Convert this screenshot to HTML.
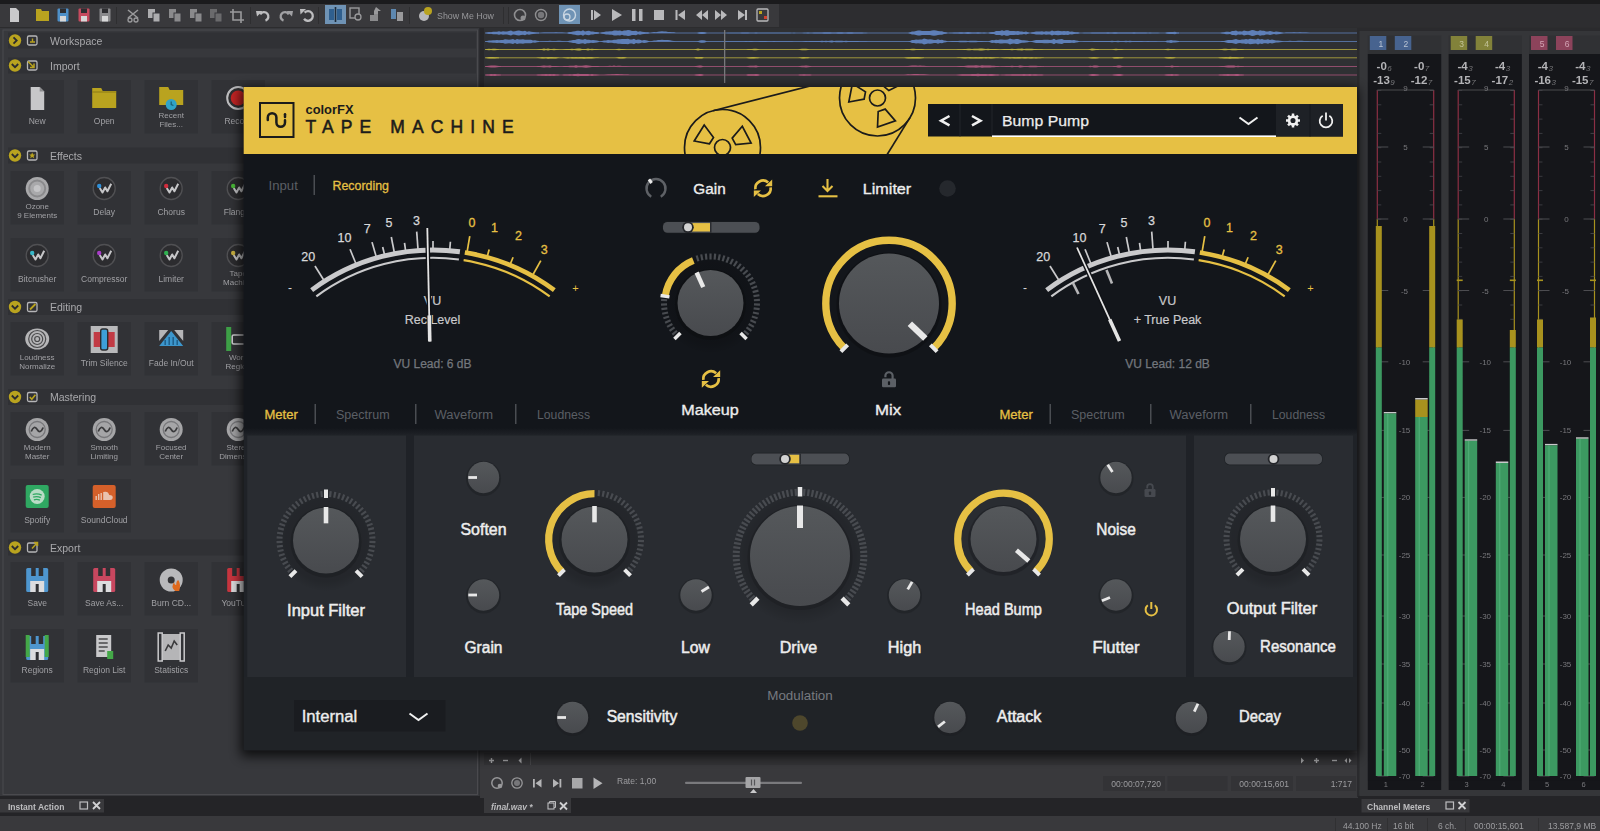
<!DOCTYPE html>
<html><head><meta charset="utf-8"><title>Tape Machine</title>
<style>
html,body{margin:0;padding:0;background:#2a2a2c;overflow:hidden}
svg{display:block;font-family:"Liberation Sans", sans-serif}
</style></head><body>
<svg width="1600" height="831" viewBox="0 0 1600 831">
<defs>
<linearGradient id="kg" x1="0" y1="0" x2="0" y2="1"><stop offset="0" stop-color="#55585B"/><stop offset="1" stop-color="#484A4E"/></linearGradient>
<linearGradient id="shL" x1="1" y1="0" x2="0" y2="0"><stop offset="0" stop-color="#000" stop-opacity="0.45"/><stop offset="1" stop-color="#000" stop-opacity="0"/></linearGradient>
<linearGradient id="shB" x1="0" y1="0" x2="0" y2="1"><stop offset="0" stop-color="#000" stop-opacity="0.5"/><stop offset="1" stop-color="#000" stop-opacity="0"/></linearGradient>
<linearGradient id="bodyfade" x1="0" y1="0" x2="0" y2="1"><stop offset="0" stop-color="#13161B"/><stop offset="1" stop-color="#1F2227"/></linearGradient>
<radialGradient id="ksh"><stop offset="0" stop-color="#000" stop-opacity="0.16"/><stop offset="0.8" stop-color="#000" stop-opacity="0.13"/><stop offset="1" stop-color="#000" stop-opacity="0"/></radialGradient>
<filter id="pshadow" color-interpolation-filters="sRGB" x="-5%" y="-5%" width="110%" height="110%"><feGaussianBlur stdDeviation="6"/></filter>
<filter id="soft" color-interpolation-filters="sRGB" x="-2%" y="-2%" width="104%" height="104%"><feGaussianBlur stdDeviation="0.6"/></filter>
<clipPath id="hdrclip"><rect x="243.7" y="87" width="1113.3" height="67"/></clipPath>
</defs>
<g id="hostapp" filter="url(#soft)">
<rect x="0" y="0" width="1600" height="831" fill="#2A2A2C"/>
<rect x="0" y="0" width="1600" height="4" fill="#1B1B1D"/>
<rect x="0" y="4" width="1600" height="24" fill="#39393C"/>
<rect x="779" y="4" width="821" height="24" fill="#2D2D30"/>
<rect x="0" y="27" width="1600" height="1.5" fill="#2C2C2E"/>
<path d="M10 8h6l3 3v11h-9z" fill="#C9C9CB"/>
<path d="M36 9h5l1 2h7v10h-13z" fill="#B9A31F"/>
<rect x="57.5" y="8.5" width="11" height="13" rx="1" fill="#4E90C8"/>
<rect x="60" y="8.5" width="6" height="4.5" fill="#2d2d30"/>
<rect x="60" y="16" width="6" height="5.5" fill="#d8d8d8"/>
<rect x="78.5" y="8.5" width="11" height="13" rx="1" fill="#C64A5E"/>
<rect x="81" y="8.5" width="6" height="4.5" fill="#2d2d30"/>
<rect x="81" y="16" width="6" height="5.5" fill="#d8d8d8"/>
<rect x="99.5" y="8.5" width="11" height="13" rx="1" fill="#8A8A8C"/>
<rect x="102" y="8.5" width="6" height="4.5" fill="#2d2d30"/>
<rect x="102" y="16" width="6" height="5.5" fill="#d8d8d8"/>
<rect x="116" y="7" width="1" height="17" fill="#2e2e30"/>
<path d="M128 10l10 8M138 10l-10 8" stroke="#9A9A9C" stroke-width="1.6" fill="none"/>
<circle cx="130" cy="20" r="2" fill="none" stroke="#9A9A9C" stroke-width="1.3"/><circle cx="136" cy="20" r="2" fill="none" stroke="#9A9A9C" stroke-width="1.3"/>
<rect x="148" y="9" width="7" height="9" fill="#ADADAF"/><rect x="153" y="13" width="7" height="9" fill="#ADADAF" stroke="#39393C" stroke-width="1"/>
<rect x="169" y="9" width="7" height="9" fill="#8A8A8C"/><rect x="174" y="13" width="7" height="9" fill="#8A8A8C" stroke="#39393C" stroke-width="1"/>
<rect x="190" y="9" width="7" height="9" fill="#8A8A8C"/><rect x="195" y="13" width="7" height="9" fill="#8A8A8C" stroke="#39393C" stroke-width="1"/>
<rect x="210" y="9" width="7" height="9" fill="#6A6A6C"/><rect x="215" y="13" width="7" height="9" fill="#6A6A6C" stroke="#39393C" stroke-width="1"/>
<path d="M233 9v11h11M230 12h11v11" stroke="#9A9A9C" stroke-width="1.6" fill="none"/>
<rect x="250" y="7" width="1" height="17" fill="#2e2e30"/>
<path d="M260.19 14.30A4.4 4.4 0 1 1 265.50 20.63" stroke="#BDBDBF" stroke-width="2.400" fill="none"/><path d="M256 11.0h6.500l-5.500 5.500z" fill="#BDBDBF"/>
<path d="M288.81 14.30A4.4 4.4 0 1 0 283.50 20.63" stroke="#A0A0A3" stroke-width="2.400" fill="none"/><path d="M293 11.0h-6.500l5.500 5.500z" fill="#A0A0A3"/>
<path d="M304.61 12.61A4.8 4.8 0 1 1 304.07 18.75" stroke="#BDBDBF" stroke-width="2.300" fill="none"/><path d="M300 9.0h6l-5.500 5.500z" fill="#BDBDBF"/>
<rect x="318" y="7" width="1" height="17" fill="#2e2e30"/>
<rect x="325" y="5" width="21" height="19" fill="#6F93B5"/>
<rect x="329" y="9" width="5" height="11" fill="#2F5F8E"/><rect x="337" y="9" width="5" height="11" fill="#2F5F8E"/><rect x="334.7" y="7" width="1.6" height="15" fill="#1d2b3a"/>
<rect x="350" y="8" width="9" height="10" fill="none" stroke="#9A9A9C" stroke-width="1.4"/><circle cx="358" cy="17" r="3" fill="#39393C" stroke="#9A9A9C" stroke-width="1.3"/>
<path d="M370 21v-6h4v-3h4v9z" fill="#8A8A8C"/><path d="M376 7l5 4h-3v3h-4v-3z" fill="#9A9A9C"/>
<rect x="391" y="9" width="5" height="10" fill="#5E88B0"/><rect x="397" y="12" width="6" height="9" fill="#9A9A9C"/>
<rect x="409" y="7" width="1" height="17" fill="#2e2e30"/>
<circle cx="424" cy="16" r="5" fill="#B8B8BA"/><circle cx="428" cy="11" r="4" fill="#B9A31F"/>
<text x="437" y="19" font-size="9" fill="#97979A" text-anchor="start" font-weight="normal"  textLength="57" lengthAdjust="spacingAndGlyphs">Show Me How</text>
<rect x="503" y="7" width="1" height="17" fill="#2e2e30"/><rect x="508" y="7" width="1" height="17" fill="#2e2e30"/>
<circle cx="520" cy="15" r="5.5" fill="none" stroke="#8E8E90" stroke-width="1.6"/><circle cx="523" cy="18" r="2.5" fill="#8E8E90"/>
<circle cx="541" cy="15" r="5.5" fill="none" stroke="#8E8E90" stroke-width="1.4"/><circle cx="541" cy="15" r="3.2" fill="#77777A"/>
<rect x="559" y="5" width="21" height="19" fill="#6F93B5"/>
<circle cx="569.5" cy="15" r="6" fill="none" stroke="#C9D6E2" stroke-width="1.4"/><circle cx="567" cy="17" r="3" fill="none" stroke="#C9D6E2" stroke-width="1.3"/>
<rect x="591" y="10" width="2" height="10" fill="#B9B9BB"/><path d="M594 10l7 5l-7 5z" fill="#B9B9BB"/>
<path d="M612 9l10 6l-10 6z" fill="#B9B9BB"/>
<rect x="632" y="9" width="3.5" height="12" fill="#B9B9BB"/><rect x="639" y="9" width="3.5" height="12" fill="#B9B9BB"/>
<rect x="654" y="10" width="10" height="10" fill="#B9B9BB"/>
<rect x="675.5" y="10" width="2" height="10" fill="#B9B9BB"/><path d="M685 10l-7 5l7 5z" fill="#B9B9BB"/>
<path d="M702 10l-6 5l6 5zM708 10l-6 5l6 5z" fill="#B9B9BB"/>
<path d="M715 10l6 5l-6 5zM721 10l6 5l-6 5z" fill="#B9B9BB"/>
<path d="M738 10l7 5l-7 5z" fill="#B9B9BB"/><rect x="745" y="10" width="2" height="10" fill="#B9B9BB"/>
<rect x="757" y="9" width="11" height="12" rx="1" fill="none" stroke="#B9B9BB" stroke-width="1.3"/><rect x="759" y="11" width="3" height="3" fill="#B9A31F"/><rect x="764" y="16" width="3" height="3" fill="#D0402E"/>
<rect x="0" y="28" width="479.500" height="768" fill="#37383C"/>
<rect x="3" y="30" width="474.500" height="764.500" fill="none" stroke="#4A4A4E" stroke-width="1"/>
<rect x="0" y="796" width="1600" height="20" fill="#242427"/>
<rect x="8" y="32.5" width="468" height="16" fill="#303135"/>
<circle cx="15" cy="40.5" r="6.2" fill="#B9A31F"/>
<path d="M13.5 37.3l3.2 3.2l-3.2 3.2" stroke="#2c2c2e" stroke-width="1.8" fill="none"/>
<rect x="27.5" y="36.0" width="9.5" height="9" rx="1.5" fill="none" stroke="#B5B5B7" stroke-width="1.3"/>
<path d="M30 42.0h5M32.5 38.5v3.5" stroke="#B9A31F" stroke-width="1.4"/>
<text x="50" y="44.5" font-size="10.5" fill="#A9A9AC" text-anchor="start" font-weight="normal" >Workspace</text>
<rect x="8" y="57.5" width="468" height="16" fill="#303135"/>
<circle cx="15" cy="65.5" r="6.2" fill="#B9A31F"/>
<path d="M11.8 64.0l3.2 3.2l3.2 -3.2" stroke="#2c2c2e" stroke-width="1.8" fill="none"/>
<rect x="27.5" y="61.0" width="9.5" height="9" rx="1.5" fill="none" stroke="#B5B5B7" stroke-width="1.3"/>
<path d="M28 61.5l5.5 5.5M30 67.5h4v-4" stroke="#B9A31F" stroke-width="1.5" fill="none"/>
<text x="50" y="69.5" font-size="10.5" fill="#A9A9AC" text-anchor="start" font-weight="normal" >Import</text>
<rect x="8" y="147.5" width="468" height="16" fill="#303135"/>
<circle cx="15" cy="155.5" r="6.2" fill="#B9A31F"/>
<path d="M11.8 154.0l3.2 3.2l3.2 -3.2" stroke="#2c2c2e" stroke-width="1.8" fill="none"/>
<rect x="27.5" y="151.0" width="9.5" height="9" rx="1.5" fill="none" stroke="#B5B5B7" stroke-width="1.3"/>
<path d="M32.2 152.5l1 2h2l-1.6 1.5l.6 2.2l-2-1.2l-2 1.2l.6-2.2l-1.6-1.5h2z" fill="#B9A31F"/>
<text x="50" y="159.5" font-size="10.5" fill="#A9A9AC" text-anchor="start" font-weight="normal" >Effects</text>
<rect x="8" y="299" width="468" height="16" fill="#303135"/>
<circle cx="15" cy="307" r="6.2" fill="#B9A31F"/>
<path d="M11.8 305.5l3.2 3.2l3.2 -3.2" stroke="#2c2c2e" stroke-width="1.8" fill="none"/>
<rect x="27.5" y="302.5" width="9.5" height="9" rx="1.5" fill="none" stroke="#B5B5B7" stroke-width="1.3"/>
<path d="M30 309.5l5.5 -5.5" stroke="#B9A31F" stroke-width="1.8"/>
<text x="50" y="311" font-size="10.5" fill="#A9A9AC" text-anchor="start" font-weight="normal" >Editing</text>
<rect x="8" y="389" width="468" height="16" fill="#303135"/>
<circle cx="15" cy="397" r="6.2" fill="#B9A31F"/>
<path d="M11.8 395.5l3.2 3.2l3.2 -3.2" stroke="#2c2c2e" stroke-width="1.8" fill="none"/>
<rect x="27.5" y="392.5" width="9.5" height="9" rx="1.5" fill="none" stroke="#B5B5B7" stroke-width="1.3"/>
<path d="M29.8 397l2 2.2l3.6 -4.4" stroke="#B9A31F" stroke-width="1.6" fill="none"/>
<text x="50" y="401" font-size="10.5" fill="#A9A9AC" text-anchor="start" font-weight="normal" >Mastering</text>
<rect x="8" y="539.5" width="468" height="16" fill="#303135"/>
<circle cx="15" cy="547.5" r="6.2" fill="#B9A31F"/>
<path d="M11.8 546.0l3.2 3.2l3.2 -3.2" stroke="#2c2c2e" stroke-width="1.8" fill="none"/>
<rect x="27.5" y="543.0" width="9.5" height="9" rx="1.5" fill="none" stroke="#B5B5B7" stroke-width="1.3"/>
<path d="M32 548.5l5 -5.5M34 542.5h3.5v3.5" stroke="#B9A31F" stroke-width="1.5" fill="none"/>
<text x="50" y="551.5" font-size="10.5" fill="#A9A9AC" text-anchor="start" font-weight="normal" >Export</text>
<rect x="10.5" y="80" width="53.5" height="53.5" fill="#313236"/>
<text x="37.2" y="123.5" font-size="8.5" fill="#A0A0A4" text-anchor="middle" font-weight="normal" >New</text>
<path d="M30.700000000000003 87h9l4.5 4.5v18.5h-13.5z" fill="#C7C7C9"/><path d="M39.7 87v4.5h4.5z" fill="#8d8d8f"/>
<rect x="77.5" y="80" width="53.5" height="53.5" fill="#313236"/>
<text x="104.2" y="123.5" font-size="8.5" fill="#A0A0A4" text-anchor="middle" font-weight="normal" >Open</text>
<path d="M92.2 88h9l1.5 3h13.5v17h-24z" fill="#B9A31F"/><rect x="92.2" y="91.5" width="24" height="1" fill="#8c7b17"/>
<rect x="144.5" y="80" width="53.5" height="53.5" fill="#313236"/>
<text x="171.2" y="118" font-size="8" fill="#A0A0A4" text-anchor="middle" font-weight="normal" >Recent</text>
<text x="171.2" y="127" font-size="8" fill="#A0A0A4" text-anchor="middle" font-weight="normal" >Files...</text>
<path d="M159.2 87h9l1.5 3h13.5v15h-24z" fill="#B9A31F"/><circle cx="171.2" cy="104.5" r="5.5" fill="#2FA3C8"/><path d="M171.2 101.5v3l2.2 1" stroke="#1b5d73" stroke-width="1.2" fill="none"/>
<rect x="211.5" y="80" width="53.5" height="53.5" fill="#313236"/>
<text x="238.2" y="123.5" font-size="8.5" fill="#A0A0A4" text-anchor="middle" font-weight="normal" >Record</text>
<circle cx="238.2" cy="98" r="11" fill="#2f2f31" stroke="#BDBDBF" stroke-width="2"/><circle cx="238.2" cy="98" r="7.5" fill="#C22424"/>
<rect x="10.5" y="171" width="53.5" height="53.5" fill="#313236"/>
<text x="37.2" y="209" font-size="8" fill="#A0A0A4" text-anchor="middle" font-weight="normal" >Ozone</text>
<text x="37.2" y="218" font-size="8" fill="#A0A0A4" text-anchor="middle" font-weight="normal" >9 Elements</text>
<circle cx="37.2" cy="188.5" r="11.5" fill="#A9A9AB"/><circle cx="37.2" cy="188.5" r="8" fill="none" stroke="#8a8a8c" stroke-width="2"/><circle cx="37.2" cy="188.5" r="3.5" fill="#c4c4c6"/>
<rect x="77.5" y="171" width="53.5" height="53.5" fill="#313236"/>
<text x="104.2" y="214.5" font-size="8.5" fill="#A0A0A4" text-anchor="middle" font-weight="normal" >Delay</text>
<circle cx="104.2" cy="188.5" r="11" fill="#2C2C2F" stroke="#505053" stroke-width="1.3"/>
<path d="M99.7 188.0l2.800 4.500l2.700-5l2.200 3.800l3.800-7.500" stroke="#C6C6C8" stroke-width="2" fill="none" stroke-linejoin="round"/>
<circle cx="99.2" cy="186.0" r="2.200" fill="#2F8FD8"/>
<rect x="144.5" y="171" width="53.5" height="53.5" fill="#313236"/>
<text x="171.2" y="214.5" font-size="8.5" fill="#A0A0A4" text-anchor="middle" font-weight="normal" >Chorus</text>
<circle cx="171.2" cy="188.5" r="11" fill="#2C2C2F" stroke="#505053" stroke-width="1.3"/>
<path d="M166.7 188.0l2.800 4.500l2.700-5l2.200 3.800l3.800-7.500" stroke="#C6C6C8" stroke-width="2" fill="none" stroke-linejoin="round"/>
<circle cx="166.2" cy="186.0" r="2.200" fill="#D02C3C"/>
<rect x="211.5" y="171" width="53.5" height="53.5" fill="#313236"/>
<text x="238.2" y="214.5" font-size="8.5" fill="#A0A0A4" text-anchor="middle" font-weight="normal" >Flanger</text>
<circle cx="238.2" cy="188.5" r="11" fill="#2C2C2F" stroke="#505053" stroke-width="1.3"/>
<path d="M233.7 188.0l2.800 4.500l2.700-5l2.200 3.800l3.800-7.500" stroke="#C6C6C8" stroke-width="2" fill="none" stroke-linejoin="round"/>
<circle cx="233.2" cy="186.0" r="2.200" fill="#49B838"/>
<rect x="10.5" y="238" width="53.5" height="53.5" fill="#313236"/>
<text x="37.2" y="281.5" font-size="8.5" fill="#A0A0A4" text-anchor="middle" font-weight="normal" >Bitcrusher</text>
<circle cx="37.2" cy="255.5" r="11" fill="#2C2C2F" stroke="#505053" stroke-width="1.3"/>
<path d="M32.7 255.0l2.800 4.500l2.700-5l2.200 3.800l3.800-7.500" stroke="#C6C6C8" stroke-width="2" fill="none" stroke-linejoin="round"/>
<circle cx="32.2" cy="253.0" r="2.200" fill="#38B8C8"/>
<rect x="77.5" y="238" width="53.5" height="53.5" fill="#313236"/>
<text x="104.2" y="281.5" font-size="8.5" fill="#A0A0A4" text-anchor="middle" font-weight="normal" >Compressor</text>
<circle cx="104.2" cy="255.5" r="11" fill="#2C2C2F" stroke="#505053" stroke-width="1.3"/>
<path d="M99.7 255.0l2.800 4.500l2.700-5l2.200 3.800l3.800-7.500" stroke="#C6C6C8" stroke-width="2" fill="none" stroke-linejoin="round"/>
<circle cx="99.2" cy="253.0" r="2.200" fill="#A83CC8"/>
<rect x="144.5" y="238" width="53.5" height="53.5" fill="#313236"/>
<text x="171.2" y="281.5" font-size="8.5" fill="#A0A0A4" text-anchor="middle" font-weight="normal" >Limiter</text>
<circle cx="171.2" cy="255.5" r="11" fill="#2C2C2F" stroke="#505053" stroke-width="1.3"/>
<path d="M166.7 255.0l2.800 4.500l2.700-5l2.200 3.800l3.800-7.500" stroke="#C6C6C8" stroke-width="2" fill="none" stroke-linejoin="round"/>
<circle cx="166.2" cy="253.0" r="2.200" fill="#30B050"/>
<rect x="211.5" y="238" width="53.5" height="53.5" fill="#313236"/>
<text x="238.2" y="276" font-size="8" fill="#A0A0A4" text-anchor="middle" font-weight="normal" >Tape</text>
<text x="238.2" y="285" font-size="8" fill="#A0A0A4" text-anchor="middle" font-weight="normal" >Machine</text>
<circle cx="238.2" cy="255.5" r="11" fill="#2C2C2F" stroke="#505053" stroke-width="1.3"/>
<path d="M233.7 255.0l2.800 4.500l2.700-5l2.200 3.800l3.800-7.500" stroke="#C6C6C8" stroke-width="2" fill="none" stroke-linejoin="round"/>
<circle cx="233.2" cy="253.0" r="2.200" fill="#C8B040"/>
<rect x="10.5" y="322" width="53.5" height="53.5" fill="#313236"/>
<text x="37.2" y="360" font-size="8" fill="#A0A0A4" text-anchor="middle" font-weight="normal" >Loudness</text>
<text x="37.2" y="369" font-size="8" fill="#A0A0A4" text-anchor="middle" font-weight="normal" >Normalize</text>
<ellipse cx="37.2" cy="339" rx="12" ry="10.5" fill="#B5B5B7"/>
<circle cx="37.2" cy="339" r="2.5" fill="none" stroke="#4a4a4c" stroke-width="1.2"/>
<circle cx="37.2" cy="339" r="5.5" fill="none" stroke="#4a4a4c" stroke-width="1.2"/>
<circle cx="37.2" cy="339" r="8.5" fill="none" stroke="#4a4a4c" stroke-width="1.2"/>
<rect x="77.5" y="322" width="53.5" height="53.5" fill="#313236"/>
<text x="104.2" y="365.5" font-size="8.5" fill="#A0A0A4" text-anchor="middle" font-weight="normal" >Trim Silence</text>
<rect x="90.7" y="326" width="27" height="27" fill="#B9B9BB"/><rect x="93.7" y="332" width="7" height="15" fill="#C23B45"/><rect x="107.7" y="332" width="7" height="15" fill="#C23B45"/><rect x="100.7" y="329" width="7" height="21" rx="2" fill="#3E9FD8" stroke="#2c2c2e" stroke-width="1.4"/>
<rect x="144.5" y="322" width="53.5" height="53.5" fill="#313236"/>
<text x="171.2" y="365.5" font-size="8.5" fill="#A0A0A4" text-anchor="middle" font-weight="normal" >Fade In/Out</text>
<path d="M159.2 346l12 -15l12 15z" fill="#3C96CC"/><path d="M159.2 330h9l-9 11zM183.2 330h-9l9 11z" fill="#B5B5B7"/><path d="M165.2 345v-5M169.2 345v-8M173.2 345v-8M177.2 345v-5" stroke="#1f5f8a" stroke-width="1.5"/>
<rect x="211.5" y="322" width="53.5" height="53.5" fill="#313236"/>
<text x="238.2" y="360" font-size="8" fill="#A0A0A4" text-anchor="middle" font-weight="normal" >Work</text>
<text x="238.2" y="369" font-size="8" fill="#A0A0A4" text-anchor="middle" font-weight="normal" >Region</text>
<rect x="226.2" y="327" width="5" height="24" fill="#3EA047"/><rect x="232.2" y="335" width="14" height="9" rx="1.5" fill="none" stroke="#C9C9CB" stroke-width="1.6"/>
<rect x="10.5" y="412" width="53.5" height="53.5" fill="#313236"/>
<text x="37.2" y="450" font-size="8" fill="#A0A0A4" text-anchor="middle" font-weight="normal" >Modern</text>
<text x="37.2" y="459" font-size="8" fill="#A0A0A4" text-anchor="middle" font-weight="normal" >Master</text>
<circle cx="37.2" cy="429.5" r="11.5" fill="#A5A5A7"/><circle cx="37.2" cy="429.5" r="8" fill="none" stroke="#77777a" stroke-width="1.3"/>
<path d="M31.200000000000003 431.5q3 -7 6 -2t6 -2" stroke="#3a3a3c" stroke-width="1.8" fill="none"/>
<rect x="77.5" y="412" width="53.5" height="53.5" fill="#313236"/>
<text x="104.2" y="450" font-size="8" fill="#A0A0A4" text-anchor="middle" font-weight="normal" >Smooth</text>
<text x="104.2" y="459" font-size="8" fill="#A0A0A4" text-anchor="middle" font-weight="normal" >Limiting</text>
<circle cx="104.2" cy="429.5" r="11.5" fill="#A5A5A7"/><circle cx="104.2" cy="429.5" r="8" fill="none" stroke="#77777a" stroke-width="1.3"/>
<path d="M98.2 431.5q3 -7 6 -2t6 -2" stroke="#3a3a3c" stroke-width="1.8" fill="none"/>
<rect x="144.5" y="412" width="53.5" height="53.5" fill="#313236"/>
<text x="171.2" y="450" font-size="8" fill="#A0A0A4" text-anchor="middle" font-weight="normal" >Focused</text>
<text x="171.2" y="459" font-size="8" fill="#A0A0A4" text-anchor="middle" font-weight="normal" >Center</text>
<circle cx="171.2" cy="429.5" r="11.5" fill="#A5A5A7"/><circle cx="171.2" cy="429.5" r="8" fill="none" stroke="#77777a" stroke-width="1.3"/>
<path d="M165.2 431.5q3 -7 6 -2t6 -2" stroke="#3a3a3c" stroke-width="1.8" fill="none"/>
<rect x="211.5" y="412" width="53.5" height="53.5" fill="#313236"/>
<text x="238.2" y="450" font-size="8" fill="#A0A0A4" text-anchor="middle" font-weight="normal" >Stereo</text>
<text x="238.2" y="459" font-size="8" fill="#A0A0A4" text-anchor="middle" font-weight="normal" >Dimension</text>
<circle cx="238.2" cy="429.5" r="11.5" fill="#A5A5A7"/><circle cx="238.2" cy="429.5" r="8" fill="none" stroke="#77777a" stroke-width="1.3"/>
<path d="M232.2 431.5q3 -7 6 -2t6 -2" stroke="#3a3a3c" stroke-width="1.8" fill="none"/>
<rect x="10.5" y="479" width="53.5" height="53.5" fill="#313236"/>
<text x="37.2" y="522.5" font-size="8.5" fill="#A0A0A4" text-anchor="middle" font-weight="normal" >Spotify</text>
<rect x="25.700000000000003" y="485" width="23" height="23" rx="2" fill="#2FA862"/><circle cx="37.2" cy="496.5" r="7.5" fill="#B9DCC6"/><path d="M32.7 494.5q4.5 -1.6 9 .6M33.2 497.2q4 -1.3 7.6 .5M33.900000000000006 499.8q3 -1 6 .4" stroke="#2FA862" stroke-width="1.3" fill="none"/>
<rect x="77.5" y="479" width="53.5" height="53.5" fill="#313236"/>
<text x="104.2" y="522.5" font-size="8.5" fill="#A0A0A4" text-anchor="middle" font-weight="normal" >SoundCloud</text>
<rect x="92.7" y="485" width="23" height="23" rx="2" fill="#D5602A"/><path d="M96.2 500v-4M98.7 500v-6M101.2 500v-7" stroke="#E9C2AE" stroke-width="1.4"/><path d="M103.2 500v-8q5 -1.5 6 3q4 0 3.5 3q-.3 2 -2.5 2z" fill="#E9C2AE"/>
<rect x="10.5" y="562" width="53.5" height="53.5" fill="#313236"/>
<text x="37.2" y="605.5" font-size="8.5" fill="#A0A0A4" text-anchor="middle" font-weight="normal" >Save</text>
<rect x="26.200000000000003" y="568" width="22" height="24" rx="1.5" fill="#4E96CF"/><rect x="31.200000000000003" y="568" width="12" height="8" fill="#303033"/><rect x="35.7" y="568" width="3" height="8" fill="#4E96CF"/><rect x="30.200000000000003" y="581" width="14" height="11" fill="#DCDCDE"/><rect x="35.7" y="584" width="3" height="8" fill="#303033"/>
<rect x="77.5" y="562" width="53.5" height="53.5" fill="#313236"/>
<text x="104.2" y="605.5" font-size="8.5" fill="#A0A0A4" text-anchor="middle" font-weight="normal" >Save As...</text>
<rect x="93.2" y="568" width="22" height="24" rx="1.5" fill="#C8475F"/><rect x="98.2" y="568" width="12" height="8" fill="#303033"/><rect x="102.7" y="568" width="3" height="8" fill="#C8475F"/><rect x="97.2" y="581" width="14" height="11" fill="#DCDCDE"/><rect x="102.7" y="584" width="3" height="8" fill="#303033"/>
<rect x="144.5" y="562" width="53.5" height="53.5" fill="#313236"/>
<text x="171.2" y="605.5" font-size="8.5" fill="#A0A0A4" text-anchor="middle" font-weight="normal" >Burn CD...</text>
<circle cx="171.2" cy="580" r="11.5" fill="#B9B9BB"/><circle cx="171.2" cy="580" r="3.5" fill="#343437"/><path d="M175.2 591q-5 -4 -1 -9q0 3 2 3q0 -4 2 -5q3 4 1 11z" fill="#E0691C"/>
<rect x="211.5" y="562" width="53.5" height="53.5" fill="#313236"/>
<text x="238.2" y="605.5" font-size="8.5" fill="#A0A0A4" text-anchor="middle" font-weight="normal" >YouTube</text>
<rect x="227.2" y="568" width="22" height="24" rx="1.5" fill="#C8353F"/><rect x="232.2" y="568" width="12" height="8" fill="#303033"/><rect x="236.7" y="568" width="3" height="8" fill="#C8353F"/><rect x="231.2" y="581" width="14" height="11" fill="#DCDCDE"/><rect x="236.7" y="584" width="3" height="8" fill="#303033"/>
<rect x="10.5" y="629" width="53.5" height="53.5" fill="#313236"/>
<text x="37.2" y="672.5" font-size="8.5" fill="#A0A0A4" text-anchor="middle" font-weight="normal" >Regions</text>
<rect x="26.200000000000003" y="636" width="22" height="24" rx="1.5" fill="#4E96CF"/><rect x="31.200000000000003" y="636" width="12" height="8" fill="#303033"/><rect x="35.7" y="636" width="3" height="8" fill="#4E96CF"/><rect x="30.200000000000003" y="649" width="14" height="11" fill="#DCDCDE"/><rect x="35.7" y="652" width="3" height="8" fill="#303033"/>
<rect x="25.700000000000003" y="635" width="4" height="22" fill="#44A848"/><rect x="44.7" y="635" width="4" height="22" fill="#44A848"/>
<rect x="77.5" y="629" width="53.5" height="53.5" fill="#313236"/>
<text x="104.2" y="672.5" font-size="8.5" fill="#A0A0A4" text-anchor="middle" font-weight="normal" >Region List</text>
<rect x="96.2" y="635" width="15" height="22" fill="#C9C9CB"/><path d="M98.7 639h9M98.7 643h9M98.7 647h9M98.7 651h6" stroke="#4a4a4c" stroke-width="1.5"/><rect x="107.2" y="651" width="6" height="8" fill="#44A848"/>
<rect x="144.5" y="629" width="53.5" height="53.5" fill="#313236"/>
<text x="171.2" y="672.5" font-size="8.5" fill="#A0A0A4" text-anchor="middle" font-weight="normal" >Statistics</text>
<rect x="162.2" y="634" width="18" height="26" fill="#B5B5B7"/><rect x="158.2" y="633" width="4" height="28" fill="none" stroke="#C9C9CB" stroke-width="1.5"/><rect x="180.2" y="633" width="4" height="28" fill="none" stroke="#C9C9CB" stroke-width="1.5"/><path d="M165.2 651l3 -6l3 3l3 -7l3 4" stroke="#3a3a3c" stroke-width="1.6" fill="none"/>
<rect x="0" y="799" width="104" height="13.500" fill="#39393C"/>
<text x="8" y="809.5" font-size="8.5" fill="#BDBDBF" text-anchor="start" font-weight="bold" >Instant Action</text>
<rect x="80" y="802" width="7.5" height="7" fill="none" stroke="#BDBDBF" stroke-width="1.2"/>
<path d="M93 802l7 7M100 802l-7 7" stroke="#D0D0D2" stroke-width="1.8"/>
<rect x="0" y="816" width="1600" height="15" fill="#39393C"/>
<text x="1343" y="828.5" font-size="8.5" fill="#9D9DA0" text-anchor="start" font-weight="normal" >44.100 Hz</text>
<text x="1393" y="828.5" font-size="8.5" fill="#9D9DA0" text-anchor="start" font-weight="normal" >16 bit</text>
<text x="1438" y="828.5" font-size="8.5" fill="#9D9DA0" text-anchor="start" font-weight="normal" >6 ch.</text>
<text x="1474" y="828.5" font-size="8.5" fill="#9D9DA0" text-anchor="start" font-weight="normal" >00:00:15,601</text>
<text x="1548" y="828.5" font-size="8.5" fill="#9D9DA0" text-anchor="start" font-weight="normal" >13.587,9 MB</text>
<rect x="1335" y="818" width="1" height="13" fill="#303032"/>
<rect x="1387" y="818" width="1" height="13" fill="#303032"/>
<rect x="1427" y="818" width="1" height="13" fill="#303032"/>
<rect x="1465" y="818" width="1" height="13" fill="#303032"/>
<rect x="1538" y="818" width="1" height="13" fill="#303032"/>
<rect x="479.500" y="28" width="881" height="62" fill="#27272A"/>
<rect x="484" y="28" width="874" height="60" fill="#2F3033"/>
<rect x="485" y="32.5" width="872" height="1" fill="#5E7FB8" opacity="0.8"/>
<path d="M485 33.0 L487 32.5 L489 32.1 L491 32.2 L493 31.7 L495 31.7 L497 31.8 L499 31.3 L501 31.7 L503 31.2 L505 31.5 L507 31.5 L509 31.0 L511 30.5 L513 31.4 L515 31.3 L517 30.8 L519 30.5 L521 31.0 L523 31.2 L525 30.7 L527 31.8 L529 31.2 L531 31.8 L533 32.1 L535 32.2 L537 32.4 L539 32.6 L539 33.4 L537 33.6 L535 33.8 L533 33.9 L531 34.2 L529 34.8 L527 34.2 L525 35.3 L523 34.8 L521 35.0 L519 35.5 L517 35.2 L515 34.7 L513 34.6 L511 35.5 L509 35.0 L507 34.5 L505 34.5 L503 34.8 L501 34.3 L499 34.7 L497 34.2 L495 34.3 L493 34.3 L491 33.8 L489 33.9 L487 33.5 L485 33.0Z" fill="#5E7FB8"/>
<path d="M540 33.0 L542 32.7 L544 32.5 L546 32.5 L548 32.4 L550 32.5 L552 32.5 L554 32.4 L556 32.3 L558 32.4 L560 32.5 L562 32.5 L564 32.7 L566 33.0-0.0j L566 33.0+0.0j L564 33.3 L562 33.5 L560 33.5 L558 33.6 L556 33.7 L554 33.6 L552 33.5 L550 33.5 L548 33.6 L546 33.5 L544 33.5 L542 33.3 L540 33.0Z" fill="#5E7FB8"/>
<path d="M567 33.0 L569 32.1 L571 32.0 L573 31.5 L575 31.3 L577 30.7 L579 30.8 L581 31.2 L583 30.3 L585 31.4 L587 31.1 L589 30.8 L591 31.6 L593 31.4 L595 32.0 L597 31.9 L599 32.4 L599 33.6 L597 34.1 L595 34.0 L593 34.6 L591 34.4 L589 35.2 L587 34.9 L585 34.6 L583 35.7 L581 34.8 L579 35.2 L577 35.3 L575 34.7 L573 34.5 L571 34.0 L569 33.9 L567 33.0Z" fill="#5E7FB8"/>
<path d="M600 33.0 L602 32.2 L604 32.1 L606 31.6 L608 31.4 L610 31.2 L612 31.2 L614 30.6 L616 30.4 L618 30.8 L620 30.5 L622 31.3 L624 30.4 L626 30.5 L628 30.0 L630 30.3 L632 31.1 L634 31.0 L636 30.8 L638 31.7 L640 31.3 L642 31.8 L644 32.0 L646 32.2 L648 32.2 L650 33.0 L650 33.0 L648 33.8 L646 33.8 L644 34.0 L642 34.2 L640 34.7 L638 34.3 L636 35.2 L634 35.0 L632 34.9 L630 35.7 L628 36.0 L626 35.5 L624 35.6 L622 34.7 L620 35.5 L618 35.2 L616 35.6 L614 35.4 L612 34.8 L610 34.8 L608 34.6 L606 34.4 L604 33.9 L602 33.8 L600 33.0Z" fill="#5E7FB8"/>
<path d="M650 33.0 L652 32.4 L654 31.9 L656 32.2 L658 31.8 L660 31.6 L662 31.3 L664 31.4 L666 31.4 L668 31.9 L670 32.0 L672 32.2 L674 32.3 L676 33.0-0.0j L676 33.0+0.0j L674 33.7 L672 33.8 L670 34.0 L668 34.1 L666 34.6 L664 34.6 L662 34.7 L660 34.4 L658 34.2 L656 33.8 L654 34.1 L652 33.6 L650 33.0Z" fill="#5E7FB8"/>
<path d="M697 33.0 L699 32.3 L701 32.0 L703 32.0 L705 32.2 L707 33.0 L707 33.0 L705 33.8 L703 34.0 L701 34.0 L699 33.7 L697 33.0Z" fill="#5E7FB8"/>
<path d="M720 33.0 L722 32.9 L724 32.9 L726 32.9 L728 32.8 L730 32.8 L732 32.8 L734 32.8 L736 32.7 L738 32.7 L740 32.8 L742 32.6 L744 32.6 L746 32.6 L748 32.6 L750 32.7 L752 32.7 L754 32.7 L756 32.6 L758 32.7 L760 32.7 L762 32.7 L764 32.7 L766 32.7 L768 32.7 L770 32.8 L772 32.7 L774 32.8 L776 32.7 L778 32.8 L780 32.7 L782 32.7 L784 32.8 L786 32.8 L788 32.8 L790 32.8 L792 32.9 L794 32.8 L796 32.9 L798 32.9 L800 33.0 L800 33.0 L798 33.1 L796 33.1 L794 33.2 L792 33.1 L790 33.2 L788 33.2 L786 33.2 L784 33.2 L782 33.3 L780 33.3 L778 33.2 L776 33.3 L774 33.2 L772 33.3 L770 33.2 L768 33.3 L766 33.3 L764 33.3 L762 33.3 L760 33.3 L758 33.3 L756 33.4 L754 33.3 L752 33.3 L750 33.3 L748 33.4 L746 33.4 L744 33.4 L742 33.4 L740 33.2 L738 33.3 L736 33.3 L734 33.2 L732 33.2 L730 33.2 L728 33.2 L726 33.1 L724 33.1 L722 33.1 L720 33.0Z" fill="#5E7FB8"/>
<path d="M800 33.0 L802 32.9 L804 32.8 L806 32.7 L808 32.6 L810 32.7 L812 32.7 L814 32.4 L816 32.4 L818 32.5 L820 32.4 L822 32.5 L824 32.3 L826 32.2 L828 32.2 L830 32.2 L832 32.4 L834 32.4 L836 32.4 L838 32.2 L840 32.3 L842 32.2 L844 32.4 L846 32.5 L848 32.3 L850 32.2 L852 32.3 L854 32.4 L856 32.4 L858 32.5 L860 32.6 L862 32.6 L864 32.7 L866 32.8 L868 32.9 L870 33.0 L870 33.0 L868 33.1 L866 33.2 L864 33.3 L862 33.4 L860 33.4 L858 33.5 L856 33.6 L854 33.6 L852 33.7 L850 33.8 L848 33.7 L846 33.5 L844 33.6 L842 33.8 L840 33.7 L838 33.8 L836 33.6 L834 33.6 L832 33.6 L830 33.8 L828 33.8 L826 33.8 L824 33.7 L822 33.5 L820 33.6 L818 33.5 L816 33.6 L814 33.6 L812 33.3 L810 33.3 L808 33.4 L806 33.3 L804 33.2 L802 33.1 L800 33.0Z" fill="#5E7FB8"/>
<path d="M908 33.0 L910 32.2 L912 31.5 L914 31.6 L916 30.9 L918 30.6 L920 30.4 L922 31.0 L924 31.1 L926 31.1 L928 31.1 L930 31.1 L932 30.6 L934 30.3 L936 30.5 L938 31.1 L940 31.2 L942 31.3 L944 32.1 L946 32.2 L948 33.0 L948 33.0 L946 33.8 L944 33.9 L942 34.7 L940 34.8 L938 34.9 L936 35.5 L934 35.7 L932 35.4 L930 34.9 L928 34.9 L926 34.9 L924 34.9 L922 35.0 L920 35.6 L918 35.4 L916 35.1 L914 34.4 L912 34.5 L910 33.8 L908 33.0Z" fill="#5E7FB8"/>
<path d="M948 33.0 L950 32.7 L952 32.7 L954 32.6 L956 32.4 L958 32.5 L960 32.3 L962 32.2 L964 32.4 L966 32.3 L968 32.1 L970 32.2 L972 32.5 L974 32.5 L976 32.5 L978 32.3 L980 32.4 L982 32.7 L984 32.6 L986 32.7 L988 33.0 L988 33.0 L986 33.3 L984 33.4 L982 33.3 L980 33.6 L978 33.7 L976 33.5 L974 33.5 L972 33.5 L970 33.8 L968 33.9 L966 33.7 L964 33.6 L962 33.8 L960 33.7 L958 33.5 L956 33.6 L954 33.4 L952 33.3 L950 33.3 L948 33.0Z" fill="#5E7FB8"/>
<path d="M988 33.0 L990 32.2 L992 32.1 L994 32.0 L996 30.9 L998 31.0 L1000 31.0 L1002 30.3 L1004 30.9 L1006 30.2 L1008 30.2 L1010 31.1 L1012 31.0 L1014 31.0 L1016 31.2 L1018 30.9 L1020 31.4 L1022 31.4 L1024 31.9 L1026 31.6 L1028 32.3 L1030 33.0 L1030 33.0 L1028 33.7 L1026 34.4 L1024 34.1 L1022 34.6 L1020 34.6 L1018 35.1 L1016 34.8 L1014 35.0 L1012 35.0 L1010 34.9 L1008 35.8 L1006 35.8 L1004 35.1 L1002 35.7 L1000 35.0 L998 35.0 L996 35.1 L994 34.0 L992 33.9 L990 33.8 L988 33.0Z" fill="#5E7FB8"/>
<path d="M1030 33.0 L1032 32.3 L1034 32.1 L1036 31.6 L1038 31.6 L1040 31.5 L1042 31.3 L1044 31.7 L1046 31.2 L1048 31.4 L1050 31.6 L1052 30.6 L1054 31.3 L1056 30.9 L1058 30.7 L1060 30.9 L1062 31.2 L1064 31.1 L1066 31.2 L1068 31.1 L1070 31.8 L1072 31.6 L1074 32.0 L1076 32.2 L1078 32.3 L1080 33.0 L1080 33.0 L1078 33.7 L1076 33.8 L1074 34.0 L1072 34.4 L1070 34.2 L1068 34.9 L1066 34.8 L1064 34.9 L1062 34.8 L1060 35.1 L1058 35.3 L1056 35.1 L1054 34.7 L1052 35.4 L1050 34.4 L1048 34.6 L1046 34.8 L1044 34.3 L1042 34.7 L1040 34.5 L1038 34.4 L1036 34.4 L1034 33.9 L1032 33.7 L1030 33.0Z" fill="#5E7FB8"/>
<path d="M1080 33.0 L1082 32.9 L1084 32.8 L1086 32.8 L1088 32.7 L1090 32.7 L1092 32.6 L1094 32.6 L1096 32.6 L1098 32.5 L1100 32.5 L1102 32.4 L1104 32.4 L1106 32.4 L1108 32.3 L1110 32.5 L1112 32.4 L1114 32.3 L1116 32.3 L1118 32.5 L1120 32.5 L1122 32.4 L1124 32.6 L1126 32.5 L1128 32.6 L1130 32.4 L1132 32.4 L1134 32.3 L1136 32.6 L1138 32.4 L1140 32.5 L1142 32.6 L1144 32.5 L1146 32.5 L1148 32.7 L1150 32.6 L1152 32.7 L1154 32.8 L1156 32.8 L1158 32.8 L1160 33.0 L1160 33.0 L1158 33.2 L1156 33.2 L1154 33.2 L1152 33.3 L1150 33.4 L1148 33.3 L1146 33.5 L1144 33.5 L1142 33.4 L1140 33.5 L1138 33.6 L1136 33.4 L1134 33.7 L1132 33.6 L1130 33.6 L1128 33.4 L1126 33.5 L1124 33.4 L1122 33.6 L1120 33.5 L1118 33.5 L1116 33.7 L1114 33.7 L1112 33.6 L1110 33.5 L1108 33.7 L1106 33.6 L1104 33.6 L1102 33.6 L1100 33.5 L1098 33.5 L1096 33.4 L1094 33.4 L1092 33.4 L1090 33.3 L1088 33.3 L1086 33.2 L1084 33.2 L1082 33.1 L1080 33.0Z" fill="#5E7FB8"/>
<path d="M1165 33.0 L1167 32.3 L1169 32.1 L1171 32.1 L1173 32.0 L1175 31.8 L1177 32.4 L1179 32.5 L1179 33.5 L1177 33.6 L1175 34.2 L1173 34.0 L1171 33.9 L1169 33.9 L1167 33.7 L1165 33.0Z" fill="#5E7FB8"/>
<path d="M1220 33.0 L1222 32.6 L1224 32.2 L1226 31.8 L1228 31.7 L1230 31.9 L1232 30.9 L1234 30.9 L1236 30.6 L1238 31.5 L1240 31.2 L1242 31.4 L1244 30.4 L1246 31.0 L1248 31.2 L1250 30.8 L1252 30.1 L1254 30.3 L1256 31.0 L1258 31.2 L1260 30.2 L1262 30.8 L1264 30.7 L1266 31.5 L1268 31.6 L1270 31.0 L1272 31.4 L1274 31.9 L1276 31.4 L1278 31.8 L1280 32.0 L1282 32.6 L1284 33.0 L1284 33.0 L1282 33.4 L1280 34.0 L1278 34.2 L1276 34.6 L1274 34.1 L1272 34.6 L1270 35.0 L1268 34.4 L1266 34.5 L1264 35.3 L1262 35.2 L1260 35.8 L1258 34.8 L1256 35.0 L1254 35.7 L1252 35.9 L1250 35.2 L1248 34.8 L1246 35.0 L1244 35.6 L1242 34.6 L1240 34.8 L1238 34.5 L1236 35.4 L1234 35.1 L1232 35.1 L1230 34.1 L1228 34.3 L1226 34.2 L1224 33.8 L1222 33.4 L1220 33.0Z" fill="#5E7FB8"/>
<path d="M1284 33.0 L1286 32.6 L1288 32.6 L1290 32.5 L1292 32.4 L1294 32.2 L1296 32.4 L1298 32.5 L1300 32.3 L1302 32.5 L1304 32.6 L1306 32.6 L1308 32.8 L1310 33.0-0.0j L1310 33.0+0.0j L1308 33.2 L1306 33.4 L1304 33.4 L1302 33.5 L1300 33.7 L1298 33.5 L1296 33.6 L1294 33.8 L1292 33.6 L1290 33.5 L1288 33.4 L1286 33.4 L1284 33.0Z" fill="#5E7FB8"/>
<rect x="485" y="41.0" width="872" height="1" fill="#5E7FB8" opacity="0.8"/>
<path d="M485 41.5 L487 41.0 L489 40.5 L491 40.5 L493 40.2 L495 40.3 L497 40.1 L499 40.3 L501 39.9 L503 40.1 L505 39.3 L507 39.4 L509 39.8 L511 39.4 L513 38.9 L515 39.9 L517 39.1 L519 39.6 L521 39.6 L523 39.3 L525 39.8 L527 39.8 L529 39.8 L531 39.8 L533 40.4 L535 40.3 L537 40.7 L539 41.1 L539 41.9 L537 42.3 L535 42.7 L533 42.6 L531 43.2 L529 43.2 L527 43.2 L525 43.2 L523 43.7 L521 43.4 L519 43.4 L517 43.9 L515 43.1 L513 44.1 L511 43.6 L509 43.2 L507 43.6 L505 43.7 L503 42.9 L501 43.1 L499 42.7 L497 42.9 L495 42.7 L493 42.8 L491 42.5 L489 42.5 L487 42.0 L485 41.5Z" fill="#5E7FB8"/>
<path d="M540 41.5 L542 41.2 L544 41.2 L546 41.1 L548 41.0 L550 40.7 L552 40.9 L554 40.9 L556 41.0 L558 40.8 L560 40.8 L562 41.0 L564 41.2 L566 41.5-0.0j L566 41.5+0.0j L564 41.8 L562 42.0 L560 42.2 L558 42.2 L556 42.0 L554 42.1 L552 42.1 L550 42.3 L548 42.0 L546 41.9 L544 41.8 L542 41.8 L540 41.5Z" fill="#5E7FB8"/>
<path d="M567 41.5 L569 40.7 L571 40.6 L573 40.1 L575 40.1 L577 39.2 L579 39.0 L581 39.4 L583 39.7 L585 38.9 L587 39.7 L589 39.7 L591 40.2 L593 40.0 L595 40.2 L597 40.5 L599 41.1 L599 41.9 L597 42.5 L595 42.8 L593 43.0 L591 42.8 L589 43.3 L587 43.3 L585 44.1 L583 43.3 L581 43.6 L579 44.0 L577 43.8 L575 42.9 L573 42.9 L571 42.4 L569 42.3 L567 41.5Z" fill="#5E7FB8"/>
<path d="M600 41.5 L602 41.0 L604 40.6 L606 40.5 L608 40.1 L610 40.3 L612 40.2 L614 39.7 L616 39.7 L618 39.2 L620 39.2 L622 38.9 L624 39.0 L626 38.9 L628 38.7 L630 39.4 L632 39.5 L634 38.8 L636 39.9 L638 39.4 L640 39.7 L642 40.4 L644 40.0 L646 40.3 L648 40.8 L650 41.5 L650 41.5 L648 42.2 L646 42.7 L644 43.0 L642 42.6 L640 43.3 L638 43.6 L636 43.1 L634 44.2 L632 43.5 L630 43.6 L628 44.3 L626 44.1 L624 44.0 L622 44.1 L620 43.8 L618 43.8 L616 43.3 L614 43.3 L612 42.8 L610 42.7 L608 42.9 L606 42.5 L604 42.4 L602 42.0 L600 41.5Z" fill="#5E7FB8"/>
<path d="M650 41.5 L652 41.0 L654 40.6 L656 40.4 L658 40.0 L660 39.9 L662 39.8 L664 40.0 L666 39.9 L668 40.1 L670 40.3 L672 40.8 L674 41.1 L676 41.5-0.0j L676 41.5+0.0j L674 41.9 L672 42.2 L670 42.7 L668 42.9 L666 43.1 L664 43.0 L662 43.2 L660 43.1 L658 43.0 L656 42.6 L654 42.4 L652 42.0 L650 41.5Z" fill="#5E7FB8"/>
<path d="M697 41.5 L699 40.8 L701 40.2 L703 40.3 L705 40.6 L707 41.5 L707 41.5 L705 42.4 L703 42.7 L701 42.8 L699 42.2 L697 41.5Z" fill="#5E7FB8"/>
<path d="M720 41.5 L722 41.4 L724 41.4 L726 41.3 L728 41.3 L730 41.3 L732 41.3 L734 41.2 L736 41.3 L738 41.2 L740 41.3 L742 41.3 L744 41.2 L746 41.1 L748 41.2 L750 41.1 L752 41.1 L754 41.2 L756 41.2 L758 41.2 L760 41.1 L762 41.1 L764 41.1 L766 41.1 L768 41.2 L770 41.2 L772 41.2 L774 41.1 L776 41.2 L778 41.2 L780 41.3 L782 41.3 L784 41.3 L786 41.2 L788 41.3 L790 41.3 L792 41.3 L794 41.4 L796 41.4 L798 41.4 L800 41.5 L800 41.5 L798 41.6 L796 41.6 L794 41.6 L792 41.7 L790 41.7 L788 41.7 L786 41.8 L784 41.7 L782 41.7 L780 41.7 L778 41.8 L776 41.8 L774 41.9 L772 41.8 L770 41.8 L768 41.8 L766 41.9 L764 41.9 L762 41.9 L760 41.9 L758 41.8 L756 41.8 L754 41.8 L752 41.9 L750 41.9 L748 41.8 L746 41.9 L744 41.8 L742 41.7 L740 41.7 L738 41.8 L736 41.7 L734 41.8 L732 41.7 L730 41.7 L728 41.7 L726 41.7 L724 41.6 L722 41.6 L720 41.5Z" fill="#5E7FB8"/>
<path d="M800 41.5 L802 41.4 L804 41.2 L806 41.1 L808 41.2 L810 41.1 L812 40.9 L814 40.9 L816 41.0 L818 41.0 L820 41.0 L822 40.7 L824 41.0 L826 40.8 L828 41.0 L830 40.8 L832 40.6 L834 41.0 L836 40.7 L838 40.8 L840 40.7 L842 40.7 L844 40.9 L846 40.7 L848 40.9 L850 41.1 L852 41.1 L854 41.0 L856 41.0 L858 41.1 L860 41.2 L862 41.2 L864 41.2 L866 41.2 L868 41.4 L870 41.5 L870 41.5 L868 41.6 L866 41.8 L864 41.8 L862 41.8 L860 41.8 L858 41.9 L856 42.0 L854 42.0 L852 41.9 L850 41.9 L848 42.1 L846 42.3 L844 42.1 L842 42.3 L840 42.3 L838 42.2 L836 42.3 L834 42.0 L832 42.4 L830 42.2 L828 42.0 L826 42.2 L824 42.0 L822 42.3 L820 42.0 L818 42.0 L816 42.0 L814 42.1 L812 42.1 L810 41.9 L808 41.8 L806 41.9 L804 41.8 L802 41.6 L800 41.5Z" fill="#5E7FB8"/>
<path d="M908 41.5 L910 40.9 L912 40.1 L914 39.9 L916 39.4 L918 39.8 L920 39.6 L922 39.5 L924 38.6 L926 39.1 L928 39.4 L930 39.3 L932 39.5 L934 39.9 L936 39.9 L938 39.2 L940 40.0 L942 39.7 L944 40.5 L946 40.8 L948 41.5 L948 41.5 L946 42.2 L944 42.5 L942 43.3 L940 43.0 L938 43.8 L936 43.1 L934 43.1 L932 43.5 L930 43.7 L928 43.6 L926 43.9 L924 44.4 L922 43.5 L920 43.4 L918 43.2 L916 43.6 L914 43.1 L912 42.9 L910 42.1 L908 41.5Z" fill="#5E7FB8"/>
<path d="M948 41.5 L950 41.3 L952 41.1 L954 41.0 L956 40.9 L958 40.9 L960 40.7 L962 40.7 L964 40.8 L966 40.7 L968 41.0 L970 40.7 L972 40.8 L974 40.8 L976 40.8 L978 41.0 L980 41.1 L982 41.0 L984 41.2 L986 41.3 L988 41.5 L988 41.5 L986 41.7 L984 41.8 L982 42.0 L980 41.9 L978 42.0 L976 42.2 L974 42.2 L972 42.2 L970 42.3 L968 42.0 L966 42.3 L964 42.2 L962 42.3 L960 42.3 L958 42.1 L956 42.1 L954 42.0 L952 41.9 L950 41.7 L948 41.5Z" fill="#5E7FB8"/>
<path d="M988 41.5 L990 40.7 L992 40.1 L994 40.3 L996 39.7 L998 39.9 L1000 39.4 L1002 39.5 L1004 39.7 L1006 39.7 L1008 39.6 L1010 38.6 L1012 39.2 L1014 39.6 L1016 38.9 L1018 38.9 L1020 39.7 L1022 40.2 L1024 40.3 L1026 40.6 L1028 40.8 L1030 41.5 L1030 41.5 L1028 42.2 L1026 42.4 L1024 42.7 L1022 42.8 L1020 43.3 L1018 44.1 L1016 44.1 L1014 43.4 L1012 43.8 L1010 44.4 L1008 43.4 L1006 43.3 L1004 43.3 L1002 43.5 L1000 43.6 L998 43.1 L996 43.3 L994 42.7 L992 42.9 L990 42.3 L988 41.5Z" fill="#5E7FB8"/>
<path d="M1030 41.5 L1032 41.0 L1034 40.6 L1036 40.1 L1038 40.0 L1040 40.1 L1042 39.9 L1044 39.7 L1046 39.7 L1048 39.7 L1050 40.0 L1052 39.7 L1054 38.8 L1056 39.9 L1058 39.4 L1060 39.3 L1062 39.1 L1064 39.9 L1066 39.9 L1068 40.1 L1070 40.1 L1072 40.2 L1074 40.0 L1076 40.4 L1078 40.8 L1080 41.5 L1080 41.5 L1078 42.2 L1076 42.6 L1074 43.0 L1072 42.8 L1070 42.9 L1068 42.9 L1066 43.1 L1064 43.1 L1062 43.9 L1060 43.7 L1058 43.6 L1056 43.1 L1054 44.2 L1052 43.3 L1050 43.0 L1048 43.3 L1046 43.3 L1044 43.3 L1042 43.1 L1040 42.9 L1038 43.0 L1036 42.9 L1034 42.4 L1032 42.0 L1030 41.5Z" fill="#5E7FB8"/>
<path d="M1080 41.5 L1082 41.4 L1084 41.3 L1086 41.3 L1088 41.2 L1090 41.3 L1092 41.2 L1094 41.0 L1096 41.0 L1098 41.0 L1100 40.9 L1102 41.1 L1104 41.1 L1106 41.1 L1108 41.0 L1110 40.9 L1112 40.8 L1114 40.9 L1116 40.9 L1118 40.8 L1120 40.9 L1122 40.9 L1124 41.1 L1126 40.8 L1128 41.0 L1130 40.8 L1132 40.9 L1134 41.0 L1136 41.1 L1138 41.1 L1140 41.0 L1142 41.0 L1144 41.2 L1146 41.2 L1148 41.1 L1150 41.2 L1152 41.2 L1154 41.3 L1156 41.3 L1158 41.4 L1160 41.5 L1160 41.5 L1158 41.6 L1156 41.7 L1154 41.7 L1152 41.8 L1150 41.8 L1148 41.9 L1146 41.8 L1144 41.8 L1142 42.0 L1140 42.0 L1138 41.9 L1136 41.9 L1134 42.0 L1132 42.1 L1130 42.2 L1128 42.0 L1126 42.2 L1124 41.9 L1122 42.1 L1120 42.1 L1118 42.2 L1116 42.1 L1114 42.1 L1112 42.2 L1110 42.1 L1108 42.0 L1106 41.9 L1104 41.9 L1102 41.9 L1100 42.1 L1098 42.0 L1096 42.0 L1094 42.0 L1092 41.8 L1090 41.7 L1088 41.8 L1086 41.7 L1084 41.7 L1082 41.6 L1080 41.5Z" fill="#5E7FB8"/>
<path d="M1165 41.5 L1167 40.6 L1169 40.4 L1171 40.1 L1173 40.4 L1175 40.6 L1177 40.8 L1179 40.9 L1179 42.1 L1177 42.2 L1175 42.4 L1173 42.6 L1171 42.9 L1169 42.6 L1167 42.4 L1165 41.5Z" fill="#5E7FB8"/>
<path d="M1220 41.5 L1222 41.0 L1224 40.9 L1226 40.4 L1228 40.1 L1230 40.1 L1232 40.1 L1234 39.6 L1236 39.1 L1238 39.8 L1240 40.0 L1242 39.5 L1244 39.4 L1246 39.0 L1248 39.6 L1250 38.8 L1252 38.9 L1254 39.2 L1256 39.6 L1258 38.6 L1260 39.5 L1262 38.9 L1264 39.7 L1266 39.8 L1268 39.3 L1270 39.9 L1272 39.4 L1274 40.0 L1276 40.4 L1278 40.6 L1280 40.7 L1282 40.9 L1284 41.5 L1284 41.5 L1282 42.1 L1280 42.3 L1278 42.4 L1276 42.6 L1274 43.0 L1272 43.6 L1270 43.1 L1268 43.7 L1266 43.2 L1264 43.3 L1262 44.1 L1260 43.5 L1258 44.4 L1256 43.4 L1254 43.8 L1252 44.1 L1250 44.2 L1248 43.4 L1246 44.0 L1244 43.6 L1242 43.5 L1240 43.0 L1238 43.2 L1236 43.9 L1234 43.4 L1232 42.9 L1230 42.9 L1228 42.9 L1226 42.6 L1224 42.1 L1222 42.0 L1220 41.5Z" fill="#5E7FB8"/>
<path d="M1284 41.5 L1286 41.2 L1288 41.1 L1290 40.8 L1292 41.0 L1294 41.0 L1296 41.0 L1298 40.8 L1300 40.7 L1302 40.7 L1304 40.9 L1306 40.9 L1308 41.1 L1310 41.5-0.0j L1310 41.5+0.0j L1308 41.9 L1306 42.1 L1304 42.1 L1302 42.3 L1300 42.3 L1298 42.2 L1296 42.0 L1294 42.0 L1292 42.0 L1290 42.2 L1288 41.9 L1286 41.8 L1284 41.5Z" fill="#5E7FB8"/>
<rect x="485" y="49.0" width="872" height="1" fill="#B9AE3E" opacity="0.8"/>
<path d="M485 49.5 L487 48.9 L489 48.8 L491 49.0 L493 48.7 L495 48.8 L497 49.0 L499 49.2 L499 49.8 L497 50.0 L495 50.2 L493 50.3 L491 50.0 L489 50.2 L487 50.1 L485 49.5Z" fill="#B9AE3E"/>
<path d="M536 49.5 L538 49.3 L540 49.1 L542 48.9 L544 48.6 L546 48.9 L548 48.5 L550 48.9 L552 48.9 L554 48.8 L556 48.9 L558 49.2 L560 49.5 L560 49.5 L558 49.8 L556 50.1 L554 50.2 L552 50.1 L550 50.1 L548 50.5 L546 50.1 L544 50.4 L542 50.1 L540 49.9 L538 49.7 L536 49.5Z" fill="#B9AE3E"/>
<path d="M562 49.5 L564 49.3 L566 49.0 L568 49.1 L570 49.0 L572 48.7 L574 49.0 L576 48.8 L578 48.6 L580 48.6 L582 48.9 L584 49.0 L586 49.0 L588 48.6 L590 49.0 L592 48.8 L594 48.9 L596 49.1 L598 49.3 L600 49.5 L600 49.5 L598 49.7 L596 49.9 L594 50.1 L592 50.2 L590 50.0 L588 50.4 L586 50.0 L584 50.0 L582 50.1 L580 50.4 L578 50.4 L576 50.2 L574 50.0 L572 50.3 L570 50.0 L568 49.9 L566 50.0 L564 49.7 L562 49.5Z" fill="#B9AE3E"/>
<path d="M615 49.5 L617 49.1 L619 48.8 L621 48.9 L623 49.0 L625 49.2 L627 49.5 L627 49.5 L625 49.8 L623 50.0 L621 50.1 L619 50.2 L617 49.9 L615 49.5Z" fill="#B9AE3E"/>
<path d="M694 49.5 L696 48.9 L698 48.6 L700 49.0 L702 49.0 L704 49.5 L704 49.5 L702 50.0 L700 50.0 L698 50.4 L696 50.1 L694 49.5Z" fill="#B9AE3E"/>
<path d="M746 49.5 L748 48.9 L750 48.9 L752 48.9 L754 48.8 L756 48.8 L758 48.9 L760 49.5 L760 49.5 L758 50.1 L756 50.2 L754 50.2 L752 50.1 L750 50.1 L748 50.1 L746 49.5Z" fill="#B9AE3E"/>
<path d="M798 49.5 L800 49.0 L802 48.8 L804 48.7 L806 48.8 L808 49.1 L810 49.5 L810 49.5 L808 49.9 L806 50.2 L804 50.3 L802 50.2 L800 50.0 L798 49.5Z" fill="#B9AE3E"/>
<path d="M904 49.5 L906 49.1 L908 49.1 L910 49.0 L912 48.7 L914 48.8 L916 48.9 L918 49.0 L920 48.9 L922 49.1 L924 49.2 L924 49.8 L922 49.9 L920 50.1 L918 50.0 L916 50.1 L914 50.2 L912 50.3 L910 50.0 L908 49.9 L906 49.9 L904 49.5Z" fill="#B9AE3E"/>
<path d="M956 49.5 L958 49.2 L960 49.2 L962 49.2 L964 49.1 L966 48.9 L968 48.8 L970 48.8 L972 48.9 L974 48.8 L976 48.7 L978 48.7 L980 48.6 L982 48.6 L984 48.7 L986 49.0 L988 48.7 L990 49.0 L992 48.9 L994 49.1 L996 49.1 L998 49.3 L1000 49.5 L1000 49.5 L998 49.7 L996 49.9 L994 49.9 L992 50.1 L990 50.0 L988 50.3 L986 50.0 L984 50.3 L982 50.4 L980 50.4 L978 50.3 L976 50.3 L974 50.2 L972 50.1 L970 50.2 L968 50.2 L966 50.1 L964 49.9 L962 49.8 L960 49.8 L958 49.8 L956 49.5Z" fill="#B9AE3E"/>
<path d="M1000 49.5 L1002 49.3 L1004 49.1 L1006 49.1 L1008 49.1 L1010 49.0 L1012 48.8 L1014 48.9 L1016 49.0 L1018 48.7 L1020 48.8 L1022 48.6 L1024 49.0 L1026 48.8 L1028 48.7 L1030 48.8 L1032 48.8 L1034 49.1 L1036 49.1 L1038 49.2 L1040 49.2 L1042 49.2 L1044 49.4 L1044 49.6 L1042 49.8 L1040 49.8 L1038 49.8 L1036 49.9 L1034 49.9 L1032 50.2 L1030 50.2 L1028 50.3 L1026 50.2 L1024 50.0 L1022 50.4 L1020 50.2 L1018 50.3 L1016 50.0 L1014 50.1 L1012 50.2 L1010 50.0 L1008 49.9 L1006 49.9 L1004 49.9 L1002 49.7 L1000 49.5Z" fill="#B9AE3E"/>
<path d="M1088 49.5 L1090 49.0 L1092 48.6 L1094 48.8 L1096 48.9 L1098 48.9 L1100 49.5 L1100 49.5 L1098 50.1 L1096 50.1 L1094 50.2 L1092 50.4 L1090 50.0 L1088 49.5Z" fill="#B9AE3E"/>
<path d="M1112 49.5 L1114 49.0 L1116 48.8 L1118 48.9 L1120 48.9 L1122 49.1 L1124 49.5 L1124 49.5 L1122 49.9 L1120 50.1 L1118 50.1 L1116 50.2 L1114 50.0 L1112 49.5Z" fill="#B9AE3E"/>
<path d="M1164 49.5 L1166 49.0 L1168 48.8 L1170 48.9 L1172 49.1 L1174 49.1 L1176 49.5 L1176 49.5 L1174 49.9 L1172 49.9 L1170 50.1 L1168 50.2 L1166 50.0 L1164 49.5Z" fill="#B9AE3E"/>
<path d="M1218 49.5 L1220 49.2 L1222 49.1 L1224 48.8 L1226 48.8 L1228 49.0 L1230 48.9 L1232 48.8 L1234 48.7 L1236 48.7 L1238 49.0 L1240 49.1 L1242 49.1 L1244 49.3 L1244 49.7 L1242 49.9 L1240 49.9 L1238 50.0 L1236 50.3 L1234 50.3 L1232 50.2 L1230 50.1 L1228 50.0 L1226 50.2 L1224 50.2 L1222 49.9 L1220 49.8 L1218 49.5Z" fill="#B9AE3E"/>
<rect x="485" y="57.3" width="872" height="1" fill="#B9AE3E" opacity="0.8"/>
<path d="M485 57.8 L487 57.4 L489 57.0 L491 57.1 L493 57.0 L495 57.2 L497 57.3 L499 57.4 L499 58.2 L497 58.3 L495 58.4 L493 58.6 L491 58.5 L489 58.6 L487 58.2 L485 57.8Z" fill="#B9AE3E"/>
<path d="M536 57.8 L538 57.5 L540 57.4 L542 57.1 L544 57.2 L546 57.3 L548 56.9 L550 57.1 L552 57.0 L554 57.2 L556 57.2 L558 57.5 L560 57.8 L560 57.8 L558 58.1 L556 58.4 L554 58.4 L552 58.6 L550 58.5 L548 58.7 L546 58.3 L544 58.4 L542 58.5 L540 58.2 L538 58.1 L536 57.8Z" fill="#B9AE3E"/>
<path d="M562 57.8 L564 57.5 L566 57.4 L568 57.2 L570 57.4 L572 57.1 L574 57.2 L576 57.1 L578 57.2 L580 57.1 L582 57.0 L584 56.9 L586 57.2 L588 57.1 L590 57.0 L592 57.1 L594 57.4 L596 57.5 L598 57.5 L600 57.8 L600 57.8 L598 58.1 L596 58.1 L594 58.2 L592 58.5 L590 58.6 L588 58.5 L586 58.4 L584 58.7 L582 58.6 L580 58.5 L578 58.4 L576 58.5 L574 58.4 L572 58.5 L570 58.2 L568 58.4 L566 58.2 L564 58.1 L562 57.8Z" fill="#B9AE3E"/>
<path d="M615 57.8 L617 57.5 L619 57.0 L621 57.2 L623 57.0 L625 57.3 L627 57.8 L627 57.8 L625 58.3 L623 58.6 L621 58.4 L619 58.6 L617 58.1 L615 57.8Z" fill="#B9AE3E"/>
<path d="M694 57.8 L696 57.1 L698 57.2 L700 57.1 L702 57.1 L704 57.8 L704 57.8 L702 58.5 L700 58.5 L698 58.4 L696 58.5 L694 57.8Z" fill="#B9AE3E"/>
<path d="M746 57.8 L748 57.4 L750 57.2 L752 57.0 L754 57.1 L756 57.3 L758 57.4 L760 57.8 L760 57.8 L758 58.2 L756 58.3 L754 58.5 L752 58.6 L750 58.4 L748 58.2 L746 57.8Z" fill="#B9AE3E"/>
<path d="M798 57.8 L800 57.5 L802 57.2 L804 57.0 L806 57.3 L808 57.3 L810 57.8 L810 57.8 L808 58.3 L806 58.3 L804 58.6 L802 58.4 L800 58.1 L798 57.8Z" fill="#B9AE3E"/>
<path d="M904 57.8 L906 57.4 L908 57.2 L910 57.2 L912 57.1 L914 57.0 L916 57.1 L918 57.0 L920 57.2 L922 57.4 L924 57.6 L924 58.0 L922 58.2 L920 58.4 L918 58.6 L916 58.5 L914 58.6 L912 58.5 L910 58.4 L908 58.4 L906 58.2 L904 57.8Z" fill="#B9AE3E"/>
<path d="M956 57.8 L958 57.6 L960 57.5 L962 57.3 L964 57.2 L966 57.2 L968 57.3 L970 57.1 L972 57.2 L974 57.2 L976 57.1 L978 57.2 L980 57.1 L982 57.0 L984 57.3 L986 57.1 L988 57.3 L990 57.1 L992 57.2 L994 57.3 L996 57.5 L998 57.6 L1000 57.8 L1000 57.8 L998 58.0 L996 58.1 L994 58.3 L992 58.4 L990 58.5 L988 58.3 L986 58.5 L984 58.3 L982 58.6 L980 58.5 L978 58.4 L976 58.5 L974 58.4 L972 58.4 L970 58.5 L968 58.3 L966 58.4 L964 58.4 L962 58.3 L960 58.1 L958 58.0 L956 57.8Z" fill="#B9AE3E"/>
<path d="M1000 57.8 L1002 57.6 L1004 57.4 L1006 57.3 L1008 57.3 L1010 57.2 L1012 57.3 L1014 57.0 L1016 57.2 L1018 57.0 L1020 57.0 L1022 57.3 L1024 57.0 L1026 57.0 L1028 57.3 L1030 57.2 L1032 57.1 L1034 57.4 L1036 57.2 L1038 57.4 L1040 57.4 L1042 57.6 L1044 57.7 L1044 57.9 L1042 58.0 L1040 58.2 L1038 58.2 L1036 58.4 L1034 58.2 L1032 58.5 L1030 58.4 L1028 58.3 L1026 58.6 L1024 58.6 L1022 58.3 L1020 58.6 L1018 58.6 L1016 58.4 L1014 58.6 L1012 58.3 L1010 58.4 L1008 58.3 L1006 58.3 L1004 58.2 L1002 58.0 L1000 57.8Z" fill="#B9AE3E"/>
<path d="M1088 57.8 L1090 57.4 L1092 57.2 L1094 57.0 L1096 57.2 L1098 57.4 L1100 57.8 L1100 57.8 L1098 58.2 L1096 58.4 L1094 58.6 L1092 58.4 L1090 58.2 L1088 57.8Z" fill="#B9AE3E"/>
<path d="M1112 57.8 L1114 57.2 L1116 57.1 L1118 57.0 L1120 57.3 L1122 57.3 L1124 57.8 L1124 57.8 L1122 58.3 L1120 58.3 L1118 58.6 L1116 58.5 L1114 58.4 L1112 57.8Z" fill="#B9AE3E"/>
<path d="M1164 57.8 L1166 57.3 L1168 57.2 L1170 57.0 L1172 57.2 L1174 57.3 L1176 57.8 L1176 57.8 L1174 58.3 L1172 58.4 L1170 58.6 L1168 58.4 L1166 58.3 L1164 57.8Z" fill="#B9AE3E"/>
<path d="M1218 57.8 L1220 57.4 L1222 57.3 L1224 57.2 L1226 57.0 L1228 57.2 L1230 56.8 L1232 57.0 L1234 57.1 L1236 57.0 L1238 57.2 L1240 57.4 L1242 57.3 L1244 57.6 L1244 58.0 L1242 58.3 L1240 58.2 L1238 58.4 L1236 58.6 L1234 58.5 L1232 58.6 L1230 58.8 L1228 58.4 L1226 58.6 L1224 58.4 L1222 58.3 L1220 58.2 L1218 57.8Z" fill="#B9AE3E"/>
<rect x="485" y="66.0" width="872" height="1" fill="#A9557A" opacity="0.8"/>
<path d="M485 66.5 L487 66.1 L489 65.7 L491 65.4 L493 65.6 L495 65.5 L497 65.8 L499 66.1 L501 66.3 L501 66.7 L499 66.9 L497 67.2 L495 67.5 L493 67.4 L491 67.6 L489 67.3 L487 66.9 L485 66.5Z" fill="#A9557A"/>
<path d="M536 66.5 L538 66.1 L540 65.9 L542 65.8 L544 65.5 L546 65.8 L548 65.7 L550 65.5 L552 65.9 L554 66.0 L556 66.0 L558 66.2 L560 66.5 L560 66.5 L558 66.8 L556 67.0 L554 67.0 L552 67.1 L550 67.5 L548 67.3 L546 67.2 L544 67.5 L542 67.2 L540 67.1 L538 66.9 L536 66.5Z" fill="#A9557A"/>
<path d="M562 66.5 L564 66.1 L566 66.0 L568 66.0 L570 65.7 L572 65.7 L574 65.8 L576 65.3 L578 65.7 L580 65.7 L582 65.7 L584 65.4 L586 65.3 L588 65.4 L590 65.7 L592 65.9 L594 66.0 L596 65.9 L598 66.1 L600 66.5 L600 66.5 L598 66.9 L596 67.1 L594 67.0 L592 67.1 L590 67.3 L588 67.6 L586 67.7 L584 67.6 L582 67.3 L580 67.3 L578 67.3 L576 67.7 L574 67.2 L572 67.3 L570 67.3 L568 67.0 L566 67.0 L564 66.9 L562 66.5Z" fill="#A9557A"/>
<path d="M604 66.5 L606 66.2 L608 65.9 L610 65.8 L612 65.9 L614 65.5 L616 65.9 L618 65.7 L620 65.8 L622 65.9 L624 66.0 L626 65.9 L628 66.3 L630 66.5-0.0j L630 66.5+0.0j L628 66.7 L626 67.1 L624 67.0 L622 67.1 L620 67.2 L618 67.3 L616 67.1 L614 67.5 L612 67.1 L610 67.2 L608 67.1 L606 66.8 L604 66.5Z" fill="#A9557A"/>
<path d="M694 66.5 L696 66.0 L698 65.8 L700 65.6 L702 65.8 L704 66.5 L704 66.5 L702 67.2 L700 67.4 L698 67.2 L696 67.0 L694 66.5Z" fill="#A9557A"/>
<path d="M746 66.5 L748 66.1 L750 65.8 L752 65.7 L754 65.8 L756 65.5 L758 65.9 L760 66.5 L760 66.5 L758 67.1 L756 67.5 L754 67.2 L752 67.3 L750 67.2 L748 66.9 L746 66.5Z" fill="#A9557A"/>
<path d="M798 66.5 L800 65.9 L802 65.7 L804 65.7 L806 65.6 L808 65.8 L810 66.1 L812 66.5 L812 66.5 L810 66.9 L808 67.2 L806 67.4 L804 67.3 L802 67.3 L800 67.1 L798 66.5Z" fill="#A9557A"/>
<path d="M904 66.5 L906 66.2 L908 66.0 L910 65.7 L912 65.6 L914 65.5 L916 65.5 L918 65.7 L920 65.6 L922 65.7 L924 65.7 L926 65.9 L928 66.2 L930 66.5-0.0j L930 66.5+0.0j L928 66.8 L926 67.1 L924 67.3 L922 67.3 L920 67.4 L918 67.3 L916 67.5 L914 67.5 L912 67.4 L910 67.3 L908 67.0 L906 66.8 L904 66.5Z" fill="#A9557A"/>
<path d="M956 66.5 L958 66.2 L960 65.9 L962 66.1 L964 65.9 L966 65.8 L968 65.5 L970 65.4 L972 65.4 L974 65.6 L976 65.3 L978 65.6 L980 65.7 L982 65.3 L984 65.5 L986 65.5 L988 65.6 L990 65.5 L992 65.8 L994 65.8 L996 66.0 L998 66.1 L1000 66.5 L1000 66.5 L998 66.9 L996 67.0 L994 67.2 L992 67.2 L990 67.5 L988 67.4 L986 67.5 L984 67.5 L982 67.7 L980 67.3 L978 67.4 L976 67.7 L974 67.4 L972 67.6 L970 67.6 L968 67.5 L966 67.2 L964 67.1 L962 66.9 L960 67.1 L958 66.8 L956 66.5Z" fill="#A9557A"/>
<path d="M1000 66.5 L1002 66.2 L1004 66.2 L1006 66.1 L1008 65.9 L1010 66.0 L1012 65.7 L1014 65.9 L1016 66.0 L1018 65.9 L1020 65.5 L1022 65.8 L1024 65.9 L1026 65.9 L1028 65.9 L1030 65.7 L1032 65.7 L1034 65.8 L1036 65.8 L1038 66.1 L1040 66.1 L1042 66.2 L1044 66.3 L1044 66.7 L1042 66.8 L1040 66.9 L1038 66.9 L1036 67.2 L1034 67.2 L1032 67.3 L1030 67.3 L1028 67.1 L1026 67.1 L1024 67.1 L1022 67.2 L1020 67.5 L1018 67.1 L1016 67.0 L1014 67.1 L1012 67.3 L1010 67.0 L1008 67.1 L1006 66.9 L1004 66.8 L1002 66.8 L1000 66.5Z" fill="#A9557A"/>
<path d="M1088 66.5 L1090 65.8 L1092 65.9 L1094 65.4 L1096 65.5 L1098 65.7 L1100 66.5 L1100 66.5 L1098 67.3 L1096 67.5 L1094 67.6 L1092 67.1 L1090 67.2 L1088 66.5Z" fill="#A9557A"/>
<path d="M1112 66.5 L1114 66.1 L1116 66.0 L1118 65.5 L1120 65.6 L1122 65.9 L1124 66.5 L1124 66.5 L1122 67.1 L1120 67.4 L1118 67.5 L1116 67.0 L1114 66.9 L1112 66.5Z" fill="#A9557A"/>
<path d="M1164 66.5 L1166 66.1 L1168 66.0 L1170 65.9 L1172 65.6 L1174 65.9 L1176 65.9 L1178 66.1 L1180 66.5 L1180 66.5 L1178 66.9 L1176 67.1 L1174 67.1 L1172 67.4 L1170 67.1 L1168 67.0 L1166 66.9 L1164 66.5Z" fill="#A9557A"/>
<path d="M1218 66.5 L1220 66.2 L1222 65.9 L1224 65.9 L1226 65.8 L1228 65.4 L1230 65.6 L1232 65.4 L1234 65.6 L1236 65.9 L1238 65.8 L1240 65.9 L1242 65.9 L1244 66.3 L1244 66.7 L1242 67.1 L1240 67.1 L1238 67.2 L1236 67.1 L1234 67.4 L1232 67.6 L1230 67.4 L1228 67.6 L1226 67.2 L1224 67.1 L1222 67.1 L1220 66.8 L1218 66.5Z" fill="#A9557A"/>
<rect x="485" y="74.5" width="872" height="1" fill="#A9557A" opacity="0.8"/>
<path d="M485 75.0 L487 74.5 L489 74.4 L491 74.0 L493 74.3 L495 73.9 L497 74.4 L499 74.6 L501 74.7 L501 75.3 L499 75.4 L497 75.6 L495 76.1 L493 75.7 L491 76.0 L489 75.6 L487 75.5 L485 75.0Z" fill="#A9557A"/>
<path d="M536 75.0 L538 74.5 L540 74.6 L542 74.3 L544 74.2 L546 74.0 L548 74.3 L550 74.1 L552 74.2 L554 74.1 L556 74.5 L558 74.5 L560 75.0 L560 75.0 L558 75.5 L556 75.5 L554 75.9 L552 75.8 L550 75.9 L548 75.7 L546 76.0 L544 75.8 L542 75.7 L540 75.4 L538 75.5 L536 75.0Z" fill="#A9557A"/>
<path d="M562 75.0 L564 74.6 L566 74.5 L568 74.5 L570 74.2 L572 74.4 L574 73.9 L576 73.9 L578 73.8 L580 73.9 L582 74.1 L584 74.1 L586 74.1 L588 73.9 L590 74.4 L592 74.1 L594 74.5 L596 74.6 L598 74.7 L600 75.0 L600 75.0 L598 75.3 L596 75.4 L594 75.5 L592 75.9 L590 75.6 L588 76.1 L586 75.9 L584 75.9 L582 75.9 L580 76.1 L578 76.2 L576 76.1 L574 76.1 L572 75.6 L570 75.8 L568 75.5 L566 75.5 L564 75.4 L562 75.0Z" fill="#A9557A"/>
<path d="M604 75.0 L606 74.7 L608 74.4 L610 74.5 L612 74.3 L614 74.2 L616 74.1 L618 74.1 L620 74.2 L622 74.3 L624 74.4 L626 74.6 L628 74.6 L630 75.0-0.0j L630 75.0+0.0j L628 75.4 L626 75.4 L624 75.6 L622 75.7 L620 75.8 L618 75.9 L616 75.9 L614 75.8 L612 75.7 L610 75.5 L608 75.6 L606 75.3 L604 75.0Z" fill="#A9557A"/>
<path d="M694 75.0 L696 74.5 L698 74.2 L700 74.0 L702 74.3 L704 75.0 L704 75.0 L702 75.7 L700 76.0 L698 75.8 L696 75.5 L694 75.0Z" fill="#A9557A"/>
<path d="M746 75.0 L748 74.3 L750 74.3 L752 74.3 L754 74.2 L756 74.1 L758 74.3 L760 75.0 L760 75.0 L758 75.7 L756 75.9 L754 75.8 L752 75.7 L750 75.7 L748 75.7 L746 75.0Z" fill="#A9557A"/>
<path d="M798 75.0 L800 74.6 L802 74.4 L804 74.2 L806 74.4 L808 74.4 L810 74.6 L812 75.0 L812 75.0 L810 75.4 L808 75.6 L806 75.6 L804 75.8 L802 75.6 L800 75.4 L798 75.0Z" fill="#A9557A"/>
<path d="M904 75.0 L906 74.7 L908 74.3 L910 74.5 L912 74.2 L914 73.9 L916 73.9 L918 74.0 L920 74.2 L922 74.3 L924 74.2 L926 74.6 L928 74.7 L930 75.0-0.0j L930 75.0+0.0j L928 75.3 L926 75.4 L924 75.8 L922 75.7 L920 75.8 L918 76.0 L916 76.1 L914 76.1 L912 75.8 L910 75.5 L908 75.7 L906 75.3 L904 75.0Z" fill="#A9557A"/>
<path d="M956 75.0 L958 74.7 L960 74.4 L962 74.3 L964 74.3 L966 74.2 L968 74.2 L970 74.3 L972 74.0 L974 74.1 L976 73.9 L978 73.8 L980 74.0 L982 74.0 L984 73.9 L986 74.1 L988 74.3 L990 74.1 L992 74.1 L994 74.3 L996 74.5 L998 74.6 L1000 75.0 L1000 75.0 L998 75.4 L996 75.5 L994 75.7 L992 75.9 L990 75.9 L988 75.7 L986 75.9 L984 76.1 L982 76.0 L980 76.0 L978 76.2 L976 76.1 L974 75.9 L972 76.0 L970 75.7 L968 75.8 L966 75.8 L964 75.7 L962 75.7 L960 75.6 L958 75.3 L956 75.0Z" fill="#A9557A"/>
<path d="M1000 75.0 L1002 74.8 L1004 74.7 L1006 74.5 L1008 74.6 L1010 74.4 L1012 74.2 L1014 74.2 L1016 74.2 L1018 74.3 L1020 74.2 L1022 74.2 L1024 74.1 L1026 74.3 L1028 74.2 L1030 74.1 L1032 74.4 L1034 74.3 L1036 74.3 L1038 74.5 L1040 74.6 L1042 74.6 L1044 74.9 L1044 75.1 L1042 75.4 L1040 75.4 L1038 75.5 L1036 75.7 L1034 75.7 L1032 75.6 L1030 75.9 L1028 75.8 L1026 75.7 L1024 75.9 L1022 75.8 L1020 75.8 L1018 75.7 L1016 75.8 L1014 75.8 L1012 75.8 L1010 75.6 L1008 75.4 L1006 75.5 L1004 75.3 L1002 75.2 L1000 75.0Z" fill="#A9557A"/>
<path d="M1088 75.0 L1090 74.5 L1092 74.0 L1094 73.9 L1096 74.2 L1098 74.5 L1100 75.0 L1100 75.0 L1098 75.5 L1096 75.8 L1094 76.1 L1092 76.0 L1090 75.5 L1088 75.0Z" fill="#A9557A"/>
<path d="M1112 75.0 L1114 74.4 L1116 74.3 L1118 74.1 L1120 74.1 L1122 74.5 L1124 75.0 L1124 75.0 L1122 75.5 L1120 75.9 L1118 75.9 L1116 75.7 L1114 75.6 L1112 75.0Z" fill="#A9557A"/>
<path d="M1164 75.0 L1166 74.6 L1168 74.3 L1170 74.3 L1172 74.1 L1174 74.4 L1176 74.2 L1178 74.6 L1180 75.0 L1180 75.0 L1178 75.4 L1176 75.8 L1174 75.6 L1172 75.9 L1170 75.7 L1168 75.7 L1166 75.4 L1164 75.0Z" fill="#A9557A"/>
<path d="M1218 75.0 L1220 74.6 L1222 74.6 L1224 74.3 L1226 74.2 L1228 74.0 L1230 74.2 L1232 74.2 L1234 74.3 L1236 74.1 L1238 74.1 L1240 74.4 L1242 74.6 L1244 74.7 L1244 75.3 L1242 75.4 L1240 75.6 L1238 75.9 L1236 75.9 L1234 75.7 L1232 75.8 L1230 75.8 L1228 76.0 L1226 75.8 L1224 75.7 L1222 75.4 L1220 75.4 L1218 75.0Z" fill="#A9557A"/>
<rect x="724" y="30" width="1.3" height="53" fill="#77787B"/>
<rect x="480" y="750" width="880" height="48" fill="#39393C"/>
<rect x="484" y="753" width="874" height="12" fill="#333336"/>
<rect x="530" y="753" width="1" height="12" fill="#444447"/>
<path d="M489 760.5h5M491.5 758v5" stroke="#A5A5A7" stroke-width="1.4"/><path d="M503 760.5h5" stroke="#A5A5A7" stroke-width="1.4"/><path d="M521.5 757.5l-3 3l3 3z" fill="#A5A5A7"/>
<g transform="translate(76,0)"><path d="M1225 757.5l3 3l-3 3z" fill="#A5A5A7"/><path d="M1238 760.5h5M1240.500 758v5" stroke="#A5A5A7" stroke-width="1.4"/><path d="M1256 760.5h5" stroke="#A5A5A7" stroke-width="1.4"/><path d="M1271 758l-2.500 2.500l2.500 2.500zM1273 758l2.500 2.500l-2.500 2.500z" fill="#A5A5A7"/></g>
<circle cx="497" cy="783" r="5.2" fill="none" stroke="#98989A" stroke-width="1.5"/><circle cx="500" cy="786" r="2.3" fill="#98989A"/>
<circle cx="517" cy="783" r="5.2" fill="none" stroke="#98989A" stroke-width="1.3"/><circle cx="517" cy="783" r="3" fill="#77777A"/>
<rect x="533" y="779" width="1.8" height="8.500" fill="#B5B5B7"/><path d="M541.500 779l-6 4.200l6 4.200z" fill="#B5B5B7"/>
<path d="M553 779l6 4.200l-6 4.200z" fill="#B5B5B7"/><rect x="559.500" y="779" width="1.8" height="8.500" fill="#B5B5B7"/>
<rect x="572" y="778" width="10.500" height="10.500" fill="#A8A8AA"/>
<path d="M593.500 777.500l9 5.700l-9 5.700z" fill="#B5B5B7"/>
<text x="617" y="784" font-size="8.5" fill="#9D9DA0" text-anchor="start" font-weight="normal" >Rate: 1,00</text>
<rect x="685" y="781.800" width="117" height="2.200" rx="1" fill="#7A7A7D"/>
<rect x="745.500" y="777" width="15" height="11" rx="1" fill="#A5A5A7"/><path d="M751.500 779.500v6M754.500 779.500v6" stroke="#555558" stroke-width="1.2"/>
<path d="M750 793l3.500 -4l3.500 4z" fill="#C9C9CB"/>
<rect x="1103" y="776" width="62" height="15" fill="#333336"/>
<text x="1161" y="787.3" font-size="8.5" fill="#9D9DA0" text-anchor="end" font-weight="normal" >00:00:07,720</text>
<rect x="1167.5" y="776" width="60" height="15" fill="#333336"/>
<rect x="1231" y="776" width="62" height="15" fill="#333336"/>
<text x="1289" y="787.3" font-size="8.5" fill="#9D9DA0" text-anchor="end" font-weight="normal" >00:00:15,601</text>
<rect x="1296" y="776" width="60" height="15" fill="#333336"/>
<text x="1352" y="787.3" font-size="8.5" fill="#9D9DA0" text-anchor="end" font-weight="normal" >1:717</text>
<rect x="484" y="798" width="87" height="15" fill="#39393C"/>
<text x="491" y="809.5" font-size="8.5" fill="#BDBDBF" text-anchor="start" font-weight="bold" font-style="italic">final.wav *</text>
<rect x="548" y="803" width="6" height="6" fill="none" stroke="#BDBDBF" stroke-width="1.100"/><path d="M549.500 803v-1.500h6v6h-1.500" fill="none" stroke="#BDBDBF" stroke-width="1"/>
<path d="M560 802.500l7 7M567 802.500l-7 7" stroke="#D0D0D2" stroke-width="1.800"/>
<rect x="1357" y="28" width="243" height="769" fill="#2A2A2D"/>
<rect x="1359.500" y="31" width="241" height="764" fill="#353639"/>
<rect x="1367.8" y="35.500" width="73.40000000000009" height="745" fill="#303134"/>
<rect x="1367.8" y="54" width="73.40000000000009" height="736" fill="#15161A"/>
<rect x="1369.8" y="36" width="16.500" height="14" fill="#47638F"/>
<text x="1380.8" y="47" font-size="8.5" fill="#B9C4D4" text-anchor="middle" font-weight="normal" >1</text>
<rect x="1394.8" y="36" width="16.500" height="14" fill="#47638F"/>
<text x="1405.8" y="47" font-size="8.5" fill="#B9C4D4" text-anchor="middle" font-weight="normal" >2</text>
<text x="1386.8" y="69.5" font-size="11.5" fill="#B4B4B7" text-anchor="end" font-weight="bold" >-0</text>
<text x="1387.3" y="70.5" font-size="8" fill="#77777A" text-anchor="start" font-weight="normal" font-style="italic">6</text>
<text x="1389.8" y="83.5" font-size="11.5" fill="#B4B4B7" text-anchor="end" font-weight="bold" >-13</text>
<text x="1390.3" y="84.5" font-size="8" fill="#77777A" text-anchor="start" font-weight="normal" font-style="italic">9</text>
<text x="1424.3" y="69.5" font-size="11.5" fill="#B4B4B7" text-anchor="end" font-weight="bold" >-0</text>
<text x="1424.8" y="70.5" font-size="8" fill="#77777A" text-anchor="start" font-weight="normal" font-style="italic">7</text>
<text x="1427.3" y="83.5" font-size="11.5" fill="#B4B4B7" text-anchor="end" font-weight="bold" >-12</text>
<text x="1427.8" y="84.5" font-size="8" fill="#77777A" text-anchor="start" font-weight="normal" font-style="italic">7</text>
<rect x="1376.7" y="90" width="1.200" height="129" fill="#8C2F44"/><rect x="1433.1000000000001" y="90" width="1.200" height="129" fill="#8C2F44"/>
<rect x="1377.3" y="89.500" width="56.40000000000009" height="1" fill="#4a4a4d"/>
<rect x="1376.7" y="219" width="1.200" height="129" fill="#A8921E"/><rect x="1433.1000000000001" y="219" width="1.200" height="129" fill="#A8921E"/>
<rect x="1377.3" y="90.0" width="4" height="1" fill="#444448" opacity="0.8"/><rect x="1429.7" y="90.0" width="4" height="1" fill="#4E4E52" opacity="0.8"/>
<rect x="1377.3" y="104.3" width="4" height="1" fill="#444448" opacity="0.8"/><rect x="1429.7" y="104.3" width="4" height="1" fill="#4E4E52" opacity="0.8"/>
<rect x="1377.3" y="118.6" width="4" height="1" fill="#444448" opacity="0.8"/><rect x="1429.7" y="118.6" width="4" height="1" fill="#4E4E52" opacity="0.8"/>
<rect x="1377.3" y="132.9" width="4" height="1" fill="#444448" opacity="0.8"/><rect x="1429.7" y="132.9" width="4" height="1" fill="#4E4E52" opacity="0.8"/>
<rect x="1377.3" y="147.2" width="4" height="1" fill="#444448" opacity="0.8"/><rect x="1429.7" y="147.2" width="4" height="1" fill="#4E4E52" opacity="0.8"/>
<rect x="1377.3" y="161.5" width="4" height="1" fill="#444448" opacity="0.8"/><rect x="1429.7" y="161.5" width="4" height="1" fill="#4E4E52" opacity="0.8"/>
<rect x="1377.3" y="175.8" width="4" height="1" fill="#444448" opacity="0.8"/><rect x="1429.7" y="175.8" width="4" height="1" fill="#4E4E52" opacity="0.8"/>
<rect x="1377.3" y="190.1" width="4" height="1" fill="#444448" opacity="0.8"/><rect x="1429.7" y="190.1" width="4" height="1" fill="#4E4E52" opacity="0.8"/>
<rect x="1377.3" y="204.4" width="4" height="1" fill="#444448" opacity="0.8"/><rect x="1429.7" y="204.4" width="4" height="1" fill="#4E4E52" opacity="0.8"/>
<rect x="1377.3" y="218.7" width="4" height="1" fill="#444448" opacity="0.8"/><rect x="1429.7" y="218.7" width="4" height="1" fill="#4E4E52" opacity="0.8"/>
<rect x="1377.3" y="233.0" width="4" height="1" fill="#444448" opacity="0.8"/><rect x="1429.7" y="233.0" width="4" height="1" fill="#4E4E52" opacity="0.8"/>
<rect x="1377.3" y="247.3" width="4" height="1" fill="#444448" opacity="0.8"/><rect x="1429.7" y="247.3" width="4" height="1" fill="#4E4E52" opacity="0.8"/>
<rect x="1377.3" y="261.6" width="4" height="1" fill="#444448" opacity="0.8"/><rect x="1429.7" y="261.6" width="4" height="1" fill="#4E4E52" opacity="0.8"/>
<rect x="1377.3" y="275.9" width="4" height="1" fill="#444448" opacity="0.8"/><rect x="1429.7" y="275.9" width="4" height="1" fill="#4E4E52" opacity="0.8"/>
<rect x="1377.3" y="290.2" width="4" height="1" fill="#444448" opacity="0.8"/><rect x="1429.7" y="290.2" width="4" height="1" fill="#4E4E52" opacity="0.8"/>
<rect x="1377.3" y="304.5" width="4" height="1" fill="#444448" opacity="0.8"/><rect x="1429.7" y="304.5" width="4" height="1" fill="#4E4E52" opacity="0.8"/>
<rect x="1377.3" y="318.8" width="4" height="1" fill="#444448" opacity="0.8"/><rect x="1429.7" y="318.8" width="4" height="1" fill="#4E4E52" opacity="0.8"/>
<rect x="1377.3" y="333.1" width="4" height="1" fill="#444448" opacity="0.8"/><rect x="1429.7" y="333.1" width="4" height="1" fill="#4E4E52" opacity="0.8"/>
<rect x="1377.3" y="347.4" width="4" height="1" fill="#444448" opacity="0.8"/><rect x="1429.7" y="347.4" width="4" height="1" fill="#4E4E52" opacity="0.8"/>
<rect x="1377.3" y="361.7" width="4" height="1" fill="#444448" opacity="0.8"/><rect x="1429.7" y="361.7" width="4" height="1" fill="#4E4E52" opacity="0.8"/>
<rect x="1377.3" y="376.0" width="4" height="1" fill="#444448" opacity="0.8"/><rect x="1429.7" y="376.0" width="4" height="1" fill="#4E4E52" opacity="0.8"/>
<rect x="1377.3" y="390.3" width="4" height="1" fill="#444448" opacity="0.8"/><rect x="1429.7" y="390.3" width="4" height="1" fill="#4E4E52" opacity="0.8"/>
<rect x="1377.3" y="404.6" width="4" height="1" fill="#444448" opacity="0.8"/><rect x="1429.7" y="404.6" width="4" height="1" fill="#4E4E52" opacity="0.8"/>
<rect x="1377.3" y="418.9" width="4" height="1" fill="#444448" opacity="0.8"/><rect x="1429.7" y="418.9" width="4" height="1" fill="#4E4E52" opacity="0.8"/>
<rect x="1377.3" y="433.2" width="4" height="1" fill="#444448" opacity="0.8"/><rect x="1429.7" y="433.2" width="4" height="1" fill="#4E4E52" opacity="0.8"/>
<rect x="1377.3" y="447.5" width="4" height="1" fill="#444448" opacity="0.8"/><rect x="1429.7" y="447.5" width="4" height="1" fill="#4E4E52" opacity="0.8"/>
<rect x="1377.3" y="461.8" width="4" height="1" fill="#444448" opacity="0.8"/><rect x="1429.7" y="461.8" width="4" height="1" fill="#4E4E52" opacity="0.8"/>
<rect x="1377.3" y="476.1" width="4" height="1" fill="#444448" opacity="0.8"/><rect x="1429.7" y="476.1" width="4" height="1" fill="#4E4E52" opacity="0.8"/>
<rect x="1377.3" y="490.4" width="4" height="1" fill="#444448" opacity="0.8"/><rect x="1429.7" y="490.4" width="4" height="1" fill="#4E4E52" opacity="0.8"/>
<rect x="1377.3" y="504.7" width="4" height="1" fill="#444448" opacity="0.8"/><rect x="1429.7" y="504.7" width="4" height="1" fill="#4E4E52" opacity="0.8"/>
<rect x="1377.3" y="519.0" width="4" height="1" fill="#444448" opacity="0.8"/><rect x="1429.7" y="519.0" width="4" height="1" fill="#4E4E52" opacity="0.8"/>
<rect x="1377.3" y="533.3" width="4" height="1" fill="#444448" opacity="0.8"/><rect x="1429.7" y="533.3" width="4" height="1" fill="#4E4E52" opacity="0.8"/>
<rect x="1377.3" y="547.6" width="4" height="1" fill="#444448" opacity="0.8"/><rect x="1429.7" y="547.6" width="4" height="1" fill="#4E4E52" opacity="0.8"/>
<rect x="1377.3" y="561.9" width="4" height="1" fill="#444448" opacity="0.8"/><rect x="1429.7" y="561.9" width="4" height="1" fill="#4E4E52" opacity="0.8"/>
<rect x="1377.3" y="576.2" width="4" height="1" fill="#444448" opacity="0.8"/><rect x="1429.7" y="576.2" width="4" height="1" fill="#4E4E52" opacity="0.8"/>
<rect x="1377.3" y="590.5" width="4" height="1" fill="#444448" opacity="0.8"/><rect x="1429.7" y="590.5" width="4" height="1" fill="#4E4E52" opacity="0.8"/>
<rect x="1377.3" y="604.8" width="4" height="1" fill="#444448" opacity="0.8"/><rect x="1429.7" y="604.8" width="4" height="1" fill="#4E4E52" opacity="0.8"/>
<rect x="1377.3" y="619.1" width="4" height="1" fill="#444448" opacity="0.8"/><rect x="1429.7" y="619.1" width="4" height="1" fill="#4E4E52" opacity="0.8"/>
<rect x="1377.3" y="633.4" width="4" height="1" fill="#444448" opacity="0.8"/><rect x="1429.7" y="633.4" width="4" height="1" fill="#4E4E52" opacity="0.8"/>
<rect x="1377.3" y="647.7" width="4" height="1" fill="#444448" opacity="0.8"/><rect x="1429.7" y="647.7" width="4" height="1" fill="#4E4E52" opacity="0.8"/>
<rect x="1377.3" y="662.0" width="4" height="1" fill="#444448" opacity="0.8"/><rect x="1429.7" y="662.0" width="4" height="1" fill="#4E4E52" opacity="0.8"/>
<rect x="1377.3" y="676.3" width="4" height="1" fill="#444448" opacity="0.8"/><rect x="1429.7" y="676.3" width="4" height="1" fill="#4E4E52" opacity="0.8"/>
<rect x="1377.3" y="690.6" width="4" height="1" fill="#444448" opacity="0.8"/><rect x="1429.7" y="690.6" width="4" height="1" fill="#4E4E52" opacity="0.8"/>
<rect x="1377.3" y="704.9" width="4" height="1" fill="#444448" opacity="0.8"/><rect x="1429.7" y="704.9" width="4" height="1" fill="#4E4E52" opacity="0.8"/>
<rect x="1377.3" y="719.2" width="4" height="1" fill="#444448" opacity="0.8"/><rect x="1429.7" y="719.2" width="4" height="1" fill="#4E4E52" opacity="0.8"/>
<rect x="1377.3" y="733.5" width="4" height="1" fill="#444448" opacity="0.8"/><rect x="1429.7" y="733.5" width="4" height="1" fill="#4E4E52" opacity="0.8"/>
<rect x="1377.3" y="747.8" width="4" height="1" fill="#444448" opacity="0.8"/><rect x="1429.7" y="747.8" width="4" height="1" fill="#4E4E52" opacity="0.8"/>
<rect x="1377.3" y="762.1" width="4" height="1" fill="#444448" opacity="0.8"/><rect x="1429.7" y="762.1" width="4" height="1" fill="#4E4E52" opacity="0.8"/>
<text x="1405.5" y="91" font-size="8" fill="#77777B" text-anchor="middle" font-weight="normal" >9</text>
<rect x="1377.3" y="146.5" width="11" height="1" fill="#4C4C50"/><rect x="1422.7" y="146.5" width="11" height="1" fill="#4C4C50"/>
<text x="1405.5" y="150" font-size="8" fill="#77777B" text-anchor="middle" font-weight="normal" >5</text>
<rect x="1377.3" y="218.5" width="11" height="1" fill="#4C4C50"/><rect x="1422.7" y="218.5" width="11" height="1" fill="#4C4C50"/>
<text x="1405.5" y="222" font-size="8" fill="#77777B" text-anchor="middle" font-weight="normal" >0</text>
<rect x="1377.3" y="290.0" width="11" height="1" fill="#4C4C50"/><rect x="1422.7" y="290.0" width="11" height="1" fill="#4C4C50"/>
<text x="1404.5" y="293.5" font-size="8" fill="#77777B" text-anchor="middle" font-weight="normal" >-5</text>
<rect x="1377.3" y="361.3" width="11" height="1" fill="#4C4C50"/><rect x="1422.7" y="361.3" width="11" height="1" fill="#4C4C50"/>
<text x="1404.5" y="364.8" font-size="8" fill="#77777B" text-anchor="middle" font-weight="normal" >-10</text>
<rect x="1377.3" y="429.9" width="11" height="1" fill="#4C4C50"/><rect x="1422.7" y="429.9" width="11" height="1" fill="#4C4C50"/>
<text x="1404.5" y="433.4" font-size="8" fill="#77777B" text-anchor="middle" font-weight="normal" >-15</text>
<rect x="1377.3" y="496.9" width="11" height="1" fill="#4C4C50"/><rect x="1422.7" y="496.9" width="11" height="1" fill="#4C4C50"/>
<text x="1404.5" y="500.4" font-size="8" fill="#77777B" text-anchor="middle" font-weight="normal" >-20</text>
<rect x="1377.3" y="554.5" width="11" height="1" fill="#4C4C50"/><rect x="1422.7" y="554.5" width="11" height="1" fill="#4C4C50"/>
<text x="1404.5" y="558" font-size="8" fill="#77777B" text-anchor="middle" font-weight="normal" >-25</text>
<rect x="1377.3" y="615.5" width="11" height="1" fill="#4C4C50"/><rect x="1422.7" y="615.5" width="11" height="1" fill="#4C4C50"/>
<text x="1404.5" y="619" font-size="8" fill="#77777B" text-anchor="middle" font-weight="normal" >-30</text>
<rect x="1377.3" y="663.5" width="11" height="1" fill="#4C4C50"/><rect x="1422.7" y="663.5" width="11" height="1" fill="#4C4C50"/>
<text x="1404.5" y="667" font-size="8" fill="#77777B" text-anchor="middle" font-weight="normal" >-35</text>
<rect x="1377.3" y="702.5" width="11" height="1" fill="#4C4C50"/><rect x="1422.7" y="702.5" width="11" height="1" fill="#4C4C50"/>
<text x="1404.5" y="706" font-size="8" fill="#77777B" text-anchor="middle" font-weight="normal" >-40</text>
<rect x="1377.3" y="749.5" width="11" height="1" fill="#4C4C50"/><rect x="1422.7" y="749.5" width="11" height="1" fill="#4C4C50"/>
<text x="1404.5" y="753" font-size="8" fill="#77777B" text-anchor="middle" font-weight="normal" >-50</text>
<rect x="1377.3" y="775.5" width="11" height="1" fill="#4C4C50"/><rect x="1422.7" y="775.5" width="11" height="1" fill="#4C4C50"/>
<text x="1404.5" y="779" font-size="8" fill="#77777B" text-anchor="middle" font-weight="normal" >-70</text>
<rect x="1375.8" y="226" width="6" height="121.5" fill="#A8921E"/>
<rect x="1375.8" y="347.500" width="6" height="428.5" fill="#3C9961"/>
<rect x="1429.2" y="226" width="6" height="121.5" fill="#A8921E"/>
<rect x="1429.2" y="347.500" width="6" height="428.5" fill="#3C9961"/>
<rect x="1383.8" y="412.0" width="12.500" height="1.500" fill="#C9C9CB"/>
<rect x="1383.8" y="413.5" width="12.500" height="362.5" fill="#3C9961"/>
<rect x="1387.3" y="413.5" width="1" height="362.5" fill="#5DB884" opacity="0.700"/>
<rect x="1415.2" y="399.5" width="12.500" height="17.5" fill="#A8921E"/>
<rect x="1415.2" y="398.0" width="12.500" height="1.500" fill="#C9C9CB"/>
<rect x="1415.2" y="417" width="12.500" height="359" fill="#3C9961"/>
<rect x="1418.7" y="417" width="1" height="359" fill="#5DB884" opacity="0.700"/>
<text x="1385.8" y="786.5" font-size="7.5" fill="#77777B" text-anchor="middle" font-weight="normal" >1</text>
<text x="1422.7" y="786.5" font-size="7.5" fill="#77777B" text-anchor="middle" font-weight="normal" >2</text>
<rect x="1367.8" y="780.500" width="73.40000000000009" height="0.010" fill="#15161A"/>
<rect x="1448.7" y="35.500" width="73.09999999999991" height="745" fill="#303134"/>
<rect x="1448.7" y="54" width="73.09999999999991" height="736" fill="#15161A"/>
<rect x="1450.7" y="36" width="16.500" height="14" fill="#82823A"/>
<text x="1461.7" y="47" font-size="8.5" fill="#C4C49A" text-anchor="middle" font-weight="normal" >3</text>
<rect x="1475.7" y="36" width="16.500" height="14" fill="#82823A"/>
<text x="1486.7" y="47" font-size="8.5" fill="#C4C49A" text-anchor="middle" font-weight="normal" >4</text>
<text x="1467.7" y="69.5" font-size="11.5" fill="#B4B4B7" text-anchor="end" font-weight="bold" >-4</text>
<text x="1468.2" y="70.5" font-size="8" fill="#77777A" text-anchor="start" font-weight="normal" font-style="italic">3</text>
<text x="1470.7" y="83.5" font-size="11.5" fill="#B4B4B7" text-anchor="end" font-weight="bold" >-15</text>
<text x="1471.2" y="84.5" font-size="8" fill="#77777A" text-anchor="start" font-weight="normal" font-style="italic">7</text>
<text x="1505.2" y="69.5" font-size="11.5" fill="#B4B4B7" text-anchor="end" font-weight="bold" >-4</text>
<text x="1505.7" y="70.5" font-size="8" fill="#77777A" text-anchor="start" font-weight="normal" font-style="italic">3</text>
<text x="1508.2" y="83.5" font-size="11.5" fill="#B4B4B7" text-anchor="end" font-weight="bold" >-17</text>
<text x="1508.7" y="84.5" font-size="8" fill="#77777A" text-anchor="start" font-weight="normal" font-style="italic">2</text>
<rect x="1457.6000000000001" y="90" width="1.200" height="129" fill="#8C2F44"/><rect x="1513.7" y="90" width="1.200" height="129" fill="#8C2F44"/>
<rect x="1458.2" y="89.500" width="56.09999999999991" height="1" fill="#4a4a4d"/>
<rect x="1457.6000000000001" y="219" width="1.200" height="129" fill="#A8921E"/><rect x="1513.7" y="219" width="1.200" height="129" fill="#A8921E"/>
<rect x="1458.2" y="90.0" width="4" height="1" fill="#444448" opacity="0.8"/><rect x="1510.3" y="90.0" width="4" height="1" fill="#4E4E52" opacity="0.8"/>
<rect x="1458.2" y="104.3" width="4" height="1" fill="#444448" opacity="0.8"/><rect x="1510.3" y="104.3" width="4" height="1" fill="#4E4E52" opacity="0.8"/>
<rect x="1458.2" y="118.6" width="4" height="1" fill="#444448" opacity="0.8"/><rect x="1510.3" y="118.6" width="4" height="1" fill="#4E4E52" opacity="0.8"/>
<rect x="1458.2" y="132.9" width="4" height="1" fill="#444448" opacity="0.8"/><rect x="1510.3" y="132.9" width="4" height="1" fill="#4E4E52" opacity="0.8"/>
<rect x="1458.2" y="147.2" width="4" height="1" fill="#444448" opacity="0.8"/><rect x="1510.3" y="147.2" width="4" height="1" fill="#4E4E52" opacity="0.8"/>
<rect x="1458.2" y="161.5" width="4" height="1" fill="#444448" opacity="0.8"/><rect x="1510.3" y="161.5" width="4" height="1" fill="#4E4E52" opacity="0.8"/>
<rect x="1458.2" y="175.8" width="4" height="1" fill="#444448" opacity="0.8"/><rect x="1510.3" y="175.8" width="4" height="1" fill="#4E4E52" opacity="0.8"/>
<rect x="1458.2" y="190.1" width="4" height="1" fill="#444448" opacity="0.8"/><rect x="1510.3" y="190.1" width="4" height="1" fill="#4E4E52" opacity="0.8"/>
<rect x="1458.2" y="204.4" width="4" height="1" fill="#444448" opacity="0.8"/><rect x="1510.3" y="204.4" width="4" height="1" fill="#4E4E52" opacity="0.8"/>
<rect x="1458.2" y="218.7" width="4" height="1" fill="#444448" opacity="0.8"/><rect x="1510.3" y="218.7" width="4" height="1" fill="#4E4E52" opacity="0.8"/>
<rect x="1458.2" y="233.0" width="4" height="1" fill="#444448" opacity="0.8"/><rect x="1510.3" y="233.0" width="4" height="1" fill="#4E4E52" opacity="0.8"/>
<rect x="1458.2" y="247.3" width="4" height="1" fill="#444448" opacity="0.8"/><rect x="1510.3" y="247.3" width="4" height="1" fill="#4E4E52" opacity="0.8"/>
<rect x="1458.2" y="261.6" width="4" height="1" fill="#444448" opacity="0.8"/><rect x="1510.3" y="261.6" width="4" height="1" fill="#4E4E52" opacity="0.8"/>
<rect x="1458.2" y="275.9" width="4" height="1" fill="#444448" opacity="0.8"/><rect x="1510.3" y="275.9" width="4" height="1" fill="#4E4E52" opacity="0.8"/>
<rect x="1458.2" y="290.2" width="4" height="1" fill="#444448" opacity="0.8"/><rect x="1510.3" y="290.2" width="4" height="1" fill="#4E4E52" opacity="0.8"/>
<rect x="1458.2" y="304.5" width="4" height="1" fill="#444448" opacity="0.8"/><rect x="1510.3" y="304.5" width="4" height="1" fill="#4E4E52" opacity="0.8"/>
<rect x="1458.2" y="318.8" width="4" height="1" fill="#444448" opacity="0.8"/><rect x="1510.3" y="318.8" width="4" height="1" fill="#4E4E52" opacity="0.8"/>
<rect x="1458.2" y="333.1" width="4" height="1" fill="#444448" opacity="0.8"/><rect x="1510.3" y="333.1" width="4" height="1" fill="#4E4E52" opacity="0.8"/>
<rect x="1458.2" y="347.4" width="4" height="1" fill="#444448" opacity="0.8"/><rect x="1510.3" y="347.4" width="4" height="1" fill="#4E4E52" opacity="0.8"/>
<rect x="1458.2" y="361.7" width="4" height="1" fill="#444448" opacity="0.8"/><rect x="1510.3" y="361.7" width="4" height="1" fill="#4E4E52" opacity="0.8"/>
<rect x="1458.2" y="376.0" width="4" height="1" fill="#444448" opacity="0.8"/><rect x="1510.3" y="376.0" width="4" height="1" fill="#4E4E52" opacity="0.8"/>
<rect x="1458.2" y="390.3" width="4" height="1" fill="#444448" opacity="0.8"/><rect x="1510.3" y="390.3" width="4" height="1" fill="#4E4E52" opacity="0.8"/>
<rect x="1458.2" y="404.6" width="4" height="1" fill="#444448" opacity="0.8"/><rect x="1510.3" y="404.6" width="4" height="1" fill="#4E4E52" opacity="0.8"/>
<rect x="1458.2" y="418.9" width="4" height="1" fill="#444448" opacity="0.8"/><rect x="1510.3" y="418.9" width="4" height="1" fill="#4E4E52" opacity="0.8"/>
<rect x="1458.2" y="433.2" width="4" height="1" fill="#444448" opacity="0.8"/><rect x="1510.3" y="433.2" width="4" height="1" fill="#4E4E52" opacity="0.8"/>
<rect x="1458.2" y="447.5" width="4" height="1" fill="#444448" opacity="0.8"/><rect x="1510.3" y="447.5" width="4" height="1" fill="#4E4E52" opacity="0.8"/>
<rect x="1458.2" y="461.8" width="4" height="1" fill="#444448" opacity="0.8"/><rect x="1510.3" y="461.8" width="4" height="1" fill="#4E4E52" opacity="0.8"/>
<rect x="1458.2" y="476.1" width="4" height="1" fill="#444448" opacity="0.8"/><rect x="1510.3" y="476.1" width="4" height="1" fill="#4E4E52" opacity="0.8"/>
<rect x="1458.2" y="490.4" width="4" height="1" fill="#444448" opacity="0.8"/><rect x="1510.3" y="490.4" width="4" height="1" fill="#4E4E52" opacity="0.8"/>
<rect x="1458.2" y="504.7" width="4" height="1" fill="#444448" opacity="0.8"/><rect x="1510.3" y="504.7" width="4" height="1" fill="#4E4E52" opacity="0.8"/>
<rect x="1458.2" y="519.0" width="4" height="1" fill="#444448" opacity="0.8"/><rect x="1510.3" y="519.0" width="4" height="1" fill="#4E4E52" opacity="0.8"/>
<rect x="1458.2" y="533.3" width="4" height="1" fill="#444448" opacity="0.8"/><rect x="1510.3" y="533.3" width="4" height="1" fill="#4E4E52" opacity="0.8"/>
<rect x="1458.2" y="547.6" width="4" height="1" fill="#444448" opacity="0.8"/><rect x="1510.3" y="547.6" width="4" height="1" fill="#4E4E52" opacity="0.8"/>
<rect x="1458.2" y="561.9" width="4" height="1" fill="#444448" opacity="0.8"/><rect x="1510.3" y="561.9" width="4" height="1" fill="#4E4E52" opacity="0.8"/>
<rect x="1458.2" y="576.2" width="4" height="1" fill="#444448" opacity="0.8"/><rect x="1510.3" y="576.2" width="4" height="1" fill="#4E4E52" opacity="0.8"/>
<rect x="1458.2" y="590.5" width="4" height="1" fill="#444448" opacity="0.8"/><rect x="1510.3" y="590.5" width="4" height="1" fill="#4E4E52" opacity="0.8"/>
<rect x="1458.2" y="604.8" width="4" height="1" fill="#444448" opacity="0.8"/><rect x="1510.3" y="604.8" width="4" height="1" fill="#4E4E52" opacity="0.8"/>
<rect x="1458.2" y="619.1" width="4" height="1" fill="#444448" opacity="0.8"/><rect x="1510.3" y="619.1" width="4" height="1" fill="#4E4E52" opacity="0.8"/>
<rect x="1458.2" y="633.4" width="4" height="1" fill="#444448" opacity="0.8"/><rect x="1510.3" y="633.4" width="4" height="1" fill="#4E4E52" opacity="0.8"/>
<rect x="1458.2" y="647.7" width="4" height="1" fill="#444448" opacity="0.8"/><rect x="1510.3" y="647.7" width="4" height="1" fill="#4E4E52" opacity="0.8"/>
<rect x="1458.2" y="662.0" width="4" height="1" fill="#444448" opacity="0.8"/><rect x="1510.3" y="662.0" width="4" height="1" fill="#4E4E52" opacity="0.8"/>
<rect x="1458.2" y="676.3" width="4" height="1" fill="#444448" opacity="0.8"/><rect x="1510.3" y="676.3" width="4" height="1" fill="#4E4E52" opacity="0.8"/>
<rect x="1458.2" y="690.6" width="4" height="1" fill="#444448" opacity="0.8"/><rect x="1510.3" y="690.6" width="4" height="1" fill="#4E4E52" opacity="0.8"/>
<rect x="1458.2" y="704.9" width="4" height="1" fill="#444448" opacity="0.8"/><rect x="1510.3" y="704.9" width="4" height="1" fill="#4E4E52" opacity="0.8"/>
<rect x="1458.2" y="719.2" width="4" height="1" fill="#444448" opacity="0.8"/><rect x="1510.3" y="719.2" width="4" height="1" fill="#4E4E52" opacity="0.8"/>
<rect x="1458.2" y="733.5" width="4" height="1" fill="#444448" opacity="0.8"/><rect x="1510.3" y="733.5" width="4" height="1" fill="#4E4E52" opacity="0.8"/>
<rect x="1458.2" y="747.8" width="4" height="1" fill="#444448" opacity="0.8"/><rect x="1510.3" y="747.8" width="4" height="1" fill="#4E4E52" opacity="0.8"/>
<rect x="1458.2" y="762.1" width="4" height="1" fill="#444448" opacity="0.8"/><rect x="1510.3" y="762.1" width="4" height="1" fill="#4E4E52" opacity="0.8"/>
<text x="1486.25" y="91" font-size="8" fill="#77777B" text-anchor="middle" font-weight="normal" >9</text>
<rect x="1458.2" y="146.5" width="11" height="1" fill="#4C4C50"/><rect x="1503.3" y="146.5" width="11" height="1" fill="#4C4C50"/>
<text x="1486.25" y="150" font-size="8" fill="#77777B" text-anchor="middle" font-weight="normal" >5</text>
<rect x="1458.2" y="218.5" width="11" height="1" fill="#4C4C50"/><rect x="1503.3" y="218.5" width="11" height="1" fill="#4C4C50"/>
<text x="1486.25" y="222" font-size="8" fill="#77777B" text-anchor="middle" font-weight="normal" >0</text>
<rect x="1458.2" y="290.0" width="11" height="1" fill="#4C4C50"/><rect x="1503.3" y="290.0" width="11" height="1" fill="#4C4C50"/>
<text x="1485.25" y="293.5" font-size="8" fill="#77777B" text-anchor="middle" font-weight="normal" >-5</text>
<rect x="1458.2" y="361.3" width="11" height="1" fill="#4C4C50"/><rect x="1503.3" y="361.3" width="11" height="1" fill="#4C4C50"/>
<text x="1485.25" y="364.8" font-size="8" fill="#77777B" text-anchor="middle" font-weight="normal" >-10</text>
<rect x="1458.2" y="429.9" width="11" height="1" fill="#4C4C50"/><rect x="1503.3" y="429.9" width="11" height="1" fill="#4C4C50"/>
<text x="1485.25" y="433.4" font-size="8" fill="#77777B" text-anchor="middle" font-weight="normal" >-15</text>
<rect x="1458.2" y="496.9" width="11" height="1" fill="#4C4C50"/><rect x="1503.3" y="496.9" width="11" height="1" fill="#4C4C50"/>
<text x="1485.25" y="500.4" font-size="8" fill="#77777B" text-anchor="middle" font-weight="normal" >-20</text>
<rect x="1458.2" y="554.5" width="11" height="1" fill="#4C4C50"/><rect x="1503.3" y="554.5" width="11" height="1" fill="#4C4C50"/>
<text x="1485.25" y="558" font-size="8" fill="#77777B" text-anchor="middle" font-weight="normal" >-25</text>
<rect x="1458.2" y="615.5" width="11" height="1" fill="#4C4C50"/><rect x="1503.3" y="615.5" width="11" height="1" fill="#4C4C50"/>
<text x="1485.25" y="619" font-size="8" fill="#77777B" text-anchor="middle" font-weight="normal" >-30</text>
<rect x="1458.2" y="663.5" width="11" height="1" fill="#4C4C50"/><rect x="1503.3" y="663.5" width="11" height="1" fill="#4C4C50"/>
<text x="1485.25" y="667" font-size="8" fill="#77777B" text-anchor="middle" font-weight="normal" >-35</text>
<rect x="1458.2" y="702.5" width="11" height="1" fill="#4C4C50"/><rect x="1503.3" y="702.5" width="11" height="1" fill="#4C4C50"/>
<text x="1485.25" y="706" font-size="8" fill="#77777B" text-anchor="middle" font-weight="normal" >-40</text>
<rect x="1458.2" y="749.5" width="11" height="1" fill="#4C4C50"/><rect x="1503.3" y="749.5" width="11" height="1" fill="#4C4C50"/>
<text x="1485.25" y="753" font-size="8" fill="#77777B" text-anchor="middle" font-weight="normal" >-50</text>
<rect x="1458.2" y="775.5" width="11" height="1" fill="#4C4C50"/><rect x="1503.3" y="775.5" width="11" height="1" fill="#4C4C50"/>
<text x="1485.25" y="779" font-size="8" fill="#77777B" text-anchor="middle" font-weight="normal" >-70</text>
<rect x="1456.7" y="319.5" width="6" height="28.0" fill="#A8921E"/>
<rect x="1456.7" y="347.500" width="6" height="428.5" fill="#3C9961"/>
<rect x="1509.8" y="330" width="6" height="17.5" fill="#A8921E"/>
<rect x="1509.8" y="347.500" width="6" height="428.5" fill="#3C9961"/>
<rect x="1456.7" y="279.500" width="6" height="1.600" fill="#A8921E"/><rect x="1509.8" y="279.500" width="6" height="1.600" fill="#A8921E"/>
<rect x="1464.7" y="439.3" width="12.500" height="1.500" fill="#C9C9CB"/>
<rect x="1464.7" y="440.8" width="12.500" height="335.2" fill="#3C9961"/>
<rect x="1468.2" y="440.8" width="1" height="335.2" fill="#5DB884" opacity="0.700"/>
<rect x="1495.8" y="461.5" width="12.500" height="1.500" fill="#C9C9CB"/>
<rect x="1495.8" y="463" width="12.500" height="313" fill="#3C9961"/>
<rect x="1499.3" y="463" width="1" height="313" fill="#5DB884" opacity="0.700"/>
<text x="1466.7" y="786.5" font-size="7.5" fill="#77777B" text-anchor="middle" font-weight="normal" >3</text>
<text x="1503.3" y="786.5" font-size="7.5" fill="#77777B" text-anchor="middle" font-weight="normal" >4</text>
<rect x="1448.7" y="780.500" width="73.09999999999991" height="0.010" fill="#15161A"/>
<rect x="1529" y="35.500" width="73" height="745" fill="#303134"/>
<rect x="1529" y="54" width="73" height="736" fill="#15161A"/>
<rect x="1531" y="36" width="16.500" height="14" fill="#8C435B"/>
<text x="1542" y="47" font-size="8.5" fill="#D4A5B5" text-anchor="middle" font-weight="normal" >5</text>
<rect x="1556" y="36" width="16.500" height="14" fill="#8C435B"/>
<text x="1567" y="47" font-size="8.5" fill="#D4A5B5" text-anchor="middle" font-weight="normal" >6</text>
<text x="1548.0" y="69.5" font-size="11.5" fill="#B4B4B7" text-anchor="end" font-weight="bold" >-4</text>
<text x="1548.5" y="70.5" font-size="8" fill="#77777A" text-anchor="start" font-weight="normal" font-style="italic">3</text>
<text x="1551.0" y="83.5" font-size="11.5" fill="#B4B4B7" text-anchor="end" font-weight="bold" >-16</text>
<text x="1551.5" y="84.5" font-size="8" fill="#77777A" text-anchor="start" font-weight="normal" font-style="italic">3</text>
<text x="1585.5" y="69.5" font-size="11.5" fill="#B4B4B7" text-anchor="end" font-weight="bold" >-4</text>
<text x="1586.0" y="70.5" font-size="8" fill="#77777A" text-anchor="start" font-weight="normal" font-style="italic">3</text>
<text x="1588.5" y="83.5" font-size="11.5" fill="#B4B4B7" text-anchor="end" font-weight="bold" >-15</text>
<text x="1589.0" y="84.5" font-size="8" fill="#77777A" text-anchor="start" font-weight="normal" font-style="italic">7</text>
<rect x="1537.9" y="90" width="1.200" height="129" fill="#8C2F44"/><rect x="1593.9" y="90" width="1.200" height="129" fill="#8C2F44"/>
<rect x="1538.5" y="89.500" width="56.0" height="1" fill="#4a4a4d"/>
<rect x="1537.9" y="219" width="1.200" height="129" fill="#A8921E"/><rect x="1593.9" y="219" width="1.200" height="129" fill="#A8921E"/>
<rect x="1538.5" y="90.0" width="4" height="1" fill="#444448" opacity="0.8"/><rect x="1590.5" y="90.0" width="4" height="1" fill="#4E4E52" opacity="0.8"/>
<rect x="1538.5" y="104.3" width="4" height="1" fill="#444448" opacity="0.8"/><rect x="1590.5" y="104.3" width="4" height="1" fill="#4E4E52" opacity="0.8"/>
<rect x="1538.5" y="118.6" width="4" height="1" fill="#444448" opacity="0.8"/><rect x="1590.5" y="118.6" width="4" height="1" fill="#4E4E52" opacity="0.8"/>
<rect x="1538.5" y="132.9" width="4" height="1" fill="#444448" opacity="0.8"/><rect x="1590.5" y="132.9" width="4" height="1" fill="#4E4E52" opacity="0.8"/>
<rect x="1538.5" y="147.2" width="4" height="1" fill="#444448" opacity="0.8"/><rect x="1590.5" y="147.2" width="4" height="1" fill="#4E4E52" opacity="0.8"/>
<rect x="1538.5" y="161.5" width="4" height="1" fill="#444448" opacity="0.8"/><rect x="1590.5" y="161.5" width="4" height="1" fill="#4E4E52" opacity="0.8"/>
<rect x="1538.5" y="175.8" width="4" height="1" fill="#444448" opacity="0.8"/><rect x="1590.5" y="175.8" width="4" height="1" fill="#4E4E52" opacity="0.8"/>
<rect x="1538.5" y="190.1" width="4" height="1" fill="#444448" opacity="0.8"/><rect x="1590.5" y="190.1" width="4" height="1" fill="#4E4E52" opacity="0.8"/>
<rect x="1538.5" y="204.4" width="4" height="1" fill="#444448" opacity="0.8"/><rect x="1590.5" y="204.4" width="4" height="1" fill="#4E4E52" opacity="0.8"/>
<rect x="1538.5" y="218.7" width="4" height="1" fill="#444448" opacity="0.8"/><rect x="1590.5" y="218.7" width="4" height="1" fill="#4E4E52" opacity="0.8"/>
<rect x="1538.5" y="233.0" width="4" height="1" fill="#444448" opacity="0.8"/><rect x="1590.5" y="233.0" width="4" height="1" fill="#4E4E52" opacity="0.8"/>
<rect x="1538.5" y="247.3" width="4" height="1" fill="#444448" opacity="0.8"/><rect x="1590.5" y="247.3" width="4" height="1" fill="#4E4E52" opacity="0.8"/>
<rect x="1538.5" y="261.6" width="4" height="1" fill="#444448" opacity="0.8"/><rect x="1590.5" y="261.6" width="4" height="1" fill="#4E4E52" opacity="0.8"/>
<rect x="1538.5" y="275.9" width="4" height="1" fill="#444448" opacity="0.8"/><rect x="1590.5" y="275.9" width="4" height="1" fill="#4E4E52" opacity="0.8"/>
<rect x="1538.5" y="290.2" width="4" height="1" fill="#444448" opacity="0.8"/><rect x="1590.5" y="290.2" width="4" height="1" fill="#4E4E52" opacity="0.8"/>
<rect x="1538.5" y="304.5" width="4" height="1" fill="#444448" opacity="0.8"/><rect x="1590.5" y="304.5" width="4" height="1" fill="#4E4E52" opacity="0.8"/>
<rect x="1538.5" y="318.8" width="4" height="1" fill="#444448" opacity="0.8"/><rect x="1590.5" y="318.8" width="4" height="1" fill="#4E4E52" opacity="0.8"/>
<rect x="1538.5" y="333.1" width="4" height="1" fill="#444448" opacity="0.8"/><rect x="1590.5" y="333.1" width="4" height="1" fill="#4E4E52" opacity="0.8"/>
<rect x="1538.5" y="347.4" width="4" height="1" fill="#444448" opacity="0.8"/><rect x="1590.5" y="347.4" width="4" height="1" fill="#4E4E52" opacity="0.8"/>
<rect x="1538.5" y="361.7" width="4" height="1" fill="#444448" opacity="0.8"/><rect x="1590.5" y="361.7" width="4" height="1" fill="#4E4E52" opacity="0.8"/>
<rect x="1538.5" y="376.0" width="4" height="1" fill="#444448" opacity="0.8"/><rect x="1590.5" y="376.0" width="4" height="1" fill="#4E4E52" opacity="0.8"/>
<rect x="1538.5" y="390.3" width="4" height="1" fill="#444448" opacity="0.8"/><rect x="1590.5" y="390.3" width="4" height="1" fill="#4E4E52" opacity="0.8"/>
<rect x="1538.5" y="404.6" width="4" height="1" fill="#444448" opacity="0.8"/><rect x="1590.5" y="404.6" width="4" height="1" fill="#4E4E52" opacity="0.8"/>
<rect x="1538.5" y="418.9" width="4" height="1" fill="#444448" opacity="0.8"/><rect x="1590.5" y="418.9" width="4" height="1" fill="#4E4E52" opacity="0.8"/>
<rect x="1538.5" y="433.2" width="4" height="1" fill="#444448" opacity="0.8"/><rect x="1590.5" y="433.2" width="4" height="1" fill="#4E4E52" opacity="0.8"/>
<rect x="1538.5" y="447.5" width="4" height="1" fill="#444448" opacity="0.8"/><rect x="1590.5" y="447.5" width="4" height="1" fill="#4E4E52" opacity="0.8"/>
<rect x="1538.5" y="461.8" width="4" height="1" fill="#444448" opacity="0.8"/><rect x="1590.5" y="461.8" width="4" height="1" fill="#4E4E52" opacity="0.8"/>
<rect x="1538.5" y="476.1" width="4" height="1" fill="#444448" opacity="0.8"/><rect x="1590.5" y="476.1" width="4" height="1" fill="#4E4E52" opacity="0.8"/>
<rect x="1538.5" y="490.4" width="4" height="1" fill="#444448" opacity="0.8"/><rect x="1590.5" y="490.4" width="4" height="1" fill="#4E4E52" opacity="0.8"/>
<rect x="1538.5" y="504.7" width="4" height="1" fill="#444448" opacity="0.8"/><rect x="1590.5" y="504.7" width="4" height="1" fill="#4E4E52" opacity="0.8"/>
<rect x="1538.5" y="519.0" width="4" height="1" fill="#444448" opacity="0.8"/><rect x="1590.5" y="519.0" width="4" height="1" fill="#4E4E52" opacity="0.8"/>
<rect x="1538.5" y="533.3" width="4" height="1" fill="#444448" opacity="0.8"/><rect x="1590.5" y="533.3" width="4" height="1" fill="#4E4E52" opacity="0.8"/>
<rect x="1538.5" y="547.6" width="4" height="1" fill="#444448" opacity="0.8"/><rect x="1590.5" y="547.6" width="4" height="1" fill="#4E4E52" opacity="0.8"/>
<rect x="1538.5" y="561.9" width="4" height="1" fill="#444448" opacity="0.8"/><rect x="1590.5" y="561.9" width="4" height="1" fill="#4E4E52" opacity="0.8"/>
<rect x="1538.5" y="576.2" width="4" height="1" fill="#444448" opacity="0.8"/><rect x="1590.5" y="576.2" width="4" height="1" fill="#4E4E52" opacity="0.8"/>
<rect x="1538.5" y="590.5" width="4" height="1" fill="#444448" opacity="0.8"/><rect x="1590.5" y="590.5" width="4" height="1" fill="#4E4E52" opacity="0.8"/>
<rect x="1538.5" y="604.8" width="4" height="1" fill="#444448" opacity="0.8"/><rect x="1590.5" y="604.8" width="4" height="1" fill="#4E4E52" opacity="0.8"/>
<rect x="1538.5" y="619.1" width="4" height="1" fill="#444448" opacity="0.8"/><rect x="1590.5" y="619.1" width="4" height="1" fill="#4E4E52" opacity="0.8"/>
<rect x="1538.5" y="633.4" width="4" height="1" fill="#444448" opacity="0.8"/><rect x="1590.5" y="633.4" width="4" height="1" fill="#4E4E52" opacity="0.8"/>
<rect x="1538.5" y="647.7" width="4" height="1" fill="#444448" opacity="0.8"/><rect x="1590.5" y="647.7" width="4" height="1" fill="#4E4E52" opacity="0.8"/>
<rect x="1538.5" y="662.0" width="4" height="1" fill="#444448" opacity="0.8"/><rect x="1590.5" y="662.0" width="4" height="1" fill="#4E4E52" opacity="0.8"/>
<rect x="1538.5" y="676.3" width="4" height="1" fill="#444448" opacity="0.8"/><rect x="1590.5" y="676.3" width="4" height="1" fill="#4E4E52" opacity="0.8"/>
<rect x="1538.5" y="690.6" width="4" height="1" fill="#444448" opacity="0.8"/><rect x="1590.5" y="690.6" width="4" height="1" fill="#4E4E52" opacity="0.8"/>
<rect x="1538.5" y="704.9" width="4" height="1" fill="#444448" opacity="0.8"/><rect x="1590.5" y="704.9" width="4" height="1" fill="#4E4E52" opacity="0.8"/>
<rect x="1538.5" y="719.2" width="4" height="1" fill="#444448" opacity="0.8"/><rect x="1590.5" y="719.2" width="4" height="1" fill="#4E4E52" opacity="0.8"/>
<rect x="1538.5" y="733.5" width="4" height="1" fill="#444448" opacity="0.8"/><rect x="1590.5" y="733.5" width="4" height="1" fill="#4E4E52" opacity="0.8"/>
<rect x="1538.5" y="747.8" width="4" height="1" fill="#444448" opacity="0.8"/><rect x="1590.5" y="747.8" width="4" height="1" fill="#4E4E52" opacity="0.8"/>
<rect x="1538.5" y="762.1" width="4" height="1" fill="#444448" opacity="0.8"/><rect x="1590.5" y="762.1" width="4" height="1" fill="#4E4E52" opacity="0.8"/>
<text x="1566.5" y="91" font-size="8" fill="#77777B" text-anchor="middle" font-weight="normal" >9</text>
<rect x="1538.5" y="146.5" width="11" height="1" fill="#4C4C50"/><rect x="1583.5" y="146.5" width="11" height="1" fill="#4C4C50"/>
<text x="1566.5" y="150" font-size="8" fill="#77777B" text-anchor="middle" font-weight="normal" >5</text>
<rect x="1538.5" y="218.5" width="11" height="1" fill="#4C4C50"/><rect x="1583.5" y="218.5" width="11" height="1" fill="#4C4C50"/>
<text x="1566.5" y="222" font-size="8" fill="#77777B" text-anchor="middle" font-weight="normal" >0</text>
<rect x="1538.5" y="290.0" width="11" height="1" fill="#4C4C50"/><rect x="1583.5" y="290.0" width="11" height="1" fill="#4C4C50"/>
<text x="1565.5" y="293.5" font-size="8" fill="#77777B" text-anchor="middle" font-weight="normal" >-5</text>
<rect x="1538.5" y="361.3" width="11" height="1" fill="#4C4C50"/><rect x="1583.5" y="361.3" width="11" height="1" fill="#4C4C50"/>
<text x="1565.5" y="364.8" font-size="8" fill="#77777B" text-anchor="middle" font-weight="normal" >-10</text>
<rect x="1538.5" y="429.9" width="11" height="1" fill="#4C4C50"/><rect x="1583.5" y="429.9" width="11" height="1" fill="#4C4C50"/>
<text x="1565.5" y="433.4" font-size="8" fill="#77777B" text-anchor="middle" font-weight="normal" >-15</text>
<rect x="1538.5" y="496.9" width="11" height="1" fill="#4C4C50"/><rect x="1583.5" y="496.9" width="11" height="1" fill="#4C4C50"/>
<text x="1565.5" y="500.4" font-size="8" fill="#77777B" text-anchor="middle" font-weight="normal" >-20</text>
<rect x="1538.5" y="554.5" width="11" height="1" fill="#4C4C50"/><rect x="1583.5" y="554.5" width="11" height="1" fill="#4C4C50"/>
<text x="1565.5" y="558" font-size="8" fill="#77777B" text-anchor="middle" font-weight="normal" >-25</text>
<rect x="1538.5" y="615.5" width="11" height="1" fill="#4C4C50"/><rect x="1583.5" y="615.5" width="11" height="1" fill="#4C4C50"/>
<text x="1565.5" y="619" font-size="8" fill="#77777B" text-anchor="middle" font-weight="normal" >-30</text>
<rect x="1538.5" y="663.5" width="11" height="1" fill="#4C4C50"/><rect x="1583.5" y="663.5" width="11" height="1" fill="#4C4C50"/>
<text x="1565.5" y="667" font-size="8" fill="#77777B" text-anchor="middle" font-weight="normal" >-35</text>
<rect x="1538.5" y="702.5" width="11" height="1" fill="#4C4C50"/><rect x="1583.5" y="702.5" width="11" height="1" fill="#4C4C50"/>
<text x="1565.5" y="706" font-size="8" fill="#77777B" text-anchor="middle" font-weight="normal" >-40</text>
<rect x="1538.5" y="749.5" width="11" height="1" fill="#4C4C50"/><rect x="1583.5" y="749.5" width="11" height="1" fill="#4C4C50"/>
<text x="1565.5" y="753" font-size="8" fill="#77777B" text-anchor="middle" font-weight="normal" >-50</text>
<rect x="1538.5" y="775.5" width="11" height="1" fill="#4C4C50"/><rect x="1583.5" y="775.5" width="11" height="1" fill="#4C4C50"/>
<text x="1565.5" y="779" font-size="8" fill="#77777B" text-anchor="middle" font-weight="normal" >-70</text>
<rect x="1537.0" y="319.5" width="6" height="28.0" fill="#A8921E"/>
<rect x="1537.0" y="347.500" width="6" height="428.5" fill="#3C9961"/>
<rect x="1590.0" y="317.5" width="6" height="30.0" fill="#A8921E"/>
<rect x="1590.0" y="347.500" width="6" height="428.5" fill="#3C9961"/>
<rect x="1537.0" y="279.500" width="6" height="1.600" fill="#A8921E"/><rect x="1590.0" y="279.500" width="6" height="1.600" fill="#A8921E"/>
<rect x="1545.0" y="443.9" width="12.500" height="1.500" fill="#C9C9CB"/>
<rect x="1545.0" y="445.4" width="12.500" height="330.6" fill="#3C9961"/>
<rect x="1548.5" y="445.4" width="1" height="330.6" fill="#5DB884" opacity="0.700"/>
<rect x="1576.0" y="437.3" width="12.500" height="1.500" fill="#C9C9CB"/>
<rect x="1576.0" y="438.8" width="12.500" height="337.2" fill="#3C9961"/>
<rect x="1579.5" y="438.8" width="1" height="337.2" fill="#5DB884" opacity="0.700"/>
<text x="1547.0" y="786.5" font-size="7.5" fill="#77777B" text-anchor="middle" font-weight="normal" >5</text>
<text x="1583.5" y="786.5" font-size="7.5" fill="#77777B" text-anchor="middle" font-weight="normal" >6</text>
<rect x="1529" y="780.500" width="73" height="0.010" fill="#15161A"/>
<rect x="1359.500" y="790" width="241" height="6" fill="#353639"/>
<rect x="1358" y="796" width="242" height="20" fill="#242427"/>
<rect x="1361.500" y="799" width="108" height="13.500" fill="#39393C"/>
<text x="1367" y="809.5" font-size="8.5" fill="#BDBDBF" text-anchor="start" font-weight="bold" >Channel Meters</text>
<rect x="1446" y="802" width="7.500" height="7" fill="none" stroke="#BDBDBF" stroke-width="1.200"/>
<path d="M1458.500 802l7 7M1465.500 802l-7 7" stroke="#D0D0D2" stroke-width="1.800"/>
</g>
<g id="plugin">
<rect x="240.7" y="88" width="1117.3" height="668.3" fill="#000" opacity="0.75" filter="url(#pshadow)"/>
<rect x="243.7" y="87" width="1113.3" height="663.3" fill="#1F2227"/>
<rect x="243.7" y="154" width="1113.3" height="274" fill="#13161B"/>
<rect x="243.7" y="428" width="1113.3" height="7" fill="url(#bodyfade)"/>
<rect x="243.7" y="677" width="1113.3" height="73.29999999999995" fill="#202327"/>
<rect x="247.200" y="435.5" width="158.800" height="241.500" fill="#292C31"/>
<rect x="414" y="435.5" width="772" height="241.500" fill="#292C31"/>
<rect x="1194" y="435.5" width="159" height="241.500" fill="#292C31"/>
<rect x="243.7" y="87" width="1113.3" height="67" fill="#E6C044"/>
<rect x="260" y="103" width="33.500" height="34" fill="none" stroke="#1B1B1B" stroke-width="2"/>
<path d="M267.800 120v-2.500a4.300 4.300 0 0 1 8.600 0v5a4.300 4.300 0 0 0 8.600 0v-2.300" fill="none" stroke="#1B1B1B" stroke-width="2.500" stroke-linecap="round"/>
<path d="M285 114.200v2.800" stroke="#1B1B1B" stroke-width="2.500" stroke-linecap="round"/>
<text x="305.5" y="114" font-size="12.5" fill="#1B1B1B" text-anchor="start" font-weight="bold"  textLength="48" lengthAdjust="spacingAndGlyphs">colorFX</text>
<text x="305.5" y="132.5" font-size="17.5" fill="#1B1B1B" text-anchor="start" font-weight="normal" letter-spacing="7.1" stroke="#1B1B1B" stroke-width="0.55">TAPE MACHINE</text>
<g clip-path="url(#hdrclip)" fill="none" stroke="#1B1B1B" stroke-width="1.700">
<circle cx="722.5" cy="147.5" r="38"/>
<circle cx="722.5" cy="147.5" r="8"/>
<path d="M709.5 143.8 L694.2 141.0 L704.2 125.0 L713.5 137.5Z"/>
<path d="M732.2 138.1 L742.3 126.3 L751.1 143.0 L735.7 144.7Z"/>
<path d="M725.8 160.6 L731.0 175.2 L712.1 174.6 L718.3 160.3Z"/>
<circle cx="877.5" cy="98" r="38"/>
<circle cx="877.5" cy="98" r="8"/>
<path d="M864.1 99.2 L848.8 102.0 L852.4 83.5 L865.5 91.9Z"/>
<path d="M883.2 85.8 L888.4 71.1 L902.6 83.5 L888.8 90.6Z"/>
<path d="M885.2 109.1 L895.4 120.9 L877.5 127.0 L878.2 111.5Z"/>
<path d="M713.100 110.700L830 80.900"/>
<path d="M909.800 117.900L885 158"/>
</g>
<rect x="928" y="104" width="415" height="32.500" fill="#13161B"/>
<rect x="1276" y="104" width="67" height="32.500" fill="#1E2126"/>
<rect x="959.500" y="104" width="1" height="32.500" fill="#22252A"/><rect x="991.500" y="104" width="1" height="32.500" fill="#22252A"/><rect x="1309.500" y="104" width="1" height="32.500" fill="#15181C"/>
<rect x="992" y="135.400" width="284" height="1.600" fill="#FFFFFF"/>
<path d="M949.500 116l-8.500 4.700l8.500 4.700" fill="none" stroke="#F0F0F0" stroke-width="2.500"/>
<path d="M972 116l8.500 4.700l-8.500 4.700" fill="none" stroke="#F0F0F0" stroke-width="2.500"/>
<text x="1002" y="126" font-size="15.5" fill="#EDEDED" text-anchor="start" font-weight="normal" stroke="#EDEDED" stroke-width="0.25" textLength="87" lengthAdjust="spacingAndGlyphs">Bump Pump</text>
<path d="M1239.500 117.500l9 6.500l9 -6.500" fill="none" stroke="#F0F0F0" stroke-width="2"/>
<circle cx="1293" cy="120.5" r="3.900" fill="none" stroke="#F0F0F0" stroke-width="2.700"/>
<line x1="1293.00" y1="116.00" x2="1293.00" y2="113.50" stroke="#F0F0F0" stroke-width="2.5" />
<line x1="1296.18" y1="117.32" x2="1297.95" y2="115.55" stroke="#F0F0F0" stroke-width="2.5" />
<line x1="1297.50" y1="120.50" x2="1300.00" y2="120.50" stroke="#F0F0F0" stroke-width="2.5" />
<line x1="1296.18" y1="123.68" x2="1297.95" y2="125.45" stroke="#F0F0F0" stroke-width="2.5" />
<line x1="1293.00" y1="125.00" x2="1293.00" y2="127.50" stroke="#F0F0F0" stroke-width="2.5" />
<line x1="1289.82" y1="123.68" x2="1288.05" y2="125.45" stroke="#F0F0F0" stroke-width="2.5" />
<line x1="1288.50" y1="120.50" x2="1286.00" y2="120.50" stroke="#F0F0F0" stroke-width="2.5" />
<line x1="1289.82" y1="117.32" x2="1288.05" y2="115.55" stroke="#F0F0F0" stroke-width="2.5" />
<path d="M1329.34 115.66A6.3 6.3 0 1 1 1322.66 115.66" fill="none" stroke="#F0F0F0" stroke-width="1.800"/><path d="M1326 112.500v8" stroke="#F0F0F0" stroke-width="1.800"/>
<text x="268.5" y="189.5" font-size="12.5" fill="#5B5F65" text-anchor="start" font-weight="normal"  textLength="29.3" lengthAdjust="spacingAndGlyphs">Input</text>
<rect x="313.500" y="175" width="1.500" height="20" fill="#4A4D52"/>
<text x="332.5" y="189.5" font-size="12.5" fill="#E6C044" text-anchor="start" font-weight="normal" stroke="#E6C044" stroke-width="0.3" textLength="56.5" lengthAdjust="spacingAndGlyphs">Recording</text>
<text x="264.5" y="418.5" font-size="12.5" fill="#E6C044" text-anchor="start" font-weight="normal" stroke="#E6C044" stroke-width="0.3" textLength="33.3" lengthAdjust="spacingAndGlyphs">Meter</text>
<text x="336" y="418.5" font-size="12.5" fill="#5B5F65" text-anchor="start" font-weight="normal"  textLength="53.6" lengthAdjust="spacingAndGlyphs">Spectrum</text>
<text x="434.5" y="418.5" font-size="12.5" fill="#5B5F65" text-anchor="start" font-weight="normal"  textLength="58.7" lengthAdjust="spacingAndGlyphs">Waveform</text>
<text x="537" y="418.5" font-size="12.5" fill="#5B5F65" text-anchor="start" font-weight="normal"  textLength="53" lengthAdjust="spacingAndGlyphs">Loudness</text>
<rect x="314.5" y="404" width="1.500" height="20" fill="#4A4D52"/>
<rect x="415" y="404" width="1.500" height="20" fill="#4A4D52"/>
<rect x="515" y="404" width="1.500" height="20" fill="#4A4D52"/>
<text x="999.5" y="418.5" font-size="12.5" fill="#E6C044" text-anchor="start" font-weight="normal" stroke="#E6C044" stroke-width="0.3" textLength="33.3" lengthAdjust="spacingAndGlyphs">Meter</text>
<text x="1071" y="418.5" font-size="12.5" fill="#5B5F65" text-anchor="start" font-weight="normal"  textLength="53.6" lengthAdjust="spacingAndGlyphs">Spectrum</text>
<text x="1169.5" y="418.5" font-size="12.5" fill="#5B5F65" text-anchor="start" font-weight="normal"  textLength="58.7" lengthAdjust="spacingAndGlyphs">Waveform</text>
<text x="1272" y="418.5" font-size="12.5" fill="#5B5F65" text-anchor="start" font-weight="normal"  textLength="53" lengthAdjust="spacingAndGlyphs">Loudness</text>
<rect x="1049.5" y="404" width="1.500" height="20" fill="#4A4D52"/>
<rect x="1150" y="404" width="1.500" height="20" fill="#4A4D52"/>
<rect x="1250" y="404" width="1.500" height="20" fill="#4A4D52"/>
<path d="M311.67 290.13A203.5 203.5 0 0 1 459.91 251.79" fill="none" stroke="#CACACC" stroke-width="4.900"/>
<path d="M316.32 296.39A195.7 195.7 0 0 1 458.88 259.52" fill="none" stroke="#CACACC" stroke-width="2.200"/>
<path d="M464.83 252.51A203.5 203.5 0 0 1 554.33 290.13" fill="none" stroke="#E6C044" stroke-width="4.700"/>
<path d="M463.61 260.21A195.7 195.7 0 0 1 549.68 296.39" fill="none" stroke="#E6C044" stroke-width="2.200"/>
<line x1="324.03" y1="280.45" x2="314.97" y2="266.07" stroke="#CACACC" stroke-width="1.7" />
<line x1="356.06" y1="264.02" x2="350.04" y2="249.20" stroke="#CACACC" stroke-width="1.7" />
<line x1="376.29" y1="257.02" x2="371.99" y2="242.13" stroke="#CACACC" stroke-width="1.7" />
<line x1="384.57" y1="254.82" x2="382.67" y2="247.05" stroke="#CACACC" stroke-width="1.7" />
<line x1="394.33" y1="252.69" x2="391.30" y2="236.98" stroke="#CACACC" stroke-width="1.7" />
<line x1="405.60" y1="250.84" x2="404.53" y2="242.92" stroke="#CACACC" stroke-width="1.7" />
<line x1="418.02" y1="249.55" x2="416.70" y2="231.60" stroke="#CACACC" stroke-width="1.7" />
<line x1="433.00" y1="249.00" x2="433.00" y2="241.00" stroke="#CACACC" stroke-width="1.7" />
<line x1="449.76" y1="249.69" x2="450.41" y2="241.71" stroke="#CACACC" stroke-width="1.7" />
<line x1="467.10" y1="251.86" x2="469.77" y2="236.09" stroke="#E6C044" stroke-width="1.7" />
<line x1="487.31" y1="256.34" x2="489.17" y2="249.59" stroke="#E6C044" stroke-width="1.7" />
<line x1="510.27" y1="264.16" x2="513.10" y2="257.22" stroke="#E6C044" stroke-width="1.7" />
<line x1="532.77" y1="274.99" x2="540.82" y2="260.58" stroke="#E6C044" stroke-width="1.7" />
<text x="308.3" y="260.8" font-size="12.5" fill="#D8D8DA" text-anchor="middle" font-weight="normal" stroke="#D8D8DA" stroke-width="0.25">20</text>
<text x="344.5" y="241.8" font-size="12.5" fill="#D8D8DA" text-anchor="middle" font-weight="normal" stroke="#D8D8DA" stroke-width="0.25">10</text>
<text x="367.3" y="232.9" font-size="12.5" fill="#D8D8DA" text-anchor="middle" font-weight="normal" stroke="#D8D8DA" stroke-width="0.25">7</text>
<text x="389" y="227.3" font-size="12.5" fill="#D8D8DA" text-anchor="middle" font-weight="normal" stroke="#D8D8DA" stroke-width="0.25">5</text>
<text x="416.4" y="225.2" font-size="12.5" fill="#D8D8DA" text-anchor="middle" font-weight="normal" stroke="#D8D8DA" stroke-width="0.25">3</text>
<text x="471.9" y="227.3" font-size="12.5" fill="#E6C044" text-anchor="middle" font-weight="normal" stroke="#E6C044" stroke-width="0.3">0</text>
<text x="494.6" y="231.5" font-size="12.5" fill="#E6C044" text-anchor="middle" font-weight="normal" stroke="#E6C044" stroke-width="0.3">1</text>
<text x="518.4" y="240.1" font-size="12.5" fill="#E6C044" text-anchor="middle" font-weight="normal" stroke="#E6C044" stroke-width="0.3">2</text>
<text x="544.3" y="254.2" font-size="12.5" fill="#E6C044" text-anchor="middle" font-weight="normal" stroke="#E6C044" stroke-width="0.3">3</text>
<text x="290" y="292" font-size="12" fill="#D8D8DA" text-anchor="middle" font-weight="normal" >-</text>
<text x="575.4" y="291.5" font-size="11" fill="#E6C044" text-anchor="middle" font-weight="normal" >+</text>
<text x="432.5" y="305" font-size="12.5" fill="#C9C9CB" text-anchor="middle" font-weight="normal" stroke="#C9C9CB" stroke-width="0.2">VU</text>
<text x="432.5" y="323.5" font-size="12.5" fill="#C9C9CB" text-anchor="middle" font-weight="normal" stroke="#C9C9CB" stroke-width="0.2">Rec Level</text>
<text x="432.5" y="367.8" font-size="12" fill="#73777D" text-anchor="middle" font-weight="normal" stroke="#73777D" stroke-width="0.25">VU Lead: 6 dB</text>
<line x1="427.30" y1="228.00" x2="429.80" y2="341.50" stroke="#101216" stroke-width="4.5" />
<line x1="427.30" y1="228.00" x2="429.80" y2="341.50" stroke="#E4E4E4" stroke-width="1.8" />
<line x1="429.23" y1="315.39" x2="429.80" y2="341.50" stroke="#E4E4E4" stroke-width="3.6" />
<path d="M1046.67 290.13A203.5 203.5 0 0 1 1194.91 251.79" fill="none" stroke="#CACACC" stroke-width="4.900"/>
<path d="M1051.32 296.39A195.7 195.7 0 0 1 1193.88 259.52" fill="none" stroke="#CACACC" stroke-width="2.200"/>
<path d="M1199.83 252.51A203.5 203.5 0 0 1 1289.33 290.13" fill="none" stroke="#E6C044" stroke-width="4.700"/>
<path d="M1198.61 260.21A195.7 195.7 0 0 1 1284.68 296.39" fill="none" stroke="#E6C044" stroke-width="2.200"/>
<line x1="1059.03" y1="280.45" x2="1049.97" y2="266.07" stroke="#CACACC" stroke-width="1.7" />
<line x1="1091.06" y1="264.02" x2="1085.04" y2="249.20" stroke="#CACACC" stroke-width="1.7" />
<line x1="1111.29" y1="257.02" x2="1106.99" y2="242.13" stroke="#CACACC" stroke-width="1.7" />
<line x1="1119.57" y1="254.82" x2="1117.67" y2="247.05" stroke="#CACACC" stroke-width="1.7" />
<line x1="1129.33" y1="252.69" x2="1126.30" y2="236.98" stroke="#CACACC" stroke-width="1.7" />
<line x1="1140.60" y1="250.84" x2="1139.53" y2="242.92" stroke="#CACACC" stroke-width="1.7" />
<line x1="1153.02" y1="249.55" x2="1151.70" y2="231.60" stroke="#CACACC" stroke-width="1.7" />
<line x1="1168.00" y1="249.00" x2="1168.00" y2="241.00" stroke="#CACACC" stroke-width="1.7" />
<line x1="1184.76" y1="249.69" x2="1185.41" y2="241.71" stroke="#CACACC" stroke-width="1.7" />
<line x1="1202.10" y1="251.86" x2="1204.77" y2="236.09" stroke="#E6C044" stroke-width="1.7" />
<line x1="1222.31" y1="256.34" x2="1224.17" y2="249.59" stroke="#E6C044" stroke-width="1.7" />
<line x1="1245.27" y1="264.16" x2="1248.10" y2="257.22" stroke="#E6C044" stroke-width="1.7" />
<line x1="1267.77" y1="274.99" x2="1275.82" y2="260.58" stroke="#E6C044" stroke-width="1.7" />
<text x="1043.3" y="260.8" font-size="12.5" fill="#D8D8DA" text-anchor="middle" font-weight="normal" stroke="#D8D8DA" stroke-width="0.25">20</text>
<text x="1079.5" y="241.8" font-size="12.5" fill="#D8D8DA" text-anchor="middle" font-weight="normal" stroke="#D8D8DA" stroke-width="0.25">10</text>
<text x="1102.3" y="232.9" font-size="12.5" fill="#D8D8DA" text-anchor="middle" font-weight="normal" stroke="#D8D8DA" stroke-width="0.25">7</text>
<text x="1124" y="227.3" font-size="12.5" fill="#D8D8DA" text-anchor="middle" font-weight="normal" stroke="#D8D8DA" stroke-width="0.25">5</text>
<text x="1151.4" y="225.2" font-size="12.5" fill="#D8D8DA" text-anchor="middle" font-weight="normal" stroke="#D8D8DA" stroke-width="0.25">3</text>
<text x="1206.9" y="227.3" font-size="12.5" fill="#E6C044" text-anchor="middle" font-weight="normal" stroke="#E6C044" stroke-width="0.3">0</text>
<text x="1229.6" y="231.5" font-size="12.5" fill="#E6C044" text-anchor="middle" font-weight="normal" stroke="#E6C044" stroke-width="0.3">1</text>
<text x="1253.4" y="240.1" font-size="12.5" fill="#E6C044" text-anchor="middle" font-weight="normal" stroke="#E6C044" stroke-width="0.3">2</text>
<text x="1279.3" y="254.2" font-size="12.5" fill="#E6C044" text-anchor="middle" font-weight="normal" stroke="#E6C044" stroke-width="0.3">3</text>
<text x="1025" y="292" font-size="12" fill="#D8D8DA" text-anchor="middle" font-weight="normal" >-</text>
<text x="1310.4" y="291.5" font-size="11" fill="#E6C044" text-anchor="middle" font-weight="normal" >+</text>
<text x="1167.5" y="305" font-size="12.5" fill="#C9C9CB" text-anchor="middle" font-weight="normal" stroke="#C9C9CB" stroke-width="0.2">VU</text>
<text x="1167.5" y="323.5" font-size="12.5" fill="#C9C9CB" text-anchor="middle" font-weight="normal" stroke="#C9C9CB" stroke-width="0.2">+ True Peak</text>
<text x="1167.5" y="367.8" font-size="12" fill="#73777D" text-anchor="middle" font-weight="normal" stroke="#73777D" stroke-width="0.25">VU Lead: 12 dB</text>
<line x1="1073.00" y1="283.00" x2="1078.50" y2="294.00" stroke="#B5B5B7" stroke-width="2.6" />
<line x1="1106.50" y1="270.00" x2="1112.00" y2="283.50" stroke="#B5B5B7" stroke-width="2.6" />
<line x1="1077.00" y1="247.50" x2="1119.50" y2="341.00" stroke="#101216" stroke-width="4.5" />
<line x1="1077.00" y1="247.50" x2="1119.50" y2="341.00" stroke="#E4E4E4" stroke-width="1.8" />
<line x1="1109.72" y1="319.50" x2="1119.50" y2="341.00" stroke="#E4E4E4" stroke-width="3.6" />
<path d="M651.25 196.73A9.5 9.5 0 1 1 660.75 196.73" fill="none" stroke="#5E6166" stroke-width="2.400"/>
<line x1="651.69" y1="182.98" x2="648.92" y2="179.44" stroke="#E8E8E8" stroke-width="3" />
<text x="709.5" y="194" font-size="15.5" fill="#EDEDED" text-anchor="middle" font-weight="normal" stroke="#EDEDED" stroke-width="0.35" textLength="32.3" lengthAdjust="spacingAndGlyphs">Gain</text>
<path d="M755.36 189.24A7.7 7.7 0 0 1 768.15 182.58" fill="none" stroke="#E6C044" stroke-width="2.700"/>
<path d="M770.64 187.36A7.7 7.7 0 0 1 757.85 194.02" fill="none" stroke="#E6C044" stroke-width="2.700"/>
<path d="M772.2 179.60000000000002v6.600h-7.200z" fill="#E6C044"/>
<path d="M753.8 197.0v-6.600h7.200z" fill="#E6C044"/>
<path d="M827.500 179v11.500M822.500 186l5 5l5 -5" fill="none" stroke="#E6C044" stroke-width="2.100"/><path d="M818.500 196.300h19" stroke="#E6C044" stroke-width="2.100"/>
<text x="887" y="194" font-size="15.5" fill="#EDEDED" text-anchor="middle" font-weight="normal" stroke="#EDEDED" stroke-width="0.35" textLength="48.5" lengthAdjust="spacingAndGlyphs">Limiter</text>
<circle cx="947.500" cy="188.500" r="8.300" fill="#25282D"/>
<rect x="662.5" y="221.10000000000002" width="97.5" height="12.400" rx="5" fill="#1A1C20" opacity="0.7"/>
<rect x="663" y="221.9" width="96.5" height="10.800" rx="4.500" fill="#4C4F54"/>
<rect x="688" y="223.10000000000002" width="22" height="8.400" fill="#E6C044"/>
<rect x="710" y="221.9" width="1.500" height="10.800" fill="#2a2c30"/>
<circle cx="688" cy="227.3" r="5.800" fill="#24262A"/>
<circle cx="688" cy="227.3" r="4" fill="#D2D2D2"/>
<rect x="751.0" y="452.8" width="98.5" height="12.400" rx="5" fill="#1A1C20" opacity="0.7"/>
<rect x="751.5" y="453.6" width="97.5" height="10.800" rx="4.500" fill="#4C4F54"/>
<rect x="785" y="454.8" width="14.5" height="8.400" fill="#E6C044"/>
<rect x="799.5" y="453.6" width="1.500" height="10.800" fill="#2a2c30"/>
<circle cx="785" cy="459" r="5.800" fill="#24262A"/>
<circle cx="785" cy="459" r="4" fill="#D2D2D2"/>
<rect x="1224.5" y="452.8" width="98" height="12.400" rx="5" fill="#1A1C20" opacity="0.7"/>
<rect x="1225" y="453.6" width="97" height="10.800" rx="4.500" fill="#4C4F54"/>
<circle cx="1273.5" cy="459" r="5.800" fill="#24262A"/>
<circle cx="1273.5" cy="459" r="4" fill="#D2D2D2"/>
<circle cx="710.5" cy="303" r="51.0" fill="url(#ksh)"/>
<line x1="679.74" y1="333.76" x2="675.50" y2="338.00" stroke="#484B50" stroke-width="2.2" />
<line x1="676.98" y1="330.73" x2="672.36" y2="334.55" stroke="#484B50" stroke-width="2.2" />
<line x1="674.52" y1="327.45" x2="669.56" y2="330.82" stroke="#484B50" stroke-width="2.2" />
<line x1="672.38" y1="323.96" x2="667.12" y2="326.85" stroke="#484B50" stroke-width="2.2" />
<line x1="670.58" y1="320.28" x2="665.07" y2="322.66" stroke="#484B50" stroke-width="2.2" />
<line x1="669.13" y1="316.44" x2="663.42" y2="318.30" stroke="#484B50" stroke-width="2.2" />
<line x1="668.05" y1="312.49" x2="662.19" y2="313.80" stroke="#484B50" stroke-width="2.2" />
<line x1="667.34" y1="308.45" x2="661.39" y2="309.20" stroke="#484B50" stroke-width="2.2" />
<line x1="667.02" y1="304.37" x2="661.02" y2="304.55" stroke="#484B50" stroke-width="2.2" />
<line x1="667.09" y1="300.27" x2="661.10" y2="299.89" stroke="#484B50" stroke-width="2.2" />
<line x1="698.36" y1="261.23" x2="696.69" y2="255.47" stroke="#484B50" stroke-width="2.2" />
<line x1="702.35" y1="260.27" x2="701.22" y2="254.38" stroke="#484B50" stroke-width="2.2" />
<line x1="706.41" y1="259.69" x2="705.84" y2="253.72" stroke="#484B50" stroke-width="2.2" />
<line x1="710.50" y1="259.50" x2="710.50" y2="253.50" stroke="#484B50" stroke-width="2.2" />
<line x1="714.59" y1="259.69" x2="715.16" y2="253.72" stroke="#484B50" stroke-width="2.2" />
<line x1="718.65" y1="260.27" x2="719.78" y2="254.38" stroke="#484B50" stroke-width="2.2" />
<line x1="722.64" y1="261.23" x2="724.31" y2="255.47" stroke="#484B50" stroke-width="2.2" />
<line x1="726.51" y1="262.55" x2="728.72" y2="256.98" stroke="#484B50" stroke-width="2.2" />
<line x1="730.25" y1="264.24" x2="732.97" y2="258.90" stroke="#484B50" stroke-width="2.2" />
<line x1="733.81" y1="266.27" x2="737.02" y2="261.21" stroke="#484B50" stroke-width="2.2" />
<line x1="737.16" y1="268.63" x2="740.84" y2="263.89" stroke="#484B50" stroke-width="2.2" />
<line x1="740.28" y1="271.29" x2="744.39" y2="266.92" stroke="#484B50" stroke-width="2.2" />
<line x1="743.13" y1="274.23" x2="747.63" y2="270.27" stroke="#484B50" stroke-width="2.2" />
<line x1="745.69" y1="277.43" x2="750.55" y2="273.90" stroke="#484B50" stroke-width="2.2" />
<line x1="747.94" y1="280.86" x2="753.11" y2="277.80" stroke="#484B50" stroke-width="2.2" />
<line x1="749.86" y1="284.48" x2="755.29" y2="281.92" stroke="#484B50" stroke-width="2.2" />
<line x1="751.43" y1="288.26" x2="757.07" y2="286.23" stroke="#484B50" stroke-width="2.2" />
<line x1="752.63" y1="292.18" x2="758.44" y2="290.69" stroke="#484B50" stroke-width="2.2" />
<line x1="753.46" y1="296.20" x2="759.39" y2="295.26" stroke="#484B50" stroke-width="2.2" />
<line x1="753.91" y1="300.27" x2="759.90" y2="299.89" stroke="#484B50" stroke-width="2.2" />
<line x1="753.98" y1="304.37" x2="759.98" y2="304.55" stroke="#484B50" stroke-width="2.2" />
<line x1="753.66" y1="308.45" x2="759.61" y2="309.20" stroke="#484B50" stroke-width="2.2" />
<line x1="752.95" y1="312.49" x2="758.81" y2="313.80" stroke="#484B50" stroke-width="2.2" />
<line x1="751.87" y1="316.44" x2="757.58" y2="318.30" stroke="#484B50" stroke-width="2.2" />
<line x1="750.42" y1="320.28" x2="755.93" y2="322.66" stroke="#484B50" stroke-width="2.2" />
<line x1="748.62" y1="323.96" x2="753.88" y2="326.85" stroke="#484B50" stroke-width="2.2" />
<line x1="746.48" y1="327.45" x2="751.44" y2="330.82" stroke="#484B50" stroke-width="2.2" />
<line x1="744.02" y1="330.73" x2="748.64" y2="334.55" stroke="#484B50" stroke-width="2.2" />
<line x1="741.26" y1="333.76" x2="745.50" y2="338.00" stroke="#484B50" stroke-width="2.2" />
<path d="M665.26 295.84A45.8 45.8 0 0 1 693.34 260.53" fill="none" stroke="#E6C044" stroke-width="7"/>
<line x1="680.45" y1="333.05" x2="674.44" y2="339.06" stroke="#E8E8E8" stroke-width="3.5" />
<line x1="740.55" y1="333.05" x2="746.56" y2="339.06" stroke="#E8E8E8" stroke-width="3.5" />
<line x1="669.46" y1="296.87" x2="660.55" y2="295.54" stroke="#E8E8E8" stroke-width="3.5" />
<circle cx="710.5" cy="304.5" r="35.5" fill="#0c0e11" opacity="0.55"/>
<circle cx="710.5" cy="303" r="33" fill="url(#kg)"/>
<line x1="696.61" y1="272.52" x2="703.24" y2="287.08" stroke="#E8E8E8" stroke-width="4.4" />
<path d="M703.36 379.94A7.7 7.7 0 0 1 716.15 373.28" fill="none" stroke="#E6C044" stroke-width="2.700"/>
<path d="M718.64 378.06A7.7 7.7 0 0 1 705.85 384.72" fill="none" stroke="#E6C044" stroke-width="2.700"/>
<path d="M720.2 370.3v6.600h-7.200z" fill="#E6C044"/>
<path d="M701.8 387.7v-6.600h7.200z" fill="#E6C044"/>
<text x="710" y="414.5" font-size="15.5" fill="#EDEDED" text-anchor="middle" font-weight="normal" stroke="#EDEDED" stroke-width="0.35" textLength="57.6" lengthAdjust="spacingAndGlyphs">Makeup</text>
<path d="M844.31 348.19A63.2 63.2 0 1 1 933.69 348.19" fill="none" stroke="#E6C044" stroke-width="7.4"/>
<line x1="847.63" y1="344.87" x2="840.92" y2="351.58" stroke="#E8E8E8" stroke-width="4" />
<line x1="930.37" y1="344.87" x2="937.08" y2="351.58" stroke="#E8E8E8" stroke-width="4" />
<circle cx="889" cy="305.0" r="52.5" fill="#0c0e11" opacity="0.55"/>
<circle cx="889" cy="303.5" r="50" fill="url(#kg)"/>
<line x1="925.33" y1="338.58" x2="909.86" y2="323.65" stroke="#E8E8E8" stroke-width="6.3" />
<rect x="882.0" y="378.6" width="14.0" height="8.7" rx="1.2" fill="#5C6066"/>
<path d="M892.6 379.1v-3.24a3.6 3.6 0 0 0 -7.2 0v1.400" fill="none" stroke="#5C6066" stroke-width="2.2"/>
<rect x="887.9" y="381.21" width="2.2" height="3.91" rx="0.8" fill="#13161B"/>
<text x="888" y="414.5" font-size="15.5" fill="#EDEDED" text-anchor="middle" font-weight="normal" stroke="#EDEDED" stroke-width="0.35" textLength="26.2" lengthAdjust="spacingAndGlyphs">Mix</text>
<circle cx="326" cy="540.5" r="51.0" fill="url(#ksh)"/>
<line x1="295.24" y1="571.26" x2="291.00" y2="575.50" stroke="#484B50" stroke-width="2.2" />
<line x1="292.48" y1="568.23" x2="287.86" y2="572.05" stroke="#484B50" stroke-width="2.2" />
<line x1="290.02" y1="564.95" x2="285.06" y2="568.32" stroke="#484B50" stroke-width="2.2" />
<line x1="287.88" y1="561.46" x2="282.62" y2="564.35" stroke="#484B50" stroke-width="2.2" />
<line x1="286.08" y1="557.78" x2="280.57" y2="560.16" stroke="#484B50" stroke-width="2.2" />
<line x1="284.63" y1="553.94" x2="278.92" y2="555.80" stroke="#484B50" stroke-width="2.2" />
<line x1="283.55" y1="549.99" x2="277.69" y2="551.30" stroke="#484B50" stroke-width="2.2" />
<line x1="282.84" y1="545.95" x2="276.89" y2="546.70" stroke="#484B50" stroke-width="2.2" />
<line x1="282.52" y1="541.87" x2="276.52" y2="542.05" stroke="#484B50" stroke-width="2.2" />
<line x1="282.59" y1="537.77" x2="276.60" y2="537.39" stroke="#484B50" stroke-width="2.2" />
<line x1="283.04" y1="533.70" x2="277.11" y2="532.76" stroke="#484B50" stroke-width="2.2" />
<line x1="283.87" y1="529.68" x2="278.06" y2="528.19" stroke="#484B50" stroke-width="2.2" />
<line x1="285.07" y1="525.76" x2="279.43" y2="523.73" stroke="#484B50" stroke-width="2.2" />
<line x1="286.64" y1="521.98" x2="281.21" y2="519.42" stroke="#484B50" stroke-width="2.2" />
<line x1="288.56" y1="518.36" x2="283.39" y2="515.30" stroke="#484B50" stroke-width="2.2" />
<line x1="290.81" y1="514.93" x2="285.95" y2="511.40" stroke="#484B50" stroke-width="2.2" />
<line x1="293.37" y1="511.73" x2="288.87" y2="507.77" stroke="#484B50" stroke-width="2.2" />
<line x1="296.22" y1="508.79" x2="292.11" y2="504.42" stroke="#484B50" stroke-width="2.2" />
<line x1="299.34" y1="506.13" x2="295.66" y2="501.39" stroke="#484B50" stroke-width="2.2" />
<line x1="302.69" y1="503.77" x2="299.48" y2="498.71" stroke="#484B50" stroke-width="2.2" />
<line x1="306.25" y1="501.74" x2="303.53" y2="496.40" stroke="#484B50" stroke-width="2.2" />
<line x1="309.99" y1="500.05" x2="307.78" y2="494.48" stroke="#484B50" stroke-width="2.2" />
<line x1="313.86" y1="498.73" x2="312.19" y2="492.97" stroke="#484B50" stroke-width="2.2" />
<line x1="317.85" y1="497.77" x2="316.72" y2="491.88" stroke="#484B50" stroke-width="2.2" />
<line x1="321.91" y1="497.19" x2="321.34" y2="491.22" stroke="#484B50" stroke-width="2.2" />
<line x1="326.00" y1="497.00" x2="326.00" y2="491.00" stroke="#484B50" stroke-width="2.2" />
<line x1="330.09" y1="497.19" x2="330.66" y2="491.22" stroke="#484B50" stroke-width="2.2" />
<line x1="334.15" y1="497.77" x2="335.28" y2="491.88" stroke="#484B50" stroke-width="2.2" />
<line x1="338.14" y1="498.73" x2="339.81" y2="492.97" stroke="#484B50" stroke-width="2.2" />
<line x1="342.01" y1="500.05" x2="344.22" y2="494.48" stroke="#484B50" stroke-width="2.2" />
<line x1="345.75" y1="501.74" x2="348.47" y2="496.40" stroke="#484B50" stroke-width="2.2" />
<line x1="349.31" y1="503.77" x2="352.52" y2="498.71" stroke="#484B50" stroke-width="2.2" />
<line x1="352.66" y1="506.13" x2="356.34" y2="501.39" stroke="#484B50" stroke-width="2.2" />
<line x1="355.78" y1="508.79" x2="359.89" y2="504.42" stroke="#484B50" stroke-width="2.2" />
<line x1="358.63" y1="511.73" x2="363.13" y2="507.77" stroke="#484B50" stroke-width="2.2" />
<line x1="361.19" y1="514.93" x2="366.05" y2="511.40" stroke="#484B50" stroke-width="2.2" />
<line x1="363.44" y1="518.36" x2="368.61" y2="515.30" stroke="#484B50" stroke-width="2.2" />
<line x1="365.36" y1="521.98" x2="370.79" y2="519.42" stroke="#484B50" stroke-width="2.2" />
<line x1="366.93" y1="525.76" x2="372.57" y2="523.73" stroke="#484B50" stroke-width="2.2" />
<line x1="368.13" y1="529.68" x2="373.94" y2="528.19" stroke="#484B50" stroke-width="2.2" />
<line x1="368.96" y1="533.70" x2="374.89" y2="532.76" stroke="#484B50" stroke-width="2.2" />
<line x1="369.41" y1="537.77" x2="375.40" y2="537.39" stroke="#484B50" stroke-width="2.2" />
<line x1="369.48" y1="541.87" x2="375.48" y2="542.05" stroke="#484B50" stroke-width="2.2" />
<line x1="369.16" y1="545.95" x2="375.11" y2="546.70" stroke="#484B50" stroke-width="2.2" />
<line x1="368.45" y1="549.99" x2="374.31" y2="551.30" stroke="#484B50" stroke-width="2.2" />
<line x1="367.37" y1="553.94" x2="373.08" y2="555.80" stroke="#484B50" stroke-width="2.2" />
<line x1="365.92" y1="557.78" x2="371.43" y2="560.16" stroke="#484B50" stroke-width="2.2" />
<line x1="364.12" y1="561.46" x2="369.38" y2="564.35" stroke="#484B50" stroke-width="2.2" />
<line x1="361.98" y1="564.95" x2="366.94" y2="568.32" stroke="#484B50" stroke-width="2.2" />
<line x1="359.52" y1="568.23" x2="364.14" y2="572.05" stroke="#484B50" stroke-width="2.2" />
<line x1="356.76" y1="571.26" x2="361.00" y2="575.50" stroke="#484B50" stroke-width="2.2" />
<line x1="326.00" y1="498.00" x2="326.00" y2="489.50" stroke="#E8E8E8" stroke-width="4" />
<line x1="295.95" y1="570.55" x2="289.94" y2="576.56" stroke="#E8E8E8" stroke-width="4" />
<line x1="356.05" y1="570.55" x2="362.06" y2="576.56" stroke="#E8E8E8" stroke-width="4" />
<circle cx="326" cy="542.0" r="35.5" fill="#1b1d21" opacity="0.55"/>
<circle cx="326" cy="540.5" r="33" fill="url(#kg)"/>
<line x1="326.00" y1="507.00" x2="326.00" y2="523.34" stroke="#E8E8E8" stroke-width="4.6" />
<text x="326" y="615.5" font-size="16" fill="#EDEDED" text-anchor="middle" font-weight="normal" stroke="#EDEDED" stroke-width="0.5" textLength="77.8" lengthAdjust="spacingAndGlyphs">Input Filter</text>
<circle cx="483.5" cy="478.5" r="17.500" fill="#1b1d21" opacity="0.5"/>
<circle cx="483.5" cy="477.5" r="15.700" fill="url(#kg)"/>
<line x1="468.30" y1="477.50" x2="477.00" y2="477.50" stroke="#E8E8E8" stroke-width="2.8" />
<text x="483.5" y="534.5" font-size="16" fill="#EDEDED" text-anchor="middle" font-weight="normal" stroke="#EDEDED" stroke-width="0.5" textLength="46" lengthAdjust="spacingAndGlyphs">Soften</text>
<circle cx="483.5" cy="596" r="17.500" fill="#1b1d21" opacity="0.5"/>
<circle cx="483.5" cy="595" r="15.700" fill="url(#kg)"/>
<line x1="468.30" y1="595.00" x2="477.00" y2="595.00" stroke="#E8E8E8" stroke-width="2.8" />
<text x="483.5" y="652.5" font-size="16" fill="#EDEDED" text-anchor="middle" font-weight="normal" stroke="#EDEDED" stroke-width="0.5" textLength="37.9" lengthAdjust="spacingAndGlyphs">Grain</text>
<circle cx="594.5" cy="539.5" r="51.0" fill="url(#ksh)"/>
<line x1="598.59" y1="496.19" x2="599.16" y2="490.22" stroke="#484B50" stroke-width="2.2" />
<line x1="602.65" y1="496.77" x2="603.78" y2="490.88" stroke="#484B50" stroke-width="2.2" />
<line x1="606.64" y1="497.73" x2="608.31" y2="491.97" stroke="#484B50" stroke-width="2.2" />
<line x1="610.51" y1="499.05" x2="612.72" y2="493.48" stroke="#484B50" stroke-width="2.2" />
<line x1="614.25" y1="500.74" x2="616.97" y2="495.40" stroke="#484B50" stroke-width="2.2" />
<line x1="617.81" y1="502.77" x2="621.02" y2="497.71" stroke="#484B50" stroke-width="2.2" />
<line x1="621.16" y1="505.13" x2="624.84" y2="500.39" stroke="#484B50" stroke-width="2.2" />
<line x1="624.28" y1="507.79" x2="628.39" y2="503.42" stroke="#484B50" stroke-width="2.2" />
<line x1="627.13" y1="510.73" x2="631.63" y2="506.77" stroke="#484B50" stroke-width="2.2" />
<line x1="629.69" y1="513.93" x2="634.55" y2="510.40" stroke="#484B50" stroke-width="2.2" />
<line x1="631.94" y1="517.36" x2="637.11" y2="514.30" stroke="#484B50" stroke-width="2.2" />
<line x1="633.86" y1="520.98" x2="639.29" y2="518.42" stroke="#484B50" stroke-width="2.2" />
<line x1="635.43" y1="524.76" x2="641.07" y2="522.73" stroke="#484B50" stroke-width="2.2" />
<line x1="636.63" y1="528.68" x2="642.44" y2="527.19" stroke="#484B50" stroke-width="2.2" />
<line x1="637.46" y1="532.70" x2="643.39" y2="531.76" stroke="#484B50" stroke-width="2.2" />
<line x1="637.91" y1="536.77" x2="643.90" y2="536.39" stroke="#484B50" stroke-width="2.2" />
<line x1="637.98" y1="540.87" x2="643.98" y2="541.05" stroke="#484B50" stroke-width="2.2" />
<line x1="637.66" y1="544.95" x2="643.61" y2="545.70" stroke="#484B50" stroke-width="2.2" />
<line x1="636.95" y1="548.99" x2="642.81" y2="550.30" stroke="#484B50" stroke-width="2.2" />
<line x1="635.87" y1="552.94" x2="641.58" y2="554.80" stroke="#484B50" stroke-width="2.2" />
<line x1="634.42" y1="556.78" x2="639.93" y2="559.16" stroke="#484B50" stroke-width="2.2" />
<line x1="632.62" y1="560.46" x2="637.88" y2="563.35" stroke="#484B50" stroke-width="2.2" />
<line x1="630.48" y1="563.95" x2="635.44" y2="567.32" stroke="#484B50" stroke-width="2.2" />
<line x1="628.02" y1="567.23" x2="632.64" y2="571.05" stroke="#484B50" stroke-width="2.2" />
<line x1="625.26" y1="570.26" x2="629.50" y2="574.50" stroke="#484B50" stroke-width="2.2" />
<path d="M562.11 571.89A45.8 45.8 0 0 1 594.50 493.70" fill="none" stroke="#E6C044" stroke-width="7.2"/>
<line x1="564.45" y1="569.55" x2="558.44" y2="575.56" stroke="#E8E8E8" stroke-width="4" />
<line x1="624.55" y1="569.55" x2="630.56" y2="575.56" stroke="#E8E8E8" stroke-width="4" />
<circle cx="594.5" cy="541.0" r="35.5" fill="#1b1d21" opacity="0.55"/>
<circle cx="594.5" cy="539.5" r="33" fill="url(#kg)"/>
<line x1="594.50" y1="506.00" x2="594.50" y2="522.34" stroke="#E8E8E8" stroke-width="4.6" />
<text x="594.5" y="614.5" font-size="16" fill="#EDEDED" text-anchor="middle" font-weight="normal" stroke="#EDEDED" stroke-width="0.5" textLength="76.8" lengthAdjust="spacingAndGlyphs">Tape Speed</text>
<circle cx="696" cy="596" r="17.500" fill="#1b1d21" opacity="0.5"/>
<circle cx="696" cy="595" r="15.700" fill="url(#kg)"/>
<line x1="708.89" y1="586.95" x2="701.51" y2="591.56" stroke="#E8E8E8" stroke-width="2.8" />
<text x="695.5" y="652.5" font-size="16" fill="#EDEDED" text-anchor="middle" font-weight="normal" stroke="#EDEDED" stroke-width="0.5" textLength="28.8" lengthAdjust="spacingAndGlyphs">Low</text>
<circle cx="800" cy="556" r="68.8" fill="url(#ksh)"/>
<line x1="757.36" y1="598.64" x2="752.41" y2="603.59" stroke="#484B50" stroke-width="2.3" />
<line x1="754.66" y1="595.76" x2="749.40" y2="600.37" stroke="#484B50" stroke-width="2.3" />
<line x1="752.16" y1="592.71" x2="746.61" y2="596.97" stroke="#484B50" stroke-width="2.3" />
<line x1="749.86" y1="589.50" x2="744.04" y2="593.39" stroke="#484B50" stroke-width="2.3" />
<line x1="747.78" y1="586.15" x2="741.72" y2="589.65" stroke="#484B50" stroke-width="2.3" />
<line x1="745.92" y1="582.67" x2="739.64" y2="585.77" stroke="#484B50" stroke-width="2.3" />
<line x1="744.29" y1="579.08" x2="737.82" y2="581.75" stroke="#484B50" stroke-width="2.3" />
<line x1="742.90" y1="575.38" x2="736.27" y2="577.63" stroke="#484B50" stroke-width="2.3" />
<line x1="741.75" y1="571.61" x2="734.99" y2="573.42" stroke="#484B50" stroke-width="2.3" />
<line x1="740.86" y1="567.76" x2="733.99" y2="569.13" stroke="#484B50" stroke-width="2.3" />
<line x1="740.22" y1="563.87" x2="733.28" y2="564.78" stroke="#484B50" stroke-width="2.3" />
<line x1="739.83" y1="559.94" x2="732.84" y2="560.40" stroke="#484B50" stroke-width="2.3" />
<line x1="739.70" y1="556.00" x2="732.70" y2="556.00" stroke="#484B50" stroke-width="2.3" />
<line x1="739.83" y1="552.06" x2="732.84" y2="551.60" stroke="#484B50" stroke-width="2.3" />
<line x1="740.22" y1="548.13" x2="733.28" y2="547.22" stroke="#484B50" stroke-width="2.3" />
<line x1="740.86" y1="544.24" x2="733.99" y2="542.87" stroke="#484B50" stroke-width="2.3" />
<line x1="741.75" y1="540.39" x2="734.99" y2="538.58" stroke="#484B50" stroke-width="2.3" />
<line x1="742.90" y1="536.62" x2="736.27" y2="534.37" stroke="#484B50" stroke-width="2.3" />
<line x1="744.29" y1="532.92" x2="737.82" y2="530.25" stroke="#484B50" stroke-width="2.3" />
<line x1="745.92" y1="529.33" x2="739.64" y2="526.23" stroke="#484B50" stroke-width="2.3" />
<line x1="747.78" y1="525.85" x2="741.72" y2="522.35" stroke="#484B50" stroke-width="2.3" />
<line x1="749.86" y1="522.50" x2="744.04" y2="518.61" stroke="#484B50" stroke-width="2.3" />
<line x1="752.16" y1="519.29" x2="746.61" y2="515.03" stroke="#484B50" stroke-width="2.3" />
<line x1="754.66" y1="516.24" x2="749.40" y2="511.63" stroke="#484B50" stroke-width="2.3" />
<line x1="757.36" y1="513.36" x2="752.41" y2="508.41" stroke="#484B50" stroke-width="2.3" />
<line x1="760.24" y1="510.66" x2="755.63" y2="505.40" stroke="#484B50" stroke-width="2.3" />
<line x1="763.29" y1="508.16" x2="759.03" y2="502.61" stroke="#484B50" stroke-width="2.3" />
<line x1="766.50" y1="505.86" x2="762.61" y2="500.04" stroke="#484B50" stroke-width="2.3" />
<line x1="769.85" y1="503.78" x2="766.35" y2="497.72" stroke="#484B50" stroke-width="2.3" />
<line x1="773.33" y1="501.92" x2="770.23" y2="495.64" stroke="#484B50" stroke-width="2.3" />
<line x1="776.92" y1="500.29" x2="774.25" y2="493.82" stroke="#484B50" stroke-width="2.3" />
<line x1="780.62" y1="498.90" x2="778.37" y2="492.27" stroke="#484B50" stroke-width="2.3" />
<line x1="784.39" y1="497.75" x2="782.58" y2="490.99" stroke="#484B50" stroke-width="2.3" />
<line x1="788.24" y1="496.86" x2="786.87" y2="489.99" stroke="#484B50" stroke-width="2.3" />
<line x1="792.13" y1="496.22" x2="791.22" y2="489.28" stroke="#484B50" stroke-width="2.3" />
<line x1="796.06" y1="495.83" x2="795.60" y2="488.84" stroke="#484B50" stroke-width="2.3" />
<line x1="800.00" y1="495.70" x2="800.00" y2="488.70" stroke="#484B50" stroke-width="2.3" />
<line x1="803.94" y1="495.83" x2="804.40" y2="488.84" stroke="#484B50" stroke-width="2.3" />
<line x1="807.87" y1="496.22" x2="808.78" y2="489.28" stroke="#484B50" stroke-width="2.3" />
<line x1="811.76" y1="496.86" x2="813.13" y2="489.99" stroke="#484B50" stroke-width="2.3" />
<line x1="815.61" y1="497.75" x2="817.42" y2="490.99" stroke="#484B50" stroke-width="2.3" />
<line x1="819.38" y1="498.90" x2="821.63" y2="492.27" stroke="#484B50" stroke-width="2.3" />
<line x1="823.08" y1="500.29" x2="825.75" y2="493.82" stroke="#484B50" stroke-width="2.3" />
<line x1="826.67" y1="501.92" x2="829.77" y2="495.64" stroke="#484B50" stroke-width="2.3" />
<line x1="830.15" y1="503.78" x2="833.65" y2="497.72" stroke="#484B50" stroke-width="2.3" />
<line x1="833.50" y1="505.86" x2="837.39" y2="500.04" stroke="#484B50" stroke-width="2.3" />
<line x1="836.71" y1="508.16" x2="840.97" y2="502.61" stroke="#484B50" stroke-width="2.3" />
<line x1="839.76" y1="510.66" x2="844.37" y2="505.40" stroke="#484B50" stroke-width="2.3" />
<line x1="842.64" y1="513.36" x2="847.59" y2="508.41" stroke="#484B50" stroke-width="2.3" />
<line x1="845.34" y1="516.24" x2="850.60" y2="511.63" stroke="#484B50" stroke-width="2.3" />
<line x1="847.84" y1="519.29" x2="853.39" y2="515.03" stroke="#484B50" stroke-width="2.3" />
<line x1="850.14" y1="522.50" x2="855.96" y2="518.61" stroke="#484B50" stroke-width="2.3" />
<line x1="852.22" y1="525.85" x2="858.28" y2="522.35" stroke="#484B50" stroke-width="2.3" />
<line x1="854.08" y1="529.33" x2="860.36" y2="526.23" stroke="#484B50" stroke-width="2.3" />
<line x1="855.71" y1="532.92" x2="862.18" y2="530.25" stroke="#484B50" stroke-width="2.3" />
<line x1="857.10" y1="536.62" x2="863.73" y2="534.37" stroke="#484B50" stroke-width="2.3" />
<line x1="858.25" y1="540.39" x2="865.01" y2="538.58" stroke="#484B50" stroke-width="2.3" />
<line x1="859.14" y1="544.24" x2="866.01" y2="542.87" stroke="#484B50" stroke-width="2.3" />
<line x1="859.78" y1="548.13" x2="866.72" y2="547.22" stroke="#484B50" stroke-width="2.3" />
<line x1="860.17" y1="552.06" x2="867.16" y2="551.60" stroke="#484B50" stroke-width="2.3" />
<line x1="860.30" y1="556.00" x2="867.30" y2="556.00" stroke="#484B50" stroke-width="2.3" />
<line x1="860.17" y1="559.94" x2="867.16" y2="560.40" stroke="#484B50" stroke-width="2.3" />
<line x1="859.78" y1="563.87" x2="866.72" y2="564.78" stroke="#484B50" stroke-width="2.3" />
<line x1="859.14" y1="567.76" x2="866.01" y2="569.13" stroke="#484B50" stroke-width="2.3" />
<line x1="858.25" y1="571.61" x2="865.01" y2="573.42" stroke="#484B50" stroke-width="2.3" />
<line x1="857.10" y1="575.38" x2="863.73" y2="577.63" stroke="#484B50" stroke-width="2.3" />
<line x1="855.71" y1="579.08" x2="862.18" y2="581.75" stroke="#484B50" stroke-width="2.3" />
<line x1="854.08" y1="582.67" x2="860.36" y2="585.77" stroke="#484B50" stroke-width="2.3" />
<line x1="852.22" y1="586.15" x2="858.28" y2="589.65" stroke="#484B50" stroke-width="2.3" />
<line x1="850.14" y1="589.50" x2="855.96" y2="593.39" stroke="#484B50" stroke-width="2.3" />
<line x1="847.84" y1="592.71" x2="853.39" y2="596.97" stroke="#484B50" stroke-width="2.3" />
<line x1="845.34" y1="595.76" x2="850.60" y2="600.37" stroke="#484B50" stroke-width="2.3" />
<line x1="842.64" y1="598.64" x2="847.59" y2="603.59" stroke="#484B50" stroke-width="2.3" />
<line x1="800.00" y1="496.50" x2="800.00" y2="487.00" stroke="#E8E8E8" stroke-width="4.5" />
<line x1="757.93" y1="598.07" x2="751.21" y2="604.79" stroke="#E8E8E8" stroke-width="4.5" />
<line x1="842.07" y1="598.07" x2="848.79" y2="604.79" stroke="#E8E8E8" stroke-width="4.5" />
<circle cx="800" cy="557.5" r="52.5" fill="#1b1d21" opacity="0.55"/>
<circle cx="800" cy="556" r="50" fill="url(#kg)"/>
<line x1="800.00" y1="505.50" x2="800.00" y2="528.00" stroke="#E8E8E8" stroke-width="6.0" />
<text x="798.5" y="652.5" font-size="16" fill="#EDEDED" text-anchor="middle" font-weight="normal" stroke="#EDEDED" stroke-width="0.5" textLength="37.5" lengthAdjust="spacingAndGlyphs">Drive</text>
<circle cx="904.5" cy="596" r="17.500" fill="#1b1d21" opacity="0.5"/>
<circle cx="904.5" cy="595" r="15.700" fill="url(#kg)"/>
<line x1="912.10" y1="581.84" x2="907.75" y2="589.37" stroke="#E8E8E8" stroke-width="2.8" />
<text x="904.5" y="652.5" font-size="16" fill="#EDEDED" text-anchor="middle" font-weight="normal" stroke="#EDEDED" stroke-width="0.5" textLength="33.4" lengthAdjust="spacingAndGlyphs">High</text>
<path d="M971.11 571.39A45.8 45.8 0 1 1 1035.89 571.39" fill="none" stroke="#E6C044" stroke-width="7.2"/>
<line x1="973.45" y1="569.05" x2="967.44" y2="575.06" stroke="#E8E8E8" stroke-width="4" />
<line x1="1033.55" y1="569.05" x2="1039.56" y2="575.06" stroke="#E8E8E8" stroke-width="4" />
<circle cx="1003.5" cy="540.5" r="35.5" fill="#1b1d21" opacity="0.55"/>
<circle cx="1003.5" cy="539" r="33" fill="url(#kg)"/>
<line x1="1028.78" y1="560.98" x2="1016.45" y2="550.26" stroke="#E8E8E8" stroke-width="4.6" />
<text x="1003.5" y="614.5" font-size="16" fill="#EDEDED" text-anchor="middle" font-weight="normal" stroke="#EDEDED" stroke-width="0.5" textLength="76.8" lengthAdjust="spacingAndGlyphs">Head Bump</text>
<circle cx="1116" cy="478.5" r="17.500" fill="#1b1d21" opacity="0.5"/>
<circle cx="1116" cy="477.5" r="15.700" fill="url(#kg)"/>
<line x1="1107.72" y1="464.75" x2="1112.46" y2="472.05" stroke="#E8E8E8" stroke-width="2.8" />
<rect x="1144.5" y="489" width="11.0" height="8.0" rx="1.2" fill="#46494F"/>
<path d="M1152.8 489.5v-2.52a2.8 2.8 0 0 0 -5.6 0v1.400" fill="none" stroke="#46494F" stroke-width="1.8"/>
<rect x="1148.9" y="491.40" width="2.2" height="3.60" rx="0.8" fill="#292C31"/>
<text x="1116" y="534.5" font-size="16" fill="#EDEDED" text-anchor="middle" font-weight="normal" stroke="#EDEDED" stroke-width="0.5" textLength="39.4" lengthAdjust="spacingAndGlyphs">Noise</text>
<circle cx="1116" cy="596" r="17.500" fill="#1b1d21" opacity="0.5"/>
<circle cx="1116" cy="595" r="15.700" fill="url(#kg)"/>
<line x1="1101.91" y1="600.69" x2="1109.97" y2="597.43" stroke="#E8E8E8" stroke-width="2.8" />
<path d="M1154.81 605.31A5.7 5.7 0 1 1 1147.79 605.31" fill="none" stroke="#E6C044" stroke-width="2"/><path d="M1151.300 602v7" stroke="#E6C044" stroke-width="2"/>
<text x="1116" y="652.5" font-size="16" fill="#EDEDED" text-anchor="middle" font-weight="normal" stroke="#EDEDED" stroke-width="0.5" textLength="47" lengthAdjust="spacingAndGlyphs">Flutter</text>
<circle cx="1273" cy="539" r="51.0" fill="url(#ksh)"/>
<line x1="1242.24" y1="569.76" x2="1238.00" y2="574.00" stroke="#484B50" stroke-width="2.2" />
<line x1="1239.48" y1="566.73" x2="1234.86" y2="570.55" stroke="#484B50" stroke-width="2.2" />
<line x1="1237.02" y1="563.45" x2="1232.06" y2="566.82" stroke="#484B50" stroke-width="2.2" />
<line x1="1234.88" y1="559.96" x2="1229.62" y2="562.85" stroke="#484B50" stroke-width="2.2" />
<line x1="1233.08" y1="556.28" x2="1227.57" y2="558.66" stroke="#484B50" stroke-width="2.2" />
<line x1="1231.63" y1="552.44" x2="1225.92" y2="554.30" stroke="#484B50" stroke-width="2.2" />
<line x1="1230.55" y1="548.49" x2="1224.69" y2="549.80" stroke="#484B50" stroke-width="2.2" />
<line x1="1229.84" y1="544.45" x2="1223.89" y2="545.20" stroke="#484B50" stroke-width="2.2" />
<line x1="1229.52" y1="540.37" x2="1223.52" y2="540.55" stroke="#484B50" stroke-width="2.2" />
<line x1="1229.59" y1="536.27" x2="1223.60" y2="535.89" stroke="#484B50" stroke-width="2.2" />
<line x1="1230.04" y1="532.20" x2="1224.11" y2="531.26" stroke="#484B50" stroke-width="2.2" />
<line x1="1230.87" y1="528.18" x2="1225.06" y2="526.69" stroke="#484B50" stroke-width="2.2" />
<line x1="1232.07" y1="524.26" x2="1226.43" y2="522.23" stroke="#484B50" stroke-width="2.2" />
<line x1="1233.64" y1="520.48" x2="1228.21" y2="517.92" stroke="#484B50" stroke-width="2.2" />
<line x1="1235.56" y1="516.86" x2="1230.39" y2="513.80" stroke="#484B50" stroke-width="2.2" />
<line x1="1237.81" y1="513.43" x2="1232.95" y2="509.90" stroke="#484B50" stroke-width="2.2" />
<line x1="1240.37" y1="510.23" x2="1235.87" y2="506.27" stroke="#484B50" stroke-width="2.2" />
<line x1="1243.22" y1="507.29" x2="1239.11" y2="502.92" stroke="#484B50" stroke-width="2.2" />
<line x1="1246.34" y1="504.63" x2="1242.66" y2="499.89" stroke="#484B50" stroke-width="2.2" />
<line x1="1249.69" y1="502.27" x2="1246.48" y2="497.21" stroke="#484B50" stroke-width="2.2" />
<line x1="1253.25" y1="500.24" x2="1250.53" y2="494.90" stroke="#484B50" stroke-width="2.2" />
<line x1="1256.99" y1="498.55" x2="1254.78" y2="492.98" stroke="#484B50" stroke-width="2.2" />
<line x1="1260.86" y1="497.23" x2="1259.19" y2="491.47" stroke="#484B50" stroke-width="2.2" />
<line x1="1264.85" y1="496.27" x2="1263.72" y2="490.38" stroke="#484B50" stroke-width="2.2" />
<line x1="1268.91" y1="495.69" x2="1268.34" y2="489.72" stroke="#484B50" stroke-width="2.2" />
<line x1="1273.00" y1="495.50" x2="1273.00" y2="489.50" stroke="#484B50" stroke-width="2.2" />
<line x1="1277.09" y1="495.69" x2="1277.66" y2="489.72" stroke="#484B50" stroke-width="2.2" />
<line x1="1281.15" y1="496.27" x2="1282.28" y2="490.38" stroke="#484B50" stroke-width="2.2" />
<line x1="1285.14" y1="497.23" x2="1286.81" y2="491.47" stroke="#484B50" stroke-width="2.2" />
<line x1="1289.01" y1="498.55" x2="1291.22" y2="492.98" stroke="#484B50" stroke-width="2.2" />
<line x1="1292.75" y1="500.24" x2="1295.47" y2="494.90" stroke="#484B50" stroke-width="2.2" />
<line x1="1296.31" y1="502.27" x2="1299.52" y2="497.21" stroke="#484B50" stroke-width="2.2" />
<line x1="1299.66" y1="504.63" x2="1303.34" y2="499.89" stroke="#484B50" stroke-width="2.2" />
<line x1="1302.78" y1="507.29" x2="1306.89" y2="502.92" stroke="#484B50" stroke-width="2.2" />
<line x1="1305.63" y1="510.23" x2="1310.13" y2="506.27" stroke="#484B50" stroke-width="2.2" />
<line x1="1308.19" y1="513.43" x2="1313.05" y2="509.90" stroke="#484B50" stroke-width="2.2" />
<line x1="1310.44" y1="516.86" x2="1315.61" y2="513.80" stroke="#484B50" stroke-width="2.2" />
<line x1="1312.36" y1="520.48" x2="1317.79" y2="517.92" stroke="#484B50" stroke-width="2.2" />
<line x1="1313.93" y1="524.26" x2="1319.57" y2="522.23" stroke="#484B50" stroke-width="2.2" />
<line x1="1315.13" y1="528.18" x2="1320.94" y2="526.69" stroke="#484B50" stroke-width="2.2" />
<line x1="1315.96" y1="532.20" x2="1321.89" y2="531.26" stroke="#484B50" stroke-width="2.2" />
<line x1="1316.41" y1="536.27" x2="1322.40" y2="535.89" stroke="#484B50" stroke-width="2.2" />
<line x1="1316.48" y1="540.37" x2="1322.48" y2="540.55" stroke="#484B50" stroke-width="2.2" />
<line x1="1316.16" y1="544.45" x2="1322.11" y2="545.20" stroke="#484B50" stroke-width="2.2" />
<line x1="1315.45" y1="548.49" x2="1321.31" y2="549.80" stroke="#484B50" stroke-width="2.2" />
<line x1="1314.37" y1="552.44" x2="1320.08" y2="554.30" stroke="#484B50" stroke-width="2.2" />
<line x1="1312.92" y1="556.28" x2="1318.43" y2="558.66" stroke="#484B50" stroke-width="2.2" />
<line x1="1311.12" y1="559.96" x2="1316.38" y2="562.85" stroke="#484B50" stroke-width="2.2" />
<line x1="1308.98" y1="563.45" x2="1313.94" y2="566.82" stroke="#484B50" stroke-width="2.2" />
<line x1="1306.52" y1="566.73" x2="1311.14" y2="570.55" stroke="#484B50" stroke-width="2.2" />
<line x1="1303.76" y1="569.76" x2="1308.00" y2="574.00" stroke="#484B50" stroke-width="2.2" />
<line x1="1273.00" y1="496.50" x2="1273.00" y2="488.00" stroke="#E8E8E8" stroke-width="4" />
<line x1="1242.95" y1="569.05" x2="1236.94" y2="575.06" stroke="#E8E8E8" stroke-width="4" />
<line x1="1303.05" y1="569.05" x2="1309.06" y2="575.06" stroke="#E8E8E8" stroke-width="4" />
<circle cx="1273" cy="540.5" r="35.5" fill="#1b1d21" opacity="0.55"/>
<circle cx="1273" cy="539" r="33" fill="url(#kg)"/>
<line x1="1273.00" y1="505.50" x2="1273.00" y2="521.84" stroke="#E8E8E8" stroke-width="4.6" />
<text x="1272" y="613.5" font-size="16" fill="#EDEDED" text-anchor="middle" font-weight="normal" stroke="#EDEDED" stroke-width="0.5" textLength="90.4" lengthAdjust="spacingAndGlyphs">Output Filter</text>
<circle cx="1229" cy="647.5" r="17.500" fill="#1b1d21" opacity="0.5"/>
<circle cx="1229" cy="646.5" r="15.700" fill="url(#kg)"/>
<line x1="1229.53" y1="631.31" x2="1229.23" y2="640.00" stroke="#E8E8E8" stroke-width="2.8" />
<text x="1298" y="651.5" font-size="16" fill="#EDEDED" text-anchor="middle" font-weight="normal" stroke="#EDEDED" stroke-width="0.5" textLength="75.8" lengthAdjust="spacingAndGlyphs">Resonance</text>
<rect x="294" y="700" width="151.500" height="31.500" fill="#1A1C20"/>
<text x="301.7" y="722" font-size="16" fill="#EDEDED" text-anchor="start" font-weight="normal" stroke="#EDEDED" stroke-width="0.35" textLength="55.6" lengthAdjust="spacingAndGlyphs">Internal</text>
<path d="M409.500 713.500l9 6.500l9 -6.500" fill="none" stroke="#F0F0F0" stroke-width="2"/>
<circle cx="572.5" cy="718.5" r="17.500" fill="#1b1d21" opacity="0.5"/>
<circle cx="572.5" cy="717.5" r="15.700" fill="url(#kg)"/>
<line x1="557.30" y1="717.50" x2="566.00" y2="717.50" stroke="#E8E8E8" stroke-width="2.8" />
<text x="642" y="722" font-size="16" fill="#EDEDED" text-anchor="middle" font-weight="normal" stroke="#EDEDED" stroke-width="0.5" textLength="70.7" lengthAdjust="spacingAndGlyphs">Sensitivity</text>
<text x="800" y="699.5" font-size="12.5" fill="#777A80" text-anchor="middle" font-weight="normal"  textLength="65.5" lengthAdjust="spacingAndGlyphs">Modulation</text>
<circle cx="800" cy="723" r="7.800" fill="#4E472C"/>
<circle cx="950" cy="718.5" r="17.500" fill="#1b1d21" opacity="0.5"/>
<circle cx="950" cy="717.5" r="15.700" fill="url(#kg)"/>
<line x1="938.02" y1="726.86" x2="944.88" y2="721.50" stroke="#E8E8E8" stroke-width="2.8" />
<text x="1019" y="722" font-size="16" fill="#EDEDED" text-anchor="middle" font-weight="normal" stroke="#EDEDED" stroke-width="0.5" textLength="44.5" lengthAdjust="spacingAndGlyphs">Attack</text>
<circle cx="1191.5" cy="718.5" r="17.500" fill="#1b1d21" opacity="0.5"/>
<circle cx="1191.5" cy="717.5" r="15.700" fill="url(#kg)"/>
<line x1="1197.92" y1="703.72" x2="1194.25" y2="711.61" stroke="#E8E8E8" stroke-width="2.8" />
<text x="1260" y="722" font-size="16" fill="#EDEDED" text-anchor="middle" font-weight="normal" stroke="#EDEDED" stroke-width="0.5" textLength="42" lengthAdjust="spacingAndGlyphs">Decay</text>
</g>
</svg>
</body></html>
